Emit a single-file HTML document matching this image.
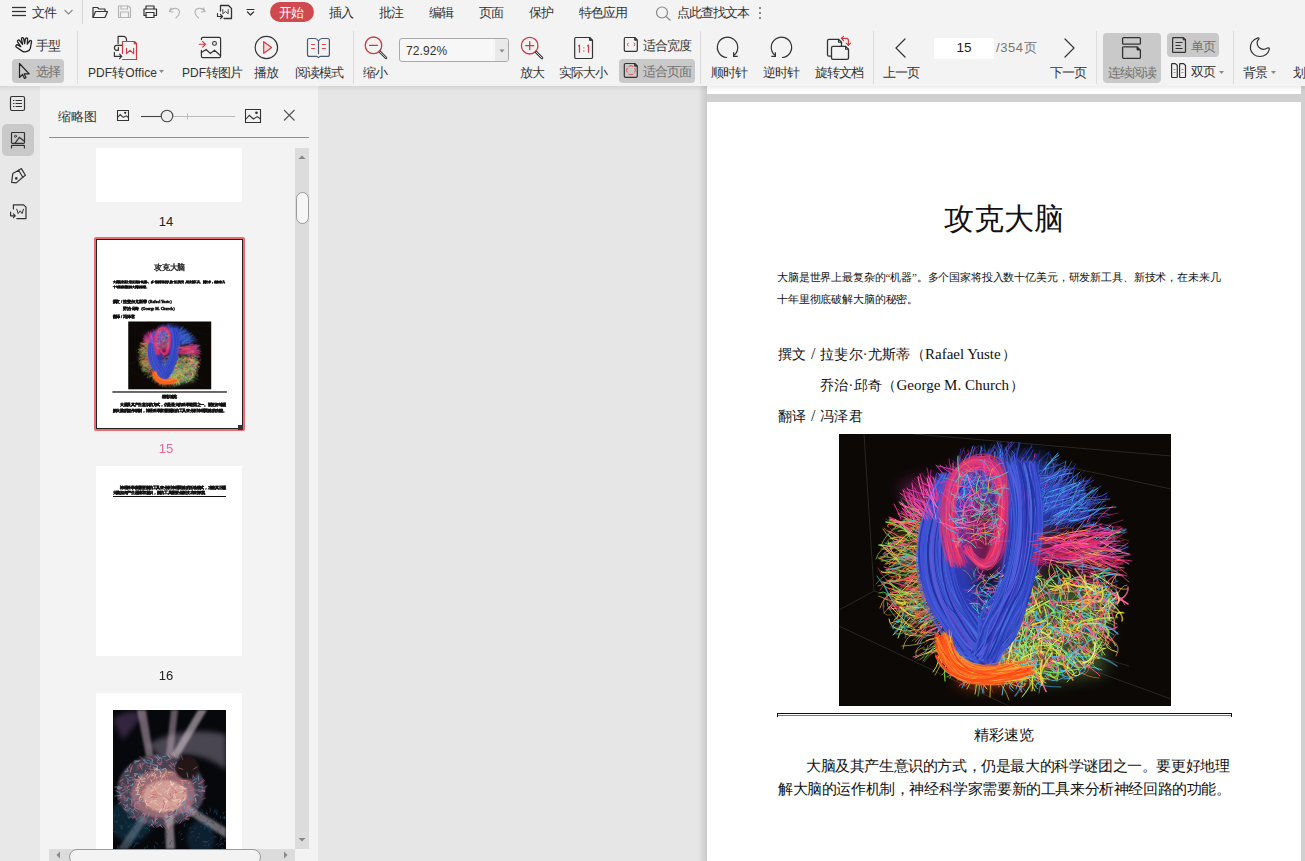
<!DOCTYPE html>
<html><head><meta charset="utf-8">
<style>
*{box-sizing:border-box;margin:0;padding:0}
html,body{width:1305px;height:861px;overflow:hidden;background:#f3f3f3;font-family:"Liberation Sans",sans-serif;color:#333}
.a{position:absolute}
.t{position:absolute;white-space:nowrap;font-size:13px;line-height:16px;color:#333;letter-spacing:-1px}
.L{font-size:12px;letter-spacing:0.1px}
.sep{position:absolute;width:1px;background:#dcdcdc}
svg{position:absolute;overflow:visible}
.hl{position:absolute;background:#c9c9c9;border-radius:4px}
.pt{position:absolute;white-space:nowrap;font-family:"Liberation Serif",serif;color:#111}
.tb{font-weight:bold !important;-webkit-text-stroke:1.8px #111}
.s15{font-size:15px;letter-spacing:0;word-spacing:0}
</style></head><body>
<svg width="0" height="0" style="position:absolute"><defs><filter id="bb" x="-50%" y="-50%" width="200%" height="200%"><feGaussianBlur stdDeviation="8"/></filter><filter id="sb"><feGaussianBlur stdDeviation="0.35"/></filter><symbol id="brain" viewBox="0 0 332 272"><rect width="332" height="272" fill="#0b0806"/><g stroke="#2c2a28" stroke-width="0.9" fill="none"><path d="M25 0 L35 157 L0 176"/><path d="M35 157 L290 232"/><path d="M0 192 L170 272"/><path d="M75 0 L332 22"/><path d="M205 28 L332 55"/><path d="M258 238 L332 265"/></g><g filter="url(#bb)"><path d="M105 45 L130 40 L130 100 L155 215 L130 228 L95 180 L82 120 Z" fill="#2a3cb8" opacity="0.95"/><path d="M170 30 L205 40 L198 130 L178 190 L152 228 L140 212 L158 150 L168 90 Z" fill="#2a3cb8" opacity="0.95"/><path d="M130 25 L200 22 L235 60 L230 90 L190 95 L140 60 Z" fill="#3048c0" opacity="0.7"/><path d="M110 60 C105 25 140 18 160 35 C175 60 170 120 155 130 C130 140 112 120 110 60 Z" fill="#b02a70" opacity="0.6"/><path d="M62 50 L100 42 L105 90 L72 85 Z" fill="#d030a0" opacity="0.45"/><path d="M195 100 L265 108 L268 130 L200 132 Z" fill="#c02878" opacity="0.45"/><path d="M55 90 L95 95 L100 200 L65 190 Z" fill="#9a7a30" opacity="0.35"/><path d="M105 210 L190 215 L185 250 L125 252 Z" fill="#e04818" opacity="0.8"/><path d="M175 145 L270 150 L265 240 L195 250 L165 225 Z" fill="#7aa050" opacity="0.45"/></g><g fill="none" stroke-linecap="round" filter="url(#sb)"><path d="M172 227Q176 235 171 243M132 213Q135 221 133 233M253 188Q263 185 268 195M177 213Q185 219 188 227M166 208Q166 210 163 223" stroke="#ff5080" stroke-width="1.0" opacity="0.8"/><path d="M95 114Q81 106 74 106M91 153Q77 156 67 155M105 190Q95 190 84 194M73 94Q59 86 50 83M72 95Q68 98 55 89M93 104Q83 105 76 101M92 175Q84 174 84 177" stroke="#ff4060" stroke-width="1.0" opacity="1.0"/><path d="M239 100Q241 93 248 98M255 152Q265 154 278 151M248 164Q252 171 258 167M239 144Q249 148 254 155M243 111Q248 110 262 114M232 102Q235 96 244 98M234 124Q249 128 256 127M246 102Q263 99 268 100M253 163Q261 159 261 167M231 147Q236 151 252 145M231 147Q236 152 245 148M234 122Q246 125 247 123M237 157Q238 155 244 164M267 91Q274 94 282 93" stroke="#e02070" stroke-width="1.0" opacity="0.8"/><path d="M223 72Q233 73 244 63M193 66Q197 59 199 57M162 41Q164 33 156 27M187 54Q185 39 192 28M192 71Q195 64 198 66" stroke="#4a70e0" stroke-width="1.0" opacity="1.0"/><path d="M215 89Q215 84 220 79M217 95Q219 86 225 86M183 64Q184 50 176 41M176 55Q177 50 185 40M184 34Q196 30 196 20M171 70Q169 68 172 60" stroke="#ff4090" stroke-width="1.0" opacity="0.8"/><path d="M104 191Q100 202 87 202M87 188Q89 192 82 198M133 212Q127 217 123 230M85 132Q78 122 60 123M78 100Q67 100 62 88M90 111Q84 100 72 93M141 222Q146 233 140 240M108 192Q94 192 85 200M75 172Q60 174 51 175M137 240Q131 248 127 251M59 122Q49 116 48 114M174 242Q176 246 183 258" stroke="#ff60a0" stroke-width="1.0" opacity="1.0"/><path d="M131 73Q128 64 132 48M264 139Q279 139 288 142M108 78Q102 72 94 55M274 129Q279 124 293 127M114 88Q103 81 100 85M226 110Q224 101 232 102M122 87Q111 79 103 82M233 147Q244 147 248 157M259 85Q261 81 274 72" stroke="#ff3090" stroke-width="1.0" opacity="0.8"/><path d="M95 102Q91 94 89 95M93 126Q76 121 71 115" stroke="#ff4060" stroke-width="0.5" opacity="1.0"/><path d="M137 234Q142 247 144 259M122 211Q115 217 118 228M125 221Q131 236 127 245M220 196Q233 196 242 206M178 228Q177 239 179 243M161 218Q164 226 164 230M126 205Q122 207 120 219M131 232Q128 243 123 254M185 231Q189 240 192 238M141 236Q138 236 134 247M211 202Q211 221 216 229" stroke="#40c0ff" stroke-width="1.0" opacity="0.8"/><path d="M234 100Q231 91 240 89M256 119Q259 113 262 114M258 180Q261 190 275 195M231 128Q237 131 243 134M256 126Q264 127 267 119M236 138Q244 137 263 142M249 152Q251 156 263 152" stroke="#ff3090" stroke-width="0.5" opacity="0.8"/><path d="M78 159Q68 160 58 162M91 152Q81 148 78 152M53 138Q43 140 42 137M92 135Q74 140 67 135M100 214Q102 228 94 238M75 86Q74 81 62 69" stroke="#e8d040" stroke-width="1.0" opacity="1.0"/><path d="M151 62Q157 62 156 49M200 72Q209 70 219 57M234 86Q244 85 247 77M139 48Q135 46 134 33M216 55Q221 48 229 44M258 77Q258 76 267 71M212 42Q218 34 212 24M190 71Q192 63 205 54M231 80Q243 72 252 70" stroke="#5a50d0" stroke-width="1.0" opacity="0.8"/><path d="M138 41Q137 36 132 35M212 58Q218 45 221 34M161 56Q164 48 167 39M227 81Q235 80 237 75M165 28Q171 17 169 8" stroke="#ff4090" stroke-width="0.5" opacity="0.8"/><path d="M106 93Q101 92 99 84M251 157Q257 159 272 161M255 95Q272 96 280 99M271 149Q270 151 279 147M114 60Q108 53 91 50M101 91Q99 81 91 77M247 99Q254 94 255 88M97 76Q90 69 76 65M260 115Q279 110 287 112M122 85Q118 81 117 66" stroke="#4060e0" stroke-width="1.0" opacity="0.8"/><path d="M124 81Q127 67 122 61M246 120Q253 122 258 123M240 136Q239 129 248 133M83 76Q68 75 61 70M261 181Q268 179 274 179M248 99Q254 91 258 88M269 148Q281 157 289 155M239 163Q245 166 248 165M266 151Q274 159 283 165" stroke="#f0a040" stroke-width="1.0" opacity="0.8"/><path d="M115 219Q115 228 103 241M207 190Q213 196 228 201M105 208Q101 215 101 220M222 188Q226 186 229 193" stroke="#f0d040" stroke-width="1.0" opacity="0.6"/><path d="M61 125Q57 118 44 120M66 113Q55 110 49 100M97 198Q84 200 81 209M100 176Q93 187 80 188M81 127Q70 120 65 122M109 177Q101 184 98 202M94 115Q78 111 71 113M88 87Q80 82 72 71M104 173Q101 175 87 174M72 117Q65 110 47 109M92 150Q85 150 68 159M70 193Q57 192 55 200M101 103Q95 96 86 89M113 186Q112 197 104 208M106 199Q103 205 91 211M81 169Q78 173 73 173M61 177Q60 183 55 186" stroke="#40c0c0" stroke-width="1.0" opacity="0.8"/><path d="M162 33Q166 26 162 11M201 81Q210 81 209 74M174 31Q178 19 173 17M247 72Q256 59 259 56M136 37Q138 30 143 13" stroke="#5060e0" stroke-width="1.0" opacity="1.0"/><path d="M234 124Q244 119 244 115M122 66Q122 57 110 51M135 71Q138 54 131 45M229 125Q242 124 245 132M239 152Q248 160 256 163M253 153Q259 158 273 163M90 74Q78 63 73 64M223 105Q229 95 230 97" stroke="#f0a040" stroke-width="1.0" opacity="0.6"/><path d="M103 84Q97 74 98 73M137 67Q143 60 140 46" stroke="#f050b0" stroke-width="1.0" opacity="0.6"/><path d="M219 91Q224 90 226 81M198 80Q201 76 205 62" stroke="#4050d8" stroke-width="1.0" opacity="0.6"/><path d="M239 161Q249 168 252 166M250 141Q258 141 265 134" stroke="#ff50a0" stroke-width="0.5" opacity="0.8"/><path d="M176 71Q176 64 177 62M129 33Q128 32 123 27M207 70Q215 63 221 60M157 49Q154 40 151 34M242 92Q252 86 267 91M218 97Q220 92 225 91M243 91Q252 90 253 79M185 74Q184 66 192 63" stroke="#3040c0" stroke-width="1.0" opacity="0.6"/><path d="M195 48Q202 38 198 31M180 59Q181 47 185 36M240 89Q247 87 251 82M146 35Q146 30 142 20" stroke="#3a5ad0" stroke-width="1.0" opacity="0.8"/><path d="M240 145Q241 145 253 148" stroke="#ff50a0" stroke-width="0.5" opacity="0.6"/><path d="M255 119Q267 116 275 104M238 131Q241 128 247 128" stroke="#f0a040" stroke-width="0.5" opacity="1.0"/><path d="M190 44Q194 30 198 23M212 72Q220 64 231 53M238 67Q241 64 244 61M227 66Q227 55 232 51M150 65Q145 55 138 54M189 67Q183 59 185 40M189 52Q189 41 191 33M177 62Q177 51 181 38" stroke="#2a3ab0" stroke-width="1.0" opacity="0.8"/><path d="M96 195Q92 195 79 204" stroke="#d0e040" stroke-width="0.5" opacity="0.6"/><path d="M219 57Q236 52 241 46M232 66Q232 70 242 62" stroke="#40a0f0" stroke-width="1.0" opacity="0.6"/><path d="M90 123Q77 121 72 129M89 142Q82 136 77 136M81 148Q64 146 58 145M91 128Q79 137 77 134M95 205Q91 204 87 207M82 102Q81 94 77 95M104 107Q93 102 92 100M98 113Q96 104 86 107" stroke="#f0a030" stroke-width="1.0" opacity="1.0"/><path d="M260 136Q274 139 277 140M236 135Q248 137 262 132M248 92Q252 93 256 91M234 156Q246 159 254 150M267 110Q277 109 276 103M254 116Q257 118 270 110" stroke="#ff50a0" stroke-width="1.0" opacity="0.8"/><path d="M251 92Q256 92 261 86M253 109Q268 104 272 92M237 109Q245 100 251 89M237 145Q241 146 256 147M237 158Q251 165 259 176" stroke="#e02070" stroke-width="0.5" opacity="0.8"/><path d="M193 224Q198 227 197 236M208 198Q211 203 223 216M189 227Q183 242 186 247M103 215Q101 216 93 219M129 238Q133 245 126 249M119 232Q112 241 111 244M167 210Q167 218 170 218M217 188Q220 187 224 193M162 218Q168 223 165 234M161 207Q155 219 153 229M244 183Q253 179 252 186M151 218Q147 224 141 233" stroke="#40e0c0" stroke-width="1.0" opacity="0.8"/><path d="M71 85Q63 91 50 86M66 117Q61 115 49 111M98 123Q90 124 78 117M92 124Q83 128 68 135" stroke="#e8d040" stroke-width="1.0" opacity="0.8"/><path d="M161 211Q152 216 151 230M228 188Q235 198 244 198" stroke="#50c0f0" stroke-width="0.5" opacity="0.6"/><path d="M186 70Q193 59 196 61M228 83Q228 77 234 65M223 81Q234 79 236 76M193 37Q194 35 199 32" stroke="#3040c0" stroke-width="1.0" opacity="0.8"/><path d="M216 91Q227 84 227 79M210 78Q209 69 215 70M215 86Q217 76 230 75M228 80Q234 79 244 77M186 59Q193 58 195 45M148 67Q152 55 145 54" stroke="#5a50d0" stroke-width="1.0" opacity="0.6"/><path d="M179 37Q177 36 184 24M205 61Q205 51 209 47M221 87Q223 77 226 73M226 81Q239 67 244 65M181 58Q181 52 181 43M248 88Q254 78 252 81" stroke="#ff4090" stroke-width="1.0" opacity="1.0"/><path d="M117 215Q112 222 104 228M237 175Q249 169 255 174M235 176Q241 174 248 176M200 208Q207 210 213 217M191 233Q197 241 193 245M124 225Q116 229 110 235M142 227Q141 236 138 240M234 223Q240 226 246 233M150 201Q146 209 149 210M197 234Q197 247 202 249M130 207Q120 221 112 226M204 192Q214 202 212 217M199 224Q195 222 198 232M187 215Q181 219 186 224" stroke="#ff9040" stroke-width="1.0" opacity="0.8"/><path d="M205 224Q213 236 219 238M232 210Q236 218 238 220M235 170Q243 172 240 178" stroke="#ff5080" stroke-width="1.0" opacity="0.6"/><path d="M106 62Q96 51 94 51M118 85Q105 79 98 73M94 62Q79 59 68 55M113 87Q105 77 105 78M124 86Q118 84 107 70M132 70Q127 61 132 60M109 70Q108 70 101 63" stroke="#e030c0" stroke-width="1.0" opacity="0.8"/><path d="M144 39Q139 25 145 20M246 84Q252 77 255 78M246 85Q255 79 271 76" stroke="#2030a0" stroke-width="0.5" opacity="0.8"/><path d="M88 147Q81 143 66 150M132 217Q122 224 124 234M181 201Q175 204 176 219M83 139Q75 145 67 148M104 165Q93 162 82 168M99 131Q95 127 80 127M69 153Q57 149 47 146M115 192Q107 204 110 209M107 184Q99 198 96 202M63 154Q55 160 53 158M102 106Q93 102 74 105M79 88Q63 84 59 80M189 224Q195 230 197 242M102 208Q101 218 90 219M162 228Q158 243 160 253M84 83Q75 75 78 77M76 84Q68 79 69 77M191 237Q190 245 191 251M259 188Q262 196 267 204M91 184Q80 183 72 192M230 187Q231 186 236 193M247 180Q252 182 255 183M94 182Q86 184 74 195M95 207Q86 221 74 223M66 127Q64 123 54 123M92 180Q81 195 76 200M139 234Q134 242 120 252M248 183Q257 198 258 204M108 174Q108 179 98 176M134 198Q127 208 125 221" stroke="#ff60a0" stroke-width="1.0" opacity="0.8"/><path d="M77 98Q71 87 68 84M77 103Q74 108 60 106M89 211Q86 223 81 226M99 186Q95 189 92 192M89 182Q77 186 74 183M53 139Q45 140 37 150M100 155Q91 153 73 153M85 162Q75 155 61 159" stroke="#60d060" stroke-width="1.0" opacity="0.6"/><path d="M75 121Q73 127 63 123M86 170Q76 175 76 182" stroke="#40c0c0" stroke-width="0.5" opacity="1.0"/><path d="M257 194Q265 195 264 200M119 194Q109 206 109 216M224 190Q231 199 233 215" stroke="#ff9040" stroke-width="0.5" opacity="0.8"/><path d="M231 172Q237 172 241 177M205 211Q206 218 215 216M124 208Q121 216 120 217M126 206Q117 219 116 227M157 225Q166 235 168 251M106 214Q104 218 102 232M110 215Q115 224 107 228M117 196Q120 213 113 219" stroke="#80f060" stroke-width="1.0" opacity="0.8"/><path d="M67 159Q59 164 54 168M107 200Q96 204 87 207M99 154Q86 160 76 165M95 182Q93 185 81 195M99 161Q93 161 81 161" stroke="#f0a030" stroke-width="1.0" opacity="0.8"/><path d="M103 94Q95 89 95 92M63 105Q56 99 51 94M148 221Q149 221 144 234M90 127Q81 127 65 125" stroke="#ff60a0" stroke-width="0.5" opacity="0.8"/><path d="M99 183Q90 190 91 186M54 144Q48 150 39 152M89 168Q83 169 79 181M76 139Q63 136 52 135M88 113Q84 102 77 100M106 175Q105 188 92 193M80 161Q66 164 59 178" stroke="#f07030" stroke-width="1.0" opacity="0.8"/><path d="M178 205Q185 216 188 220M222 191Q225 202 236 204M137 232Q143 244 140 256M161 226Q162 232 152 247M129 212Q122 220 115 221" stroke="#40c0ff" stroke-width="0.5" opacity="1.0"/><path d="M250 116Q252 111 264 102M248 173Q262 176 274 171M263 176Q267 185 278 190M262 174Q271 176 271 184M268 94Q277 100 287 96M265 101Q274 99 274 93M261 166Q278 167 285 163M252 160Q264 162 272 160M246 110Q247 106 258 103" stroke="#40c0f0" stroke-width="1.0" opacity="0.8"/><path d="M133 225Q136 239 138 252M151 221Q153 227 145 235M227 193Q233 203 243 202M128 220Q129 234 125 235M240 184Q247 185 246 190M219 176Q231 181 237 183M189 204Q200 211 199 220M164 211Q169 214 163 226" stroke="#50c0f0" stroke-width="0.5" opacity="0.8"/><path d="M66 114Q65 107 53 104M99 112Q96 110 83 115M89 114Q87 117 76 114M91 104Q85 95 70 90M97 178Q87 181 82 185M107 199Q106 205 95 213M86 91Q75 92 65 83M81 80Q80 73 73 75M65 174Q59 180 57 185" stroke="#d0e040" stroke-width="1.0" opacity="0.8"/><path d="M189 231Q182 250 182 258" stroke="#40e0c0" stroke-width="1.0" opacity="0.6"/><path d="M182 227Q184 235 180 243M146 203Q139 218 131 225M148 227Q144 242 139 251" stroke="#40c0ff" stroke-width="1.0" opacity="1.0"/><path d="M117 90Q114 76 102 72M122 56Q126 47 122 46M263 108Q276 108 278 105M253 116Q263 112 269 104M250 176Q258 188 264 195" stroke="#4060e0" stroke-width="1.0" opacity="0.6"/><path d="M99 161Q86 166 75 166M84 196Q84 199 73 207M69 164Q64 170 49 174M86 214Q84 212 76 218" stroke="#d0e040" stroke-width="0.5" opacity="0.8"/><path d="M89 128Q74 129 66 138M80 102Q78 98 72 102M85 107Q80 112 77 108M61 142Q58 144 52 143" stroke="#f07030" stroke-width="1.0" opacity="0.6"/><path d="M199 225Q193 238 197 241M114 208Q107 217 110 215M146 233Q138 242 136 260M101 215Q85 219 76 224M231 169Q231 168 240 169M155 239Q160 248 158 248M136 237Q134 243 128 255M239 173Q244 170 250 175M165 206Q173 213 172 218M132 222Q124 225 127 235M212 211Q220 222 226 228M179 219Q179 230 182 233M141 204Q141 210 131 224" stroke="#c0f040" stroke-width="1.0" opacity="0.8"/><path d="M189 222Q194 228 202 242M117 207Q109 211 102 226M238 196Q254 203 261 205M143 217Q140 228 142 231" stroke="#c0f040" stroke-width="1.0" opacity="1.0"/><path d="M99 217Q89 222 78 226M191 244Q192 247 192 257M241 186Q247 188 255 188" stroke="#ff9040" stroke-width="0.5" opacity="0.6"/><path d="M199 195Q199 202 201 207M197 194Q201 202 212 212M132 209Q126 214 122 226M186 225Q194 239 201 243" stroke="#f0f080" stroke-width="1.0" opacity="1.0"/><path d="M123 59Q118 55 109 42M101 65Q95 60 89 48" stroke="#ff40a0" stroke-width="1.0" opacity="0.8"/><path d="M197 194Q203 209 198 215M241 212Q254 220 260 224M125 223Q121 230 110 233M106 216Q100 229 100 230M213 226Q214 226 219 232M201 229Q203 231 201 240M134 224Q125 227 123 239M160 224Q152 241 147 247M141 207Q137 217 142 223M195 203Q194 216 193 220M232 222Q241 236 241 240M106 219Q108 220 98 224" stroke="#f0f080" stroke-width="1.0" opacity="0.8"/><path d="M97 86Q93 79 80 82" stroke="#e030c0" stroke-width="0.5" opacity="0.6"/><path d="M178 52Q175 46 176 39M135 48Q133 40 120 25M177 63Q176 54 184 52M188 57Q186 45 190 36M237 83Q244 76 260 68" stroke="#5060e0" stroke-width="1.0" opacity="0.6"/><path d="M76 192Q64 193 51 193M102 99Q91 97 86 94M78 175Q65 177 59 188M72 153Q68 148 52 146" stroke="#40c0c0" stroke-width="0.5" opacity="0.8"/><path d="M147 234Q150 249 154 259M260 184Q268 190 272 187" stroke="#ff5080" stroke-width="0.5" opacity="0.6"/><path d="M269 103Q274 105 282 97" stroke="#40c0f0" stroke-width="0.5" opacity="0.8"/><path d="M236 200Q241 204 240 209M231 196Q231 206 238 206M199 205Q214 214 222 221M232 184Q232 190 239 191M148 222Q137 228 134 237M106 208Q91 217 87 220M139 227Q143 232 142 247" stroke="#e0f040" stroke-width="1.0" opacity="1.0"/><path d="M251 128Q254 133 265 128M236 110Q247 108 248 112M247 143Q255 141 255 143" stroke="#e02070" stroke-width="0.5" opacity="1.0"/><path d="M222 195Q230 199 247 203M127 193Q117 198 106 210M247 187Q260 193 265 193M182 213Q184 216 187 223" stroke="#f0d040" stroke-width="0.5" opacity="0.8"/><path d="M86 167Q75 173 71 177M57 126Q52 122 41 123M68 141Q57 142 47 136M117 182Q118 192 107 197" stroke="#60d060" stroke-width="1.0" opacity="1.0"/><path d="M261 94Q262 96 272 96M253 170Q264 175 263 175M242 111Q254 108 259 112M228 111Q239 107 250 113M239 113Q249 108 257 112M251 137Q253 139 261 137" stroke="#e02070" stroke-width="1.0" opacity="1.0"/><path d="M65 121Q57 120 56 119M98 155Q94 152 90 155M79 81Q70 83 60 79M78 132Q70 132 66 132M86 134Q85 133 73 133M78 179Q79 184 70 191M59 155Q51 149 42 147M92 187Q91 190 82 200M105 105Q99 98 98 98M91 105Q82 97 78 87" stroke="#ff4060" stroke-width="1.0" opacity="0.8"/><path d="M156 207Q152 213 149 224M228 225Q230 232 242 232M83 98Q76 95 72 87M248 204Q254 200 267 207M95 157Q89 157 81 160M182 223Q181 231 190 244M96 108Q84 104 69 109M70 129Q68 127 62 128M90 106Q77 99 67 101M228 181Q233 188 237 185" stroke="#ff60a0" stroke-width="1.0" opacity="0.6"/><path d="M71 184Q63 191 59 204M97 142Q88 144 82 136M78 171Q75 173 68 172" stroke="#d0e040" stroke-width="1.0" opacity="1.0"/><path d="M146 36Q143 30 142 25M211 43Q213 44 221 34M235 64Q240 57 252 51M139 31Q137 31 137 20" stroke="#40a0f0" stroke-width="0.5" opacity="1.0"/><path d="M226 87Q235 84 237 84M200 71Q211 62 216 56M186 75Q185 60 189 57M217 84Q226 75 223 63M218 65Q222 60 227 54M223 48Q220 42 227 36M182 47Q180 36 178 26M187 63Q196 55 194 50" stroke="#40a0f0" stroke-width="1.0" opacity="0.8"/><path d="M101 164Q90 164 74 169M62 109Q54 117 42 115" stroke="#e8d040" stroke-width="0.5" opacity="1.0"/><path d="M254 81Q262 71 268 62M220 43Q223 40 222 33M187 47Q189 41 191 33M212 82Q218 66 216 62M224 64Q228 51 232 45M191 54Q196 39 192 31M193 60Q200 56 202 50" stroke="#3040c0" stroke-width="1.0" opacity="1.0"/><path d="M82 138Q67 130 59 128M97 215Q93 219 85 228M87 128Q86 127 80 122M99 169Q91 179 73 180M87 115Q73 121 67 121" stroke="#f0a030" stroke-width="0.5" opacity="0.8"/><path d="M142 66Q141 54 138 45M229 88Q232 84 242 70M203 69Q214 61 217 55M215 96Q223 90 224 85M245 61Q245 61 252 58" stroke="#4050d8" stroke-width="1.0" opacity="0.8"/><path d="M243 79Q249 74 255 76M152 46Q153 38 146 35M237 64Q234 54 243 47M157 54Q158 44 157 37" stroke="#3a5ad0" stroke-width="1.0" opacity="1.0"/><path d="M148 58Q145 48 146 35M151 30Q151 18 143 14M170 47Q180 37 180 24" stroke="#2a3ab0" stroke-width="1.0" opacity="0.6"/><path d="M262 144Q270 139 284 141M243 151Q250 147 266 149M257 149Q257 153 269 147M231 111Q239 114 245 106" stroke="#ff50a0" stroke-width="1.0" opacity="0.6"/><path d="M215 52Q212 44 216 38M211 38Q216 34 211 20M198 61Q194 54 201 50" stroke="#3a5ad0" stroke-width="0.5" opacity="0.8"/><path d="M103 105Q94 103 95 101M97 169Q97 167 90 177M102 95Q94 89 84 83" stroke="#f07030" stroke-width="0.5" opacity="0.8"/><path d="M246 211Q250 219 260 221M260 190Q270 198 275 201" stroke="#50c0f0" stroke-width="1.0" opacity="0.8"/><path d="M256 106Q257 104 267 98M246 150Q246 155 254 155M245 148Q251 151 260 154M255 145Q272 138 281 141M268 173Q270 169 276 175M260 93Q267 97 272 91" stroke="#40c0f0" stroke-width="1.0" opacity="1.0"/><path d="M165 61Q164 54 175 47M163 43Q159 34 159 34M211 64Q215 58 223 51M192 30Q199 29 201 17M189 31Q187 23 191 22" stroke="#2030a0" stroke-width="1.0" opacity="0.6"/><path d="M161 227Q156 241 162 247M185 201Q192 205 204 218M141 205Q148 214 144 220M156 218Q159 220 161 234M229 196Q239 208 243 215" stroke="#e0f040" stroke-width="0.5" opacity="0.8"/><path d="M231 102Q234 97 242 102M249 139Q256 139 273 129M236 155Q242 158 252 155" stroke="#f0a040" stroke-width="0.5" opacity="0.8"/><path d="M111 225Q104 230 106 247M145 222Q135 231 135 242M166 239Q166 244 174 254M133 240Q137 241 130 249M179 210Q185 211 185 222M146 210Q143 213 144 221M195 241Q190 248 196 257M142 198Q144 204 143 211" stroke="#80f060" stroke-width="1.0" opacity="1.0"/><path d="M146 233Q146 233 150 244M184 225Q184 230 191 244M208 202Q213 203 209 212M186 205Q193 215 202 225M224 166Q221 165 230 173M116 218Q105 224 104 229M232 217Q231 217 235 229M228 185Q229 192 234 202" stroke="#ff9040" stroke-width="1.0" opacity="1.0"/><path d="M181 208Q180 210 186 223M120 213Q113 230 113 238" stroke="#40c0ff" stroke-width="0.5" opacity="0.8"/><path d="M88 189Q82 197 78 196M74 125Q71 121 62 123M89 177Q85 185 80 188M102 176Q102 183 92 184M77 140Q66 147 57 146M87 96Q83 101 74 95" stroke="#40c0c0" stroke-width="1.0" opacity="1.0"/><path d="M83 91Q72 85 66 89M68 164Q59 165 59 172M90 174Q74 186 70 190" stroke="#60d060" stroke-width="0.5" opacity="0.8"/><path d="M238 58Q245 59 245 53M146 60Q140 54 142 38M190 71Q195 64 203 48M242 85Q252 77 262 67M223 72Q232 63 235 49M167 40Q175 29 176 25M181 41Q185 32 190 23M219 84Q222 76 222 76M254 82Q263 77 271 81" stroke="#5060e0" stroke-width="1.0" opacity="0.8"/><path d="M132 222Q123 232 123 236M237 180Q249 179 255 179M127 194Q130 201 124 219M215 216Q215 217 224 223M147 216Q149 223 141 222M136 235Q143 249 139 262" stroke="#80f060" stroke-width="1.0" opacity="0.6"/><path d="M139 29Q145 21 140 18M163 52Q165 46 166 43" stroke="#2a3ab0" stroke-width="0.5" opacity="0.8"/><path d="M231 52Q233 45 235 36M173 61Q168 51 165 43M213 54Q224 45 235 42M235 85Q244 80 250 67M202 82Q212 71 211 65M219 81Q228 69 239 68M166 63Q162 57 170 44" stroke="#3548c8" stroke-width="1.0" opacity="0.8"/><path d="M257 192Q261 191 269 194M91 136Q85 137 79 131M64 157Q62 160 54 153" stroke="#ff60a0" stroke-width="0.5" opacity="1.0"/><path d="M149 228Q154 245 149 252M159 227Q167 235 166 241M172 238Q177 247 187 258M129 229Q117 239 114 239" stroke="#50c0f0" stroke-width="0.5" opacity="1.0"/><path d="M235 100Q245 88 248 82M244 92Q247 94 257 90M247 167Q251 165 265 168" stroke="#ff50a0" stroke-width="1.0" opacity="1.0"/><path d="M149 65Q138 49 132 43" stroke="#4050d8" stroke-width="0.5" opacity="1.0"/><path d="M64 111Q56 103 45 94M89 134Q85 135 74 135M60 162Q53 170 45 179M97 107Q89 104 77 107M91 174Q90 174 78 181M99 113Q96 119 91 114" stroke="#f0a030" stroke-width="1.0" opacity="0.6"/><path d="M223 174Q229 177 246 182M243 215Q251 220 252 226" stroke="#ff5080" stroke-width="1.0" opacity="1.0"/><path d="M90 81Q87 81 75 70M103 58Q107 50 100 40" stroke="#f050b0" stroke-width="1.0" opacity="0.8"/><path d="M248 188Q253 193 264 207M169 225Q166 230 166 235M227 187Q230 187 238 193M203 198Q211 200 217 211M128 229Q115 240 108 243" stroke="#c0f040" stroke-width="1.0" opacity="0.6"/><path d="M109 174Q95 178 92 188M88 95Q82 93 69 90M72 167Q65 160 48 160M79 177Q77 188 72 188M83 151Q72 159 66 163" stroke="#f07030" stroke-width="1.0" opacity="1.0"/><path d="M164 34Q165 23 161 19M151 49Q146 42 140 34M178 68Q181 66 172 52" stroke="#40a0f0" stroke-width="0.5" opacity="0.8"/><path d="M83 125Q74 130 64 123M68 127Q61 123 42 127M67 119Q67 121 57 121M79 168Q68 164 56 166M77 108Q70 109 69 97M84 132Q72 138 70 133M82 211Q76 215 77 222" stroke="#e8d040" stroke-width="1.0" opacity="0.6"/><path d="M174 227Q171 233 173 240M153 235Q151 253 151 263M211 209Q221 213 223 221M137 197Q126 201 123 216M218 184Q224 187 226 186M141 209Q142 216 133 228M170 206Q174 212 179 217M221 191Q229 198 233 201" stroke="#f0d040" stroke-width="1.0" opacity="0.8"/><path d="M276 131Q277 130 283 128M273 112Q280 107 285 106M273 123Q282 123 289 129M262 83Q274 80 279 79M243 120Q254 123 263 125M247 109Q257 101 262 92M247 145Q252 151 263 152M249 173Q263 174 270 186M241 139Q250 136 266 134" stroke="#e02070" stroke-width="1.0" opacity="0.6"/><path d="M177 203Q174 210 179 225M177 229Q179 228 180 238M168 211Q176 224 176 233M243 182Q257 185 261 190M167 247Q163 255 163 261M138 211Q130 209 129 218" stroke="#50c0f0" stroke-width="1.0" opacity="1.0"/><path d="M140 74Q135 69 136 56M102 68Q96 66 83 63M135 77Q137 69 135 68" stroke="#e030c0" stroke-width="0.5" opacity="0.8"/><path d="M69 169Q69 176 60 178M85 112Q78 112 66 112M93 188Q91 186 85 193M84 99Q70 105 68 101M96 210Q95 213 84 227M105 181Q91 189 80 188M100 97Q102 90 94 87M67 110Q54 105 49 110M80 81Q79 80 72 80" stroke="#60d060" stroke-width="1.0" opacity="0.8"/><path d="M99 71Q100 71 93 61M101 91Q98 86 83 88M120 71Q112 68 108 66M126 55Q121 56 123 47M240 112Q254 104 259 96M104 55Q99 51 92 42M110 58Q103 48 103 49M119 39Q110 36 110 25" stroke="#ff3090" stroke-width="1.0" opacity="0.6"/><path d="M190 57Q185 42 187 37M190 57Q194 54 191 49M140 55Q149 41 148 29M183 58Q188 57 185 49" stroke="#3548c8" stroke-width="1.0" opacity="1.0"/><path d="M192 71Q204 60 204 52" stroke="#40a0f0" stroke-width="0.5" opacity="0.6"/><path d="M256 186Q267 186 276 192M146 203Q139 207 133 216M150 245Q142 248 145 259" stroke="#80f060" stroke-width="0.5" opacity="1.0"/><path d="M97 152Q90 151 85 150M98 110Q84 113 70 112M78 199Q72 196 70 203M62 147Q61 148 50 146M71 170Q70 173 63 180" stroke="#ff4060" stroke-width="0.5" opacity="0.6"/><path d="M154 71Q145 66 149 56M207 48Q212 42 226 34M162 27Q159 22 162 16M241 71Q245 70 246 59M220 47Q226 36 227 27M142 37Q142 28 142 12" stroke="#4a70e0" stroke-width="1.0" opacity="0.8"/><path d="M129 74Q120 71 112 58M110 49Q101 41 99 39M127 57Q113 51 105 42" stroke="#ff70c0" stroke-width="1.0" opacity="0.6"/><path d="M185 71Q190 64 189 64M192 36Q192 29 198 20M146 66Q139 57 139 49" stroke="#2a3ab0" stroke-width="1.0" opacity="1.0"/><path d="M143 244Q135 246 136 254" stroke="#e0f040" stroke-width="0.5" opacity="0.6"/><path d="M171 37Q171 23 176 20M177 64Q172 50 170 41" stroke="#4050d8" stroke-width="1.0" opacity="1.0"/><path d="M208 200Q213 202 216 209" stroke="#ff5080" stroke-width="0.5" opacity="0.8"/><path d="M159 247Q166 254 170 266M158 202Q159 213 165 226M180 242Q179 252 187 250M104 225Q98 238 96 241M147 200Q149 199 140 210" stroke="#e0f040" stroke-width="1.0" opacity="0.6"/><path d="M273 122Q274 124 284 123M253 132Q268 138 279 137" stroke="#40c0f0" stroke-width="1.0" opacity="0.6"/><path d="M100 151Q91 149 87 149M81 119Q74 112 66 110M78 136Q67 140 59 136M69 95Q57 95 47 85" stroke="#e8d040" stroke-width="0.5" opacity="0.6"/><path d="M172 225Q183 231 187 246M140 231Q138 245 148 255M208 225Q207 230 215 238" stroke="#f0d040" stroke-width="1.0" opacity="1.0"/><path d="M192 233Q202 247 206 252" stroke="#40e0c0" stroke-width="0.5" opacity="0.6"/><path d="M84 184Q76 182 70 188" stroke="#d0e040" stroke-width="0.5" opacity="1.0"/><path d="M225 69Q232 60 230 60M227 82Q238 79 237 70" stroke="#2030a0" stroke-width="0.5" opacity="1.0"/><path d="M226 89Q238 81 249 84M198 65Q206 65 206 60" stroke="#3040c0" stroke-width="0.5" opacity="0.8"/><path d="M119 85Q117 85 104 80" stroke="#f050b0" stroke-width="0.5" opacity="0.8"/><path d="M91 191Q83 188 82 196" stroke="#60d060" stroke-width="0.5" opacity="1.0"/><path d="M216 227Q222 233 218 247M216 184Q223 193 236 198M125 212Q128 217 124 231M132 224Q124 231 119 246" stroke="#e0f040" stroke-width="1.0" opacity="0.8"/><path d="M212 231Q212 235 221 239M125 218Q124 234 121 239M126 227Q121 232 121 241" stroke="#c0f040" stroke-width="0.5" opacity="0.8"/><path d="M115 72Q108 72 95 62M114 76Q108 75 94 64" stroke="#ff40a0" stroke-width="1.0" opacity="0.6"/><path d="M117 72Q110 64 110 63M105 82Q99 77 93 77M99 67Q88 64 86 56M114 46Q114 36 114 29M99 53Q94 51 97 43" stroke="#ff70c0" stroke-width="1.0" opacity="0.8"/><path d="M162 40Q165 35 164 30" stroke="#3548c8" stroke-width="0.5" opacity="1.0"/><path d="M221 85Q222 84 231 82M226 80Q236 69 239 67" stroke="#5a50d0" stroke-width="0.5" opacity="0.6"/><path d="M216 192Q220 191 219 202M129 236Q126 242 125 252M226 175Q228 184 239 194M227 219Q224 229 230 233" stroke="#ff9040" stroke-width="1.0" opacity="0.6"/><path d="M209 68Q215 54 213 49M188 76Q186 66 193 63M152 69Q156 62 153 59M214 47Q223 46 223 34M184 72Q188 60 189 52M249 88Q259 80 271 84M144 75Q139 74 135 65" stroke="#2030a0" stroke-width="1.0" opacity="0.8"/><path d="M155 211Q159 229 157 237M156 216Q158 233 161 243M217 203Q220 217 220 229M122 205Q121 211 120 217" stroke="#f0f080" stroke-width="1.0" opacity="0.6"/><path d="M77 147Q71 157 57 158M82 165Q75 169 67 163M106 167Q104 178 99 180" stroke="#ff4060" stroke-width="1.0" opacity="0.6"/><path d="M111 44Q111 35 111 31M114 72Q111 64 104 56" stroke="#ff70c0" stroke-width="0.5" opacity="0.8"/><path d="M249 173Q258 177 265 184M267 179Q270 178 282 185" stroke="#e02070" stroke-width="0.5" opacity="0.6"/><path d="M197 64Q197 54 197 54M162 64Q156 61 162 47" stroke="#5060e0" stroke-width="0.5" opacity="1.0"/><path d="M211 48Q219 48 219 40" stroke="#40a0f0" stroke-width="1.0" opacity="1.0"/><path d="M236 128Q244 126 255 125M226 109Q228 106 235 102M93 53Q93 54 83 49M232 107Q230 101 239 102" stroke="#ff3090" stroke-width="1.0" opacity="1.0"/><path d="M106 86Q98 83 95 84M251 166Q262 167 269 174M270 122Q279 116 289 113M247 93Q253 88 258 92" stroke="#4060e0" stroke-width="1.0" opacity="1.0"/><path d="M162 226Q157 239 164 243M234 213Q234 210 240 219" stroke="#80f060" stroke-width="0.5" opacity="0.8"/><path d="M72 110Q67 106 61 108" stroke="#60d060" stroke-width="0.5" opacity="0.6"/><path d="M269 102Q274 101 290 107M233 152Q247 151 259 157" stroke="#f0a040" stroke-width="0.5" opacity="0.6"/><path d="M144 75Q148 64 145 62M134 43Q129 39 113 26" stroke="#5060e0" stroke-width="0.5" opacity="0.8"/><path d="M110 67Q97 55 94 50M125 85Q120 79 122 76M119 61Q117 49 112 49M273 121Q273 115 280 117M247 96Q250 94 263 97" stroke="#4060e0" stroke-width="0.5" opacity="0.6"/><path d="M222 77Q230 68 227 56M160 35Q158 24 159 7" stroke="#3548c8" stroke-width="0.5" opacity="0.8"/><path d="M94 212Q88 218 84 215M57 115Q49 107 50 110M86 198Q76 207 76 208M86 208Q80 211 63 212M106 166Q92 171 86 168M89 161Q83 167 69 165M85 147Q78 150 70 145" stroke="#d0e040" stroke-width="1.0" opacity="0.6"/><path d="M174 72Q171 58 169 54" stroke="#4a70e0" stroke-width="0.5" opacity="1.0"/><path d="M221 86Q224 76 226 71" stroke="#5a50d0" stroke-width="0.5" opacity="0.8"/><path d="M89 207Q88 211 77 218M100 135Q82 138 77 146" stroke="#ff60a0" stroke-width="0.5" opacity="0.6"/><path d="M65 177Q57 181 55 180" stroke="#f07030" stroke-width="0.5" opacity="1.0"/><path d="M246 204Q250 218 260 224" stroke="#f0d040" stroke-width="0.5" opacity="1.0"/><path d="M169 212Q175 221 173 224M220 217Q221 214 231 222" stroke="#e0f040" stroke-width="0.5" opacity="1.0"/><path d="M253 158Q259 169 270 170M271 112Q281 108 286 109M223 108Q233 106 250 110M126 85Q122 79 113 74" stroke="#ff3090" stroke-width="0.5" opacity="0.6"/><path d="M179 65Q180 50 184 40" stroke="#3040c0" stroke-width="0.5" opacity="0.6"/><path d="M205 36Q200 26 203 26M162 36Q161 22 163 11" stroke="#2030a0" stroke-width="1.0" opacity="1.0"/><path d="M220 58Q221 52 233 50M207 84Q212 78 217 65" stroke="#4050d8" stroke-width="0.5" opacity="0.8"/><path d="M240 92Q241 96 252 91" stroke="#3548c8" stroke-width="0.5" opacity="0.6"/><path d="M111 95Q99 91 94 81" stroke="#ff70c0" stroke-width="0.5" opacity="1.0"/><path d="M111 48Q106 42 97 31M120 48Q111 49 112 41M111 56Q106 50 96 45" stroke="#e030c0" stroke-width="1.0" opacity="1.0"/><path d="M231 99Q239 91 257 90M243 170Q254 176 258 189" stroke="#40c0f0" stroke-width="0.5" opacity="0.6"/><path d="M129 206Q126 219 131 232" stroke="#c0f040" stroke-width="0.5" opacity="0.6"/><path d="M181 62Q178 53 182 43M212 81Q219 77 230 71" stroke="#3a5ad0" stroke-width="1.0" opacity="0.6"/><path d="M262 117Q272 117 274 117" stroke="#ff3090" stroke-width="0.5" opacity="1.0"/><path d="M109 72Q102 65 86 63" stroke="#ff70c0" stroke-width="1.0" opacity="1.0"/><path d="M223 95Q225 91 232 80M221 91Q232 82 241 81" stroke="#5060e0" stroke-width="0.5" opacity="0.6"/><path d="M67 136Q53 141 45 138" stroke="#f0a030" stroke-width="0.5" opacity="0.6"/><path d="M271 116Q282 112 288 119M248 102Q251 98 261 85M235 118Q247 116 262 114M111 97Q101 96 93 95" stroke="#4060e0" stroke-width="0.5" opacity="0.8"/><path d="M196 35Q201 31 196 27" stroke="#2a3ab0" stroke-width="0.5" opacity="1.0"/><path d="M151 228Q148 229 148 238" stroke="#f0f080" stroke-width="0.5" opacity="0.8"/><path d="M155 220Q162 224 158 239" stroke="#ff9040" stroke-width="0.5" opacity="1.0"/><path d="M195 242Q193 241 200 250M129 198Q125 212 124 219M141 208Q145 217 143 219M206 206Q222 210 227 218" stroke="#40c0ff" stroke-width="1.0" opacity="0.6"/><path d="M103 107Q98 101 86 87M91 131Q78 122 69 115M68 155Q63 162 50 161M79 166Q75 165 61 173" stroke="#e8d040" stroke-width="0.5" opacity="0.8"/><path d="M242 88Q248 74 257 71M188 44Q189 33 187 17" stroke="#4050d8" stroke-width="0.5" opacity="0.6"/><path d="M173 29Q171 22 166 14" stroke="#4a70e0" stroke-width="1.0" opacity="0.6"/><path d="M219 63Q224 61 240 53" stroke="#3040c0" stroke-width="0.5" opacity="1.0"/><path d="M73 197Q68 197 66 204M112 195Q110 204 103 209" stroke="#40c0c0" stroke-width="1.0" opacity="0.6"/><path d="M99 65Q91 56 84 52" stroke="#ff40a0" stroke-width="0.5" opacity="1.0"/><path d="M99 173Q90 170 73 176" stroke="#f0a030" stroke-width="0.5" opacity="1.0"/><path d="M69 156Q67 154 58 157" stroke="#40c0c0" stroke-width="0.5" opacity="0.6"/><path d="M148 40Q145 38 152 27M163 37Q158 30 159 15" stroke="#3548c8" stroke-width="1.0" opacity="0.6"/><path d="M74 170Q65 167 50 168" stroke="#f07030" stroke-width="0.5" opacity="0.6"/><path d="M114 70Q115 58 106 53M255 128Q261 133 263 131M245 121Q250 122 266 116" stroke="#f0a040" stroke-width="1.0" opacity="1.0"/><path d="M161 58Q167 51 168 46" stroke="#4a70e0" stroke-width="0.5" opacity="0.8"/><path d="M238 96Q241 96 251 88" stroke="#40c0f0" stroke-width="0.5" opacity="1.0"/><path d="M110 94Q97 86 89 79" stroke="#ff40a0" stroke-width="0.5" opacity="0.8"/><path d="M206 192Q217 200 219 215M175 211Q183 222 184 222" stroke="#c0f040" stroke-width="0.5" opacity="1.0"/><path d="M159 60Q153 53 153 43M149 56Q160 46 172 32M159 41Q168 33 167 28" stroke="#5060e0" stroke-width="1.0" opacity="1.0"/><path d="M176 31Q178 18 180 8M166 75Q174 65 173 61M176 52Q177 36 184 24M148 64Q144 42 139 28M179 74Q177 69 181 58" stroke="#4050d8" stroke-width="1.0" opacity="0.6"/><path d="M141 67Q135 56 135 48M134 67Q143 51 146 36M177 29Q182 23 193 13M138 34Q145 22 155 12M158 54Q160 34 154 15" stroke="#2a3ab0" stroke-width="1.0" opacity="0.8"/><path d="M150 74Q165 62 170 46M167 59Q167 47 157 36M178 67Q180 57 181 51M179 79Q175 71 169 56M148 75Q149 59 141 46M176 63Q173 52 178 43M177 69Q186 53 192 37" stroke="#5a50d0" stroke-width="1.0" opacity="0.8"/><path d="M166 64Q164 47 155 37" stroke="#3548c8" stroke-width="1.0" opacity="1.0"/><path d="M175 27Q175 21 176 11M157 69Q152 57 150 36M173 50Q176 37 183 32M179 58Q171 42 172 25" stroke="#3040c0" stroke-width="0.5" opacity="0.6"/><path d="M161 23Q160 20 162 8M130 52Q133 40 133 23M125 60Q126 55 120 44M121 71Q123 56 121 33M153 53Q153 34 146 16M159 56Q158 45 153 28" stroke="#4050d8" stroke-width="0.5" opacity="0.8"/><path d="M159 59Q159 53 166 36M130 69Q131 62 122 48M173 74Q176 55 174 44M141 60Q137 38 135 24M139 57Q144 37 148 24M165 58Q166 41 178 25M171 76Q181 62 183 49M177 45Q173 32 172 18" stroke="#40a0f0" stroke-width="0.5" opacity="0.8"/><path d="M149 29Q149 21 156 10M121 79Q117 57 121 41M135 59Q134 47 129 26M160 54Q152 34 150 22" stroke="#5a50d0" stroke-width="1.0" opacity="0.6"/><path d="M177 60Q181 50 181 34M124 44Q126 38 137 23M160 65Q159 43 161 26M168 51Q165 38 162 30M170 38Q185 28 193 11M130 55Q133 43 142 29" stroke="#3040c0" stroke-width="1.0" opacity="0.8"/><path d="M170 47Q167 31 155 11M158 66Q169 57 172 46M164 80Q171 64 184 56" stroke="#4a70e0" stroke-width="0.5" opacity="0.8"/><path d="M173 38Q178 27 178 21M135 43Q129 31 131 24M142 78Q141 75 150 63M132 63Q127 55 123 36M176 54Q173 48 174 39M125 27Q131 25 136 13M128 46Q137 30 152 16" stroke="#2030a0" stroke-width="0.5" opacity="0.8"/><path d="M144 75Q142 66 141 57M128 43Q136 33 135 22M132 78Q145 57 150 42" stroke="#4a70e0" stroke-width="1.0" opacity="0.6"/><path d="M169 57Q172 44 176 41M175 37Q173 22 174 16" stroke="#3548c8" stroke-width="0.5" opacity="0.8"/><path d="M145 56Q139 37 131 26M126 72Q132 64 133 50M178 78Q176 64 174 60M143 74Q148 57 162 39M176 64Q166 49 163 35" stroke="#40a0f0" stroke-width="1.0" opacity="0.6"/><path d="M157 64Q158 52 156 33M157 36Q165 25 173 8M131 48Q139 38 142 28" stroke="#4050d8" stroke-width="1.0" opacity="0.8"/><path d="M163 58Q169 44 176 36M121 76Q129 60 146 51M139 33Q137 24 137 16M159 80Q153 66 144 44M121 40Q124 28 134 24" stroke="#3548c8" stroke-width="0.5" opacity="1.0"/><path d="M147 61Q142 40 140 26M157 55Q155 48 150 36M152 21Q158 19 161 8M150 79Q160 60 167 44" stroke="#5a50d0" stroke-width="0.5" opacity="0.8"/><path d="M132 51Q145 35 154 24M139 71Q152 61 166 42M141 75Q142 57 139 42" stroke="#3548c8" stroke-width="0.5" opacity="0.6"/><path d="M140 43Q147 26 156 13M158 67Q161 45 167 29M177 62Q182 53 185 45" stroke="#3a5ad0" stroke-width="1.0" opacity="0.8"/><path d="M121 72Q135 59 142 38M137 66Q139 53 143 36M146 71Q144 56 133 36M158 56Q159 50 153 38M162 30Q157 21 157 11M172 71Q177 55 189 39" stroke="#3040c0" stroke-width="0.5" opacity="0.8"/><path d="M167 75Q167 60 174 53M165 54Q173 37 171 23M158 55Q156 39 160 30" stroke="#4a70e0" stroke-width="0.5" opacity="1.0"/><path d="M158 35Q159 29 156 18M129 47Q135 36 132 23M147 42Q145 28 150 15M163 24Q166 13 172 8M151 78Q159 65 160 51M179 79Q176 62 178 51M156 66Q173 50 179 35" stroke="#5060e0" stroke-width="1.0" opacity="0.6"/><path d="M130 77Q136 67 142 53M147 73Q138 58 139 46M176 72Q166 59 162 42" stroke="#2030a0" stroke-width="1.0" opacity="0.6"/><path d="M178 78Q185 69 196 51M125 66Q124 63 131 51M162 67Q166 57 166 41M160 44Q162 25 159 9M151 57Q159 44 162 40" stroke="#5060e0" stroke-width="0.5" opacity="0.6"/><path d="M126 70Q122 56 119 50M168 77Q169 65 176 54M143 26Q148 22 145 10M147 41Q144 36 143 23" stroke="#40a0f0" stroke-width="0.5" opacity="0.6"/><path d="M158 46Q159 37 152 28M166 28Q172 26 177 14M128 77Q127 63 123 57M150 44Q150 30 147 23" stroke="#2030a0" stroke-width="0.5" opacity="0.6"/><path d="M173 60Q175 56 171 44M125 37Q122 28 129 20" stroke="#40a0f0" stroke-width="1.0" opacity="1.0"/><path d="M123 45Q134 32 136 12" stroke="#2030a0" stroke-width="0.5" opacity="1.0"/><path d="M165 31Q165 23 158 8M170 34Q168 26 167 13M127 76Q132 73 133 60M122 59Q126 45 139 34M152 56Q161 43 161 20" stroke="#5060e0" stroke-width="1.0" opacity="0.8"/><path d="M169 29Q178 19 180 13M159 28Q161 18 163 10M143 54Q135 44 131 27M136 58Q134 44 124 22M175 29Q184 19 186 14" stroke="#3a5ad0" stroke-width="0.5" opacity="0.6"/><path d="M123 34Q123 28 130 19M130 48Q136 25 140 12M137 36Q141 24 155 15" stroke="#5a50d0" stroke-width="0.5" opacity="0.6"/><path d="M173 45Q181 40 184 28M129 71Q130 62 129 45M131 56Q131 49 126 41M157 62Q157 55 164 48M174 65Q173 53 172 49M147 62Q149 48 145 43M174 65Q179 53 185 38M126 29Q133 17 139 12" stroke="#3548c8" stroke-width="1.0" opacity="0.6"/><path d="M155 53Q156 46 151 35M129 70Q138 58 148 48M135 37Q136 27 144 16M127 47Q123 39 128 21" stroke="#2a3ab0" stroke-width="1.0" opacity="1.0"/><path d="M153 35Q160 27 173 11M125 69Q125 65 121 51" stroke="#2a3ab0" stroke-width="1.0" opacity="0.6"/><path d="M179 56Q187 46 185 41M120 71Q121 67 127 53" stroke="#3a5ad0" stroke-width="1.0" opacity="1.0"/><path d="M149 50Q155 41 159 34M175 69Q172 53 169 42" stroke="#3040c0" stroke-width="0.5" opacity="1.0"/><path d="M148 42Q156 28 156 18M170 48Q162 33 161 15M176 77Q184 59 197 46" stroke="#40a0f0" stroke-width="1.0" opacity="0.8"/><path d="M150 53Q147 34 151 20M164 43Q166 39 178 29M169 70Q163 57 165 54" stroke="#4a70e0" stroke-width="1.0" opacity="0.8"/><path d="M156 79Q161 76 168 66M128 49Q127 30 134 12" stroke="#4a70e0" stroke-width="1.0" opacity="1.0"/><path d="M138 78Q142 66 155 57M121 64Q123 51 120 38M133 55Q135 41 136 36M177 64Q175 43 178 25M141 66Q142 52 143 32M148 33Q160 22 171 9M152 56Q148 39 149 30" stroke="#2030a0" stroke-width="1.0" opacity="0.8"/><path d="M164 35Q166 25 170 20M145 52Q159 42 168 24" stroke="#3a5ad0" stroke-width="0.5" opacity="0.8"/><path d="M150 64Q139 50 139 36M133 73Q130 58 126 37M166 79Q167 61 175 48" stroke="#3a5ad0" stroke-width="0.5" opacity="1.0"/><path d="M173 49Q177 35 173 30M176 67Q186 61 189 48M158 41Q162 24 175 8M156 75Q164 65 169 59" stroke="#3040c0" stroke-width="1.0" opacity="0.6"/><path d="M142 48Q149 37 152 29M168 70Q161 60 158 44M149 24Q149 18 153 9M174 53Q171 38 166 18" stroke="#4050d8" stroke-width="0.5" opacity="0.6"/><path d="M153 60Q144 43 143 33" stroke="#5a50d0" stroke-width="1.0" opacity="1.0"/><path d="M168 79Q160 64 157 42M167 47Q164 43 168 31" stroke="#3a5ad0" stroke-width="1.0" opacity="0.6"/><path d="M126 53Q122 41 119 26M128 50Q130 38 125 16M134 67Q137 53 132 47" stroke="#5060e0" stroke-width="0.5" opacity="0.8"/><path d="M162 72Q171 64 170 57M140 50Q139 43 143 25" stroke="#2a3ab0" stroke-width="0.5" opacity="0.6"/><path d="M153 45Q153 37 159 21M176 29Q178 21 181 9M178 41Q190 26 194 16" stroke="#3548c8" stroke-width="1.0" opacity="0.8"/><path d="M164 41Q168 22 180 13M177 45Q180 25 189 14" stroke="#2a3ab0" stroke-width="0.5" opacity="0.8"/><path d="M139 57Q142 50 140 39M122 53Q117 32 122 15M120 63Q124 49 132 41" stroke="#2030a0" stroke-width="1.0" opacity="1.0"/><path d="M142 55Q141 40 142 28" stroke="#5a50d0" stroke-width="0.5" opacity="1.0"/><path d="M160 35Q170 17 175 9M176 52Q180 32 177 14M164 68Q163 55 161 43" stroke="#2a3ab0" stroke-width="0.5" opacity="1.0"/><path d="M128 50Q131 37 132 29" stroke="#5060e0" stroke-width="0.5" opacity="1.0"/><path d="M170 79Q168 70 171 55" stroke="#4050d8" stroke-width="0.5" opacity="1.0"/><path d="M123 43Q121 37 121 23M138 79Q135 71 138 56M160 37Q160 27 159 19" stroke="#3040c0" stroke-width="1.0" opacity="1.0"/><path d="M215 45Q218 35 232 35M187 58Q205 57 213 50" stroke="#40c0f0" stroke-width="0.5" opacity="1.0"/><path d="M217 84Q227 65 226 57M214 87Q223 78 233 64M207 58Q212 48 220 40M186 51Q207 43 220 40M228 66Q242 53 255 46M194 58Q216 51 233 48" stroke="#5060e0" stroke-width="1.0" opacity="0.6"/><path d="M220 59Q234 53 245 37M220 53Q228 50 240 43M237 61Q234 59 242 45" stroke="#3a5ad0" stroke-width="0.5" opacity="0.6"/><path d="M202 92Q227 82 242 79M237 64Q248 54 257 53M210 76Q217 61 222 37" stroke="#4a70e0" stroke-width="0.5" opacity="0.8"/><path d="M207 79Q230 71 242 56M213 74Q224 71 225 55M192 53Q193 52 206 45M237 70Q253 71 267 67M196 38Q217 33 226 28M192 76Q205 71 217 66" stroke="#40c0f0" stroke-width="0.5" opacity="0.8"/><path d="M185 64Q202 66 213 61M202 68Q221 54 239 50M214 53Q225 42 230 39M226 70Q230 67 241 68M205 93Q210 82 225 79" stroke="#4a70e0" stroke-width="1.0" opacity="0.8"/><path d="M224 75Q234 68 244 68M205 43Q216 40 222 35M190 66Q205 58 209 61M200 76Q213 75 234 70" stroke="#50a0f0" stroke-width="0.5" opacity="0.6"/><path d="M218 85Q225 78 236 79M216 91Q228 86 239 73M186 66Q194 66 207 59M206 40Q207 28 218 25M200 67Q201 62 212 58M209 91Q222 77 243 69M206 79Q218 60 226 51" stroke="#40c0f0" stroke-width="1.0" opacity="0.6"/><path d="M228 78Q235 70 246 60M224 51Q230 45 231 35M222 90Q238 87 255 74" stroke="#5a50d0" stroke-width="1.0" opacity="0.8"/><path d="M205 92Q218 87 230 86M189 37Q198 29 210 18M215 43Q219 41 236 34M213 82Q215 76 226 74M225 75Q244 76 251 71" stroke="#2a3ab0" stroke-width="1.0" opacity="1.0"/><path d="M202 69Q214 64 228 61M211 56Q224 50 227 53M190 63Q194 62 208 53M216 78Q227 65 225 64" stroke="#3548c8" stroke-width="1.0" opacity="0.8"/><path d="M201 85Q213 79 220 81M186 94Q197 88 217 90" stroke="#2030a0" stroke-width="0.5" opacity="0.6"/><path d="M206 72Q222 69 230 58M188 76Q204 60 219 49M185 69Q183 57 191 46M186 67Q203 60 229 62M196 47Q202 49 212 41M229 54Q237 48 239 41" stroke="#5060e0" stroke-width="1.0" opacity="0.8"/><path d="M211 71Q221 65 239 63M236 77Q247 70 252 66M243 89Q252 74 255 70M197 55Q207 38 225 28" stroke="#2030a0" stroke-width="1.0" opacity="0.6"/><path d="M211 94Q224 75 233 66M197 75Q204 65 214 45M221 83Q240 78 247 72" stroke="#3a5ad0" stroke-width="1.0" opacity="0.6"/><path d="M208 57Q208 41 217 27M217 83Q237 79 251 73M198 44Q206 36 210 19M188 54Q190 38 195 33M213 90Q215 79 223 60M211 85Q214 75 224 58" stroke="#3a5ad0" stroke-width="0.5" opacity="0.8"/><path d="M223 38Q224 35 236 29M239 62Q247 48 253 44" stroke="#3040c0" stroke-width="0.5" opacity="0.6"/><path d="M214 78Q221 81 233 76M216 60Q230 59 246 50M228 76Q238 65 248 47M242 65Q245 50 252 43M216 58Q222 50 228 34" stroke="#4050d8" stroke-width="1.0" opacity="0.8"/><path d="M220 69Q243 66 261 65M234 50Q242 48 251 46M231 93Q243 79 251 69M194 78Q203 74 216 65" stroke="#3548c8" stroke-width="1.0" opacity="1.0"/><path d="M244 90Q246 77 257 54M206 70Q224 66 235 58M206 42Q214 38 219 29M209 63Q226 41 236 32M236 57Q245 48 242 41M215 73Q240 66 257 69" stroke="#3548c8" stroke-width="0.5" opacity="0.8"/><path d="M242 76Q248 70 263 65" stroke="#3548c8" stroke-width="0.5" opacity="0.6"/><path d="M186 59Q193 40 200 29" stroke="#4050d8" stroke-width="0.5" opacity="0.6"/><path d="M205 69Q209 62 220 57M219 71Q218 49 228 37M196 92Q202 85 217 83M191 69Q199 55 200 43" stroke="#2a3ab0" stroke-width="1.0" opacity="0.8"/><path d="M234 84Q247 66 257 55M201 67Q207 61 216 43M215 83Q231 72 245 67M199 80Q217 71 240 62M202 80Q207 70 208 64" stroke="#50a0f0" stroke-width="1.0" opacity="0.6"/><path d="M202 66Q214 53 218 39M207 77Q227 69 245 71M212 60Q222 46 233 27M232 76Q245 64 262 52M197 84Q209 66 216 59" stroke="#4a70e0" stroke-width="1.0" opacity="0.6"/><path d="M197 91Q211 93 228 82M196 68Q199 59 203 55M211 70Q219 56 227 31" stroke="#5a50d0" stroke-width="0.5" opacity="0.8"/><path d="M193 66Q197 61 208 58M228 93Q233 84 244 84M226 93Q234 85 242 87M208 63Q211 54 220 50M185 87Q186 76 194 72M187 67Q196 48 201 26M190 44Q200 40 209 42" stroke="#3a5ad0" stroke-width="1.0" opacity="0.8"/><path d="M235 89Q248 82 256 84M186 58Q196 49 211 50M229 80Q248 76 260 76" stroke="#4050d8" stroke-width="1.0" opacity="0.6"/><path d="M206 35Q209 28 220 21M214 82Q225 74 248 74M205 64Q220 62 238 51M198 52Q218 40 233 39" stroke="#50a0f0" stroke-width="1.0" opacity="1.0"/><path d="M244 63Q259 66 268 59M233 77Q247 65 271 65M193 55Q196 57 209 48" stroke="#4050d8" stroke-width="1.0" opacity="1.0"/><path d="M187 60Q195 56 203 47" stroke="#5060e0" stroke-width="0.5" opacity="0.6"/><path d="M199 59Q214 58 237 49M230 79Q234 62 241 48" stroke="#40c0f0" stroke-width="1.0" opacity="1.0"/><path d="M198 75Q206 74 226 69M234 74Q255 73 267 62M210 67Q222 68 246 57" stroke="#5a50d0" stroke-width="0.5" opacity="0.6"/><path d="M220 85Q237 80 249 80M190 39Q193 24 200 20" stroke="#2030a0" stroke-width="1.0" opacity="0.8"/><path d="M230 87Q235 87 250 80M196 77Q197 71 205 55M188 82Q191 65 197 50" stroke="#3040c0" stroke-width="1.0" opacity="0.6"/><path d="M196 91Q212 84 220 86M231 64Q240 59 244 53M195 71Q215 75 226 68" stroke="#4a70e0" stroke-width="1.0" opacity="1.0"/><path d="M216 86Q230 79 240 83M235 85Q252 77 259 60M212 83Q223 84 235 74" stroke="#5a50d0" stroke-width="1.0" opacity="0.6"/><path d="M236 61Q237 53 247 42" stroke="#2a3ab0" stroke-width="1.0" opacity="0.6"/><path d="M204 70Q226 66 247 59M230 75Q248 60 259 54M230 87Q250 85 263 74M225 62Q234 57 246 56M232 87Q247 86 258 77M201 44Q215 45 220 38M217 90Q232 79 251 65M215 73Q223 51 241 38" stroke="#50a0f0" stroke-width="1.0" opacity="0.8"/><path d="M205 92Q230 85 245 79M227 85Q240 89 246 83" stroke="#50a0f0" stroke-width="0.5" opacity="0.8"/><path d="M200 51Q207 47 225 32" stroke="#4a70e0" stroke-width="0.5" opacity="1.0"/><path d="M188 74Q204 58 218 53M219 57Q223 51 234 52" stroke="#2a3ab0" stroke-width="0.5" opacity="0.8"/><path d="M225 73Q237 62 245 47" stroke="#4a70e0" stroke-width="0.5" opacity="0.6"/><path d="M230 56Q243 50 245 46M198 46Q204 35 219 19M219 83Q237 70 254 56M191 72Q198 68 200 58M241 78Q262 74 277 73" stroke="#40c0f0" stroke-width="1.0" opacity="0.8"/><path d="M227 62Q240 65 245 60M197 53Q211 46 218 30" stroke="#4050d8" stroke-width="0.5" opacity="1.0"/><path d="M244 66Q249 60 255 54" stroke="#50a0f0" stroke-width="0.5" opacity="1.0"/><path d="M200 73Q202 66 214 47" stroke="#2030a0" stroke-width="1.0" opacity="1.0"/><path d="M221 63Q234 60 235 45" stroke="#5060e0" stroke-width="1.0" opacity="1.0"/><path d="M226 84Q237 61 245 44M196 86Q206 78 227 72M197 56Q198 45 208 28M188 94Q196 90 205 90" stroke="#3040c0" stroke-width="1.0" opacity="1.0"/><path d="M195 60Q209 59 219 53M186 90Q193 85 192 70M197 65Q205 52 224 37" stroke="#3040c0" stroke-width="1.0" opacity="0.8"/><path d="M220 67Q239 53 250 48M193 66Q197 56 208 35" stroke="#5a50d0" stroke-width="0.5" opacity="1.0"/><path d="M197 79Q209 74 218 58M190 57Q209 58 219 52" stroke="#3a5ad0" stroke-width="1.0" opacity="1.0"/><path d="M189 82Q190 77 200 69M204 86Q221 73 240 71M193 84Q207 80 212 77" stroke="#3040c0" stroke-width="0.5" opacity="0.8"/><path d="M187 36Q202 30 214 33M240 86Q251 78 257 58" stroke="#2a3ab0" stroke-width="0.5" opacity="1.0"/><path d="M204 85Q210 78 212 70M211 48Q213 31 221 23M190 93Q211 74 222 64" stroke="#3548c8" stroke-width="0.5" opacity="1.0"/><path d="M220 82Q233 79 255 77M217 72Q224 64 223 52M189 76Q198 65 202 64" stroke="#5060e0" stroke-width="0.5" opacity="0.8"/><path d="M208 43Q208 28 219 20" stroke="#40c0f0" stroke-width="0.5" opacity="0.6"/><path d="M227 47Q231 36 237 30" stroke="#3a5ad0" stroke-width="0.5" opacity="1.0"/><path d="M195 52Q207 46 219 45M238 81Q249 64 252 53" stroke="#4050d8" stroke-width="0.5" opacity="0.8"/><path d="M234 78Q241 65 242 54M205 71Q211 47 227 32" stroke="#2030a0" stroke-width="0.5" opacity="0.8"/><path d="M202 215Q199 203 190 196M212 238Q203 250 201 253M225 209Q221 212 219 230M252 226Q250 242 243 240M222 222Q216 217 222 199M172 245Q165 237 169 234M210 175Q215 155 202 149M200 235Q212 242 210 246M276 212Q278 210 263 200M204 176Q199 186 202 190M174 145Q158 140 158 137M241 152Q249 156 260 158M257 161Q247 153 236 150M174 181Q186 169 189 170" stroke="#ff60a0" stroke-width="1.0" opacity="0.6"/><path d="M178 197Q187 185 179 174M219 171Q217 161 204 170M172 178Q167 175 162 176M254 190Q256 200 247 194M182 168Q182 152 187 140M226 181Q219 161 221 156M203 191Q201 194 185 190M190 213Q189 208 201 199M194 217Q196 206 214 203M195 201Q186 191 170 190" stroke="#80f060" stroke-width="1.0" opacity="0.8"/><path d="M244 171Q246 179 260 182M200 196Q204 194 206 189M203 199Q203 199 215 183M272 214Q268 209 250 202M275 193Q275 176 284 178M203 215Q214 212 216 216M184 200Q188 209 192 201M184 173Q171 167 174 164M251 187Q253 171 249 169M225 172Q237 167 247 177M184 179Q180 165 185 161M259 157Q262 162 268 169M229 225Q218 237 203 232M249 164Q262 170 262 176M257 148Q256 162 257 158M207 196Q225 198 234 202M265 168Q267 158 271 153M180 242Q182 248 188 247" stroke="#f0d040" stroke-width="1.0" opacity="0.6"/><path d="M226 165Q230 160 214 148M226 210Q230 209 232 194M227 218Q228 223 237 231M231 178Q242 174 233 187M172 193Q173 185 159 191M262 203Q252 214 256 218M180 209Q193 225 195 222M223 202Q224 190 224 180M254 230Q252 229 259 214M270 186Q272 174 262 176M237 189Q232 185 221 187M190 213Q194 212 213 211M215 147Q210 143 208 151M267 214Q260 214 247 233M240 152Q247 149 245 140M189 229Q175 216 174 218M195 211Q192 216 206 218" stroke="#f0f080" stroke-width="1.0" opacity="0.8"/><path d="M277 212Q270 199 261 191M244 145Q244 140 230 146M242 151Q244 154 238 163M204 206Q201 207 203 195M248 208Q236 188 239 187M278 160Q278 160 273 169M256 167Q274 165 276 174M193 149Q181 142 183 137M223 196Q213 189 213 197M194 172Q186 166 179 161" stroke="#40e0c0" stroke-width="1.0" opacity="1.0"/><path d="M173 168Q191 167 197 158M229 215Q234 221 227 238M261 175Q265 170 269 184M220 144Q232 154 224 154M238 167Q242 165 256 153M222 205Q232 194 243 193" stroke="#ff9040" stroke-width="1.5" opacity="0.8"/><path d="M211 167Q216 175 218 185" stroke="#e0f040" stroke-width="0.5" opacity="0.8"/><path d="M182 213Q192 210 186 202M236 167Q243 166 253 171M258 153Q249 150 238 145M259 198Q265 193 268 187M223 206Q214 217 219 226M253 196Q263 183 253 179M270 175Q255 178 255 176M228 235Q228 221 239 216M223 159Q226 149 210 156M194 232Q184 216 187 209M255 149Q245 169 252 173M178 145Q183 147 203 142M209 152Q224 151 222 165M189 229Q182 223 186 236M265 179Q259 173 262 165M173 204Q156 199 145 205M185 217Q186 231 169 230M171 196Q188 192 187 183M254 209Q268 218 265 214M224 189Q220 204 216 200M174 199Q174 203 162 214M196 185Q185 195 187 202M177 183Q175 187 167 182" stroke="#e0f040" stroke-width="1.0" opacity="0.8"/><path d="M225 157Q221 160 213 159M190 224Q176 223 175 221M194 174Q192 177 179 186M187 149Q201 153 203 166M198 165Q194 181 184 184" stroke="#ff9040" stroke-width="1.5" opacity="0.6"/><path d="M200 149Q199 150 206 165M189 227Q191 218 209 218M266 172Q260 170 255 151M228 179Q218 186 228 190M205 145Q209 158 193 161M193 217Q179 206 185 213M209 217Q210 210 222 219M190 202Q204 205 200 203M200 167Q204 183 193 182M188 243Q201 256 196 252" stroke="#f0d040" stroke-width="1.0" opacity="0.8"/><path d="M237 197Q235 205 244 203M236 145Q245 160 246 157M236 209Q234 221 248 228M240 144Q248 135 239 134M239 211Q238 220 241 223M203 203Q185 205 179 211M231 217Q242 226 244 214M174 202Q176 189 180 188M186 153Q171 153 176 157M205 195Q220 199 217 188M261 216Q252 212 251 193M225 144Q219 145 215 162M170 247Q162 240 164 231M179 172Q188 177 183 192M175 179Q173 173 170 172M270 202Q266 194 260 188M180 176Q181 177 177 194M271 165Q282 161 286 171" stroke="#ff60a0" stroke-width="1.0" opacity="0.8"/><path d="M239 146Q225 142 232 157M219 190Q223 193 223 201M173 236Q164 238 165 222M276 165Q282 151 288 151M233 229Q220 210 218 208M201 233Q203 218 191 211M193 148Q181 150 184 161M180 222Q196 229 203 226M194 201Q194 206 205 223M200 220Q215 219 212 222M225 147Q236 146 230 138M256 153Q260 165 244 159M253 178Q246 170 235 178M174 213Q194 214 201 211M201 183Q200 175 186 178M206 212Q212 215 221 217" stroke="#c0f040" stroke-width="1.0" opacity="0.6"/><path d="M205 209Q209 207 222 197M269 175Q262 179 269 200M212 191Q216 207 220 215M193 240Q176 249 177 255M193 232Q189 219 197 217M220 162Q218 180 205 183M209 169Q220 179 212 189M173 249Q167 253 174 257M203 246Q192 252 199 255M225 245Q236 245 246 237M208 201Q204 203 215 192M213 236Q222 242 233 244M263 236Q242 228 240 240M208 184Q212 185 208 175" stroke="#40c0ff" stroke-width="1.0" opacity="0.8"/><path d="M259 211Q270 215 266 202M232 185Q231 195 233 195M219 177Q223 188 223 196M187 219Q190 202 181 200M198 194Q190 198 175 186M192 151Q198 136 200 136M252 191Q239 177 244 181M260 236Q246 227 242 215M246 171Q241 186 233 194M181 214Q171 214 174 198M187 230Q184 233 173 226M196 244Q180 244 178 230M225 205Q218 197 207 187M183 187Q174 171 160 171M251 199Q244 211 257 204M273 183Q261 188 257 202M233 141Q244 150 239 155" stroke="#40e0c0" stroke-width="1.0" opacity="0.8"/><path d="M255 204Q246 207 243 219" stroke="#ff60a0" stroke-width="0.5" opacity="0.6"/><path d="M229 175Q232 166 227 165M236 218Q244 225 260 214M171 205Q184 197 183 181M253 190Q246 188 245 199M255 205Q251 184 266 180M171 146Q162 143 156 155M170 218Q154 229 157 243M252 170Q231 180 225 177M177 210Q169 218 161 212M222 178Q213 174 207 163M199 195Q200 192 194 201M199 152Q204 154 213 166M209 239Q201 246 200 259M264 140Q263 145 278 157M179 173Q190 173 196 173M243 140Q244 136 243 120" stroke="#50c0f0" stroke-width="1.0" opacity="0.6"/><path d="M230 206Q241 212 244 208M226 210Q238 201 241 196M242 211Q227 224 226 227M252 192Q249 193 261 182M218 223Q207 224 209 219M201 201Q198 199 208 184M181 196Q192 191 186 187M214 223Q235 218 237 230" stroke="#50c0f0" stroke-width="1.0" opacity="1.0"/><path d="M183 219Q174 214 169 219M269 167Q276 161 267 175M183 230Q180 211 174 211M180 245Q192 240 201 249M200 187Q195 176 190 178M190 230Q175 227 166 224M233 200Q216 199 207 209M217 238Q214 230 191 230M229 159Q229 159 228 171M251 141Q266 146 269 157M226 243Q212 251 206 242M271 187Q264 186 274 165M181 189Q173 190 181 173M224 161Q223 152 217 134M191 233Q197 235 198 228" stroke="#50c0f0" stroke-width="1.0" opacity="0.8"/><path d="M203 189Q198 183 182 179M243 152Q254 146 260 156M254 193Q249 203 259 215M196 245Q186 260 184 262M248 194Q250 200 266 198M187 148Q176 141 181 132M175 202Q170 194 168 176M263 222Q266 210 252 198M199 144Q213 146 218 156M178 161Q176 167 157 154M179 214Q193 205 200 203M171 234Q170 240 165 240M206 229Q207 215 219 220M272 160Q253 153 254 161M254 225Q245 229 252 214" stroke="#80f060" stroke-width="1.0" opacity="0.6"/><path d="M205 237Q224 242 230 233M240 234Q231 231 224 220M229 143Q218 133 217 131M191 217Q194 209 200 209M208 240Q219 248 219 236" stroke="#80f060" stroke-width="1.5" opacity="0.8"/><path d="M256 177Q256 160 254 153M226 217Q231 225 252 222M185 242Q199 236 212 241M234 213Q221 227 217 234M171 202Q180 187 188 189" stroke="#40e0c0" stroke-width="1.5" opacity="0.6"/><path d="M228 140Q216 137 220 150M218 170Q217 182 225 194M240 215Q236 219 224 226M214 164Q217 184 214 184M260 154Q256 172 251 179M177 198Q192 191 190 196M270 190Q262 180 257 190M247 169Q251 156 267 160M201 163Q198 157 191 154M190 235Q193 222 182 220M277 147Q273 139 284 142M197 249Q204 253 222 253" stroke="#40c0ff" stroke-width="1.0" opacity="0.6"/><path d="M267 173Q267 168 273 162" stroke="#f0d040" stroke-width="1.5" opacity="0.6"/><path d="M186 203Q181 205 189 213M201 158Q210 149 208 147M275 168Q267 173 271 187M171 221Q162 232 173 245M189 144Q199 143 200 141M263 208Q255 221 256 216M243 185Q238 197 237 197" stroke="#c0f040" stroke-width="1.0" opacity="1.0"/><path d="M251 211Q233 202 227 202M202 141Q195 138 207 128M181 146Q191 154 185 160M196 170Q211 178 206 176M225 240Q233 228 246 230M267 155Q271 154 280 166M255 212Q268 214 279 198M189 141Q192 133 179 116M249 214Q237 209 239 217M245 212Q248 222 244 221" stroke="#ff5080" stroke-width="1.0" opacity="0.6"/><path d="M213 214Q214 236 215 241M206 193Q192 199 198 189M238 196Q230 202 220 211M192 221Q191 227 180 225M174 201Q188 197 195 206M242 203Q254 204 247 223M193 187Q198 186 186 174M200 246Q190 248 192 247M194 237Q210 233 213 236M244 170Q245 167 231 155M273 186Q263 190 260 174M227 180Q228 183 216 167M179 214Q170 216 159 226" stroke="#ff9040" stroke-width="1.0" opacity="0.6"/><path d="M194 174Q200 181 204 190M264 147Q267 151 261 135" stroke="#80f060" stroke-width="0.5" opacity="0.6"/><path d="M205 173Q209 183 209 194M184 178Q181 182 184 200M181 202Q170 206 173 219M209 151Q221 156 234 146M189 232Q196 244 193 257M229 237Q237 245 241 240M278 218Q265 214 268 210M240 181Q235 179 232 170" stroke="#f0d040" stroke-width="1.0" opacity="1.0"/><path d="M251 218Q262 206 254 205M183 248Q183 242 187 232M180 227Q191 212 200 214M187 197Q190 186 186 172M175 197Q171 187 171 174M194 241Q200 230 218 230M210 184Q212 174 228 181M181 218Q169 223 169 224" stroke="#80f060" stroke-width="1.5" opacity="0.6"/><path d="M202 187Q211 187 205 172M246 234Q245 234 236 223M184 213Q190 204 194 193M207 249Q205 248 184 236M231 194Q215 193 213 194M189 234Q193 228 179 239" stroke="#80f060" stroke-width="1.0" opacity="1.0"/><path d="M261 156Q252 149 255 143M209 199Q217 200 228 198M233 231Q234 225 254 229M174 226Q180 231 195 227M228 197Q222 197 229 185M236 217Q238 228 246 231M193 177Q199 166 200 151M248 224Q242 215 234 206M263 176Q270 184 263 202M215 142Q219 142 212 130M241 186Q247 203 235 203M222 185Q217 174 227 177" stroke="#e0f040" stroke-width="1.0" opacity="0.6"/><path d="M266 174Q266 159 277 159M170 238Q176 240 192 236M227 203Q228 205 232 212M234 174Q236 173 253 183M255 146Q270 131 271 135M207 150Q214 141 218 142M190 169Q198 187 198 186" stroke="#40e0c0" stroke-width="1.5" opacity="0.8"/><path d="M246 235Q246 220 236 218M220 222Q227 202 224 200M203 199Q216 215 215 215M191 209Q200 209 193 189M196 186Q194 187 192 204M239 159Q244 148 248 147M196 146Q189 155 176 153M233 168Q252 174 258 163M241 226Q240 226 251 232M235 155Q226 152 230 143" stroke="#f0f080" stroke-width="1.0" opacity="0.6"/><path d="M217 156Q200 160 195 169M267 165Q268 182 255 187M278 140Q269 146 267 150M272 206Q259 195 253 191M224 153Q226 157 242 145M218 197Q210 196 220 213" stroke="#ff5080" stroke-width="1.5" opacity="0.8"/><path d="M245 167Q250 172 261 166M278 193Q269 199 255 192M237 202Q250 188 244 192M190 171Q197 170 192 158M257 152Q249 158 245 174M264 162Q265 154 257 164M271 171Q290 164 289 153" stroke="#ff60a0" stroke-width="1.5" opacity="0.8"/><path d="M267 156Q275 161 289 170M185 148Q196 144 191 137M202 246Q208 260 207 257" stroke="#ff60a0" stroke-width="1.5" opacity="1.0"/><path d="M178 178Q171 177 177 160M213 205Q209 200 198 206M270 150Q264 144 252 139M246 187Q235 179 238 182M204 167Q199 169 182 180M277 163Q266 172 257 180M205 221Q204 213 185 223M189 143Q205 142 203 152M193 212Q191 216 192 225" stroke="#f0f080" stroke-width="1.0" opacity="1.0"/><path d="M246 212Q251 217 251 227M202 246Q198 240 191 232M277 222Q283 212 273 206M224 141Q230 161 220 162M225 185Q221 196 225 203M222 157Q221 157 239 158M197 216Q197 209 202 208M179 159Q179 161 176 150M175 226Q177 236 183 249M256 167Q259 166 265 169M227 189Q231 187 251 191M224 168Q230 164 247 170M176 202Q187 193 180 179M221 187Q224 193 241 201M206 195Q197 196 196 188M175 196Q175 192 164 174" stroke="#ff9040" stroke-width="1.0" opacity="0.8"/><path d="M201 206Q220 210 225 200M208 152Q200 159 195 153M241 184Q225 189 227 201M183 191Q188 196 196 192M235 144Q248 139 259 147M264 175Q268 172 274 174M205 232Q207 225 227 222M170 198Q171 197 183 199" stroke="#ff5080" stroke-width="1.5" opacity="0.6"/><path d="M177 173Q170 158 169 161M278 184Q275 177 285 179M188 193Q195 201 198 202M204 203Q202 203 202 220M224 208Q210 205 201 195M213 190Q210 186 200 199M217 171Q222 170 233 177M222 203Q207 214 206 225" stroke="#e0f040" stroke-width="1.0" opacity="1.0"/><path d="M228 181Q233 180 239 166M264 164Q272 170 271 168M198 177Q194 190 203 185" stroke="#40c0ff" stroke-width="1.5" opacity="1.0"/><path d="M171 166Q166 186 166 190M239 167Q252 157 267 167M190 194Q181 181 168 180M240 181Q251 196 255 201" stroke="#ff5080" stroke-width="1.5" opacity="1.0"/><path d="M267 172Q269 177 266 181" stroke="#40e0c0" stroke-width="0.5" opacity="0.8"/><path d="M185 149Q180 151 170 167M264 203Q252 190 253 184M224 229Q225 230 212 227M266 221Q257 208 256 205M251 143Q260 138 271 139M238 238Q239 235 228 248M227 220Q221 209 203 209M213 146Q206 141 214 120M205 209Q193 215 199 215M180 142Q189 147 196 142M212 181Q225 183 232 198M261 224Q262 227 242 218M209 245Q196 245 182 238M228 149Q215 155 216 149M212 193Q207 201 201 198M190 155Q185 156 192 143M171 194Q163 179 158 172M194 242Q193 251 183 263M241 235Q226 237 229 237" stroke="#c0f040" stroke-width="1.0" opacity="0.8"/><path d="M214 194Q217 202 229 191M217 143Q228 134 224 129M207 176Q211 192 212 200" stroke="#f0d040" stroke-width="0.5" opacity="0.8"/><path d="M277 153Q279 170 273 178M261 222Q241 215 239 209M191 144Q183 151 174 143M276 198Q276 180 269 173M212 229Q212 220 201 221M200 169Q184 167 180 182M202 233Q207 232 198 211M268 165Q258 168 264 188M217 195Q226 208 225 205M187 201Q184 185 200 185M217 194Q210 182 206 170M264 196Q260 197 258 179M259 159Q248 166 240 174M235 224Q236 206 222 206" stroke="#ff5080" stroke-width="1.0" opacity="0.8"/><path d="M182 236Q191 222 195 228" stroke="#40e0c0" stroke-width="1.5" opacity="1.0"/><path d="M261 242Q259 239 247 231M260 180Q252 180 250 164M222 180Q209 168 210 160M205 150Q216 136 219 137M227 163Q223 167 231 153M228 144Q242 152 241 168M224 178Q226 180 235 183M175 148Q172 144 178 137" stroke="#ff5080" stroke-width="1.0" opacity="1.0"/><path d="M278 140Q269 153 274 152M239 233Q249 237 257 223M270 210Q270 206 253 195M186 249Q188 257 170 249M231 179Q213 195 215 193M175 224Q169 234 159 239M259 147Q256 145 260 155M192 238Q209 230 215 226" stroke="#ff9040" stroke-width="1.0" opacity="1.0"/><path d="M278 170Q282 167 278 158M230 158Q230 156 227 147M174 208Q170 214 169 233M171 193Q177 194 181 200M203 198Q211 204 212 197" stroke="#f0f080" stroke-width="1.5" opacity="0.8"/><path d="M249 201Q263 218 263 221M201 142Q193 123 196 118" stroke="#c0f040" stroke-width="0.5" opacity="0.6"/><path d="M237 170Q251 162 255 168M246 141Q245 159 252 164M269 166Q286 181 283 187M240 178Q243 177 253 166M224 144Q235 147 229 137M226 146Q220 160 212 155" stroke="#f0d040" stroke-width="1.5" opacity="0.8"/><path d="M209 233Q219 228 218 237M204 247Q190 241 196 226M214 168Q211 173 203 163M258 145Q266 163 267 168M245 206Q234 197 231 207M192 205Q203 199 202 188M232 179Q239 189 238 190M187 200Q191 195 193 177M204 234Q218 225 226 224M213 171Q214 166 233 169" stroke="#ff60a0" stroke-width="1.0" opacity="1.0"/><path d="M196 177Q186 181 190 186M213 143Q228 130 225 131" stroke="#f0f080" stroke-width="0.5" opacity="0.6"/><path d="M249 187Q266 183 274 184M202 179Q193 160 193 154M262 190Q240 187 238 196M196 237Q207 244 203 249M235 240Q234 234 214 227M213 219Q201 236 202 243M256 160Q268 156 267 154" stroke="#e0f040" stroke-width="1.5" opacity="0.8"/><path d="M245 156Q249 150 236 157M207 152Q209 152 216 169M223 176Q226 176 217 186M261 208Q264 210 255 215M214 146Q211 141 204 152M279 172Q267 153 263 152M274 164Q272 165 256 160M262 184Q265 193 249 206M203 204Q215 217 219 212" stroke="#40e0c0" stroke-width="1.0" opacity="0.6"/><path d="M174 192Q181 193 178 201M213 179Q219 178 206 170M183 220Q176 213 187 193" stroke="#80f060" stroke-width="1.5" opacity="1.0"/><path d="M260 244Q248 243 241 238" stroke="#ff9040" stroke-width="0.5" opacity="1.0"/><path d="M189 185Q193 195 178 188M202 226Q206 225 219 223M210 218Q202 213 204 226M215 166Q218 180 215 192M245 189Q247 186 240 173M259 208Q253 190 240 189" stroke="#ff60a0" stroke-width="0.5" opacity="0.8"/><path d="M251 198Q242 188 236 190M204 191Q195 196 194 190M258 154Q256 156 269 152M197 162Q189 159 190 156M220 236Q236 240 233 227M213 222Q217 223 219 233M206 186Q197 196 199 203" stroke="#40c0ff" stroke-width="1.0" opacity="1.0"/><path d="M212 208Q218 195 236 196M248 216Q243 209 230 213" stroke="#ff9040" stroke-width="0.5" opacity="0.6"/><path d="M203 226Q200 238 203 251M263 153Q266 166 259 168M228 149Q241 154 252 153M207 187Q207 186 193 191M195 178Q180 170 184 181" stroke="#f0d040" stroke-width="1.5" opacity="1.0"/><path d="M171 239Q171 241 172 230M191 192Q191 189 186 205M202 170Q192 184 192 187" stroke="#ff9040" stroke-width="0.5" opacity="0.8"/><path d="M184 183Q168 172 168 175" stroke="#ff5080" stroke-width="0.5" opacity="0.8"/><path d="M269 141Q264 139 266 153" stroke="#c0f040" stroke-width="0.5" opacity="0.8"/><path d="M251 155Q247 150 236 135" stroke="#f0f080" stroke-width="1.5" opacity="0.6"/><path d="M193 213Q201 225 193 239M221 234Q225 243 224 242M183 248Q182 255 176 262" stroke="#40c0ff" stroke-width="1.5" opacity="0.6"/><path d="M254 184Q237 188 234 195M264 191Q273 197 268 204M186 181Q205 169 210 167M177 232Q170 232 179 220" stroke="#c0f040" stroke-width="1.5" opacity="0.8"/><path d="M258 144Q254 128 241 122" stroke="#f0f080" stroke-width="0.5" opacity="0.8"/><path d="M273 155Q270 165 265 175" stroke="#80f060" stroke-width="0.5" opacity="1.0"/><path d="M203 178Q213 179 216 180" stroke="#40e0c0" stroke-width="0.5" opacity="0.6"/><path d="M246 235Q247 231 243 223M229 202Q209 190 208 193M279 200Q270 191 259 191M180 187Q179 183 181 177M193 199Q186 207 175 207M225 233Q237 220 240 220" stroke="#40c0ff" stroke-width="1.5" opacity="0.8"/><path d="M254 210Q255 194 257 190" stroke="#f0d040" stroke-width="0.5" opacity="1.0"/><path d="M181 169Q174 175 178 176" stroke="#c0f040" stroke-width="1.5" opacity="0.6"/><path d="M278 232Q266 224 259 223M255 202Q254 205 234 220M181 141Q193 135 199 147M210 160Q201 157 197 144" stroke="#50c0f0" stroke-width="1.5" opacity="0.6"/><path d="M224 221Q224 237 234 246M244 168Q253 172 260 157" stroke="#ff9040" stroke-width="1.5" opacity="1.0"/><path d="M239 159Q244 162 243 173" stroke="#50c0f0" stroke-width="1.5" opacity="0.8"/><path d="M218 244Q217 247 211 240M264 151Q250 153 245 163M270 165Q267 178 282 179M184 227Q180 223 190 221" stroke="#e0f040" stroke-width="1.5" opacity="0.6"/><path d="M237 226Q242 235 229 241M226 167Q218 169 214 161" stroke="#40c0ff" stroke-width="0.5" opacity="0.8"/><path d="M244 152Q245 160 264 153M200 203Q198 202 211 206" stroke="#f0d040" stroke-width="0.5" opacity="0.6"/><path d="M214 170Q207 183 199 182" stroke="#ff5080" stroke-width="0.5" opacity="0.6"/><path d="M187 171Q183 167 181 177M258 205Q248 195 241 201M171 165Q169 173 185 176M195 222Q196 232 187 226M207 209Q209 211 196 192" stroke="#ff60a0" stroke-width="1.5" opacity="0.6"/><path d="M228 170Q238 162 237 160" stroke="#80f060" stroke-width="0.5" opacity="0.8"/><path d="M248 152Q256 158 255 157M256 208Q257 226 244 229" stroke="#f0f080" stroke-width="1.5" opacity="1.0"/><path d="M214 192Q210 190 224 208" stroke="#c0f040" stroke-width="0.5" opacity="1.0"/><path d="M182 173Q190 178 189 199" stroke="#40c0ff" stroke-width="0.5" opacity="1.0"/><path d="M87 196Q87 201 79 193M62 144Q57 136 45 133" stroke="#ff4060" stroke-width="1.0" opacity="1.0"/><path d="M91 108Q91 106 81 103" stroke="#d0e040" stroke-width="1.5" opacity="0.6"/><path d="M76 196Q71 197 62 197M65 107Q50 107 44 95M89 86Q93 80 81 73M79 140Q82 149 69 141M89 135Q86 153 73 155M93 198Q87 200 80 198M52 160Q45 162 41 174M81 129Q65 120 60 117M81 172Q70 163 72 164M84 122Q72 123 74 115M78 134Q72 146 57 147M61 126Q57 121 46 130M67 158Q59 158 49 154" stroke="#f0a030" stroke-width="1.0" opacity="0.8"/><path d="M71 100Q63 91 47 88M53 114Q54 112 40 111M85 127Q79 124 64 119M68 159Q63 159 50 148" stroke="#60d060" stroke-width="1.5" opacity="1.0"/><path d="M91 112Q78 105 78 102M61 158Q53 160 48 153M93 166Q91 161 82 167M78 156Q77 156 68 156M69 182Q54 174 49 164M70 116Q60 110 59 106M84 100Q83 92 71 96M79 137Q66 151 59 154M85 148Q76 148 66 144M81 148Q71 151 72 139M52 148Q46 147 39 134" stroke="#ff4060" stroke-width="1.0" opacity="0.6"/><path d="M52 181Q42 183 45 171M95 169Q96 164 87 172M50 141Q43 136 42 139M92 88Q94 80 84 89" stroke="#e8d040" stroke-width="0.5" opacity="0.8"/><path d="M65 186Q63 196 55 194M63 118Q59 115 46 109M80 86Q63 71 62 66M82 173Q66 177 60 177M90 160Q82 173 67 175M60 148Q58 144 44 149M90 160Q84 173 77 173" stroke="#40c0c0" stroke-width="1.0" opacity="0.6"/><path d="M79 104Q70 98 61 102M70 133Q72 138 61 147" stroke="#60d060" stroke-width="0.5" opacity="0.6"/><path d="M84 118Q76 120 75 112M74 145Q71 150 63 157M61 164Q56 162 51 158M73 193Q60 184 52 189M78 172Q71 183 66 182M59 178Q53 169 53 169M83 202Q66 202 65 199M74 168Q62 168 56 170M63 185Q62 196 54 201M70 107Q61 100 51 105" stroke="#e8d040" stroke-width="1.0" opacity="0.8"/><path d="M91 146Q81 161 77 168M61 155Q61 162 49 161M80 189Q68 187 66 201M73 202Q65 200 62 191M77 188Q73 187 65 175M77 86Q71 90 71 79" stroke="#d0e040" stroke-width="0.5" opacity="0.8"/><path d="M80 197Q74 196 66 191M55 155Q52 147 43 149M49 166Q38 161 39 162M81 85Q66 90 57 87M75 95Q75 97 64 108M57 93Q46 101 42 112M84 117Q83 117 78 108M76 155Q65 159 52 167M53 112Q41 112 37 125" stroke="#d0e040" stroke-width="1.0" opacity="0.6"/><path d="M63 116Q63 108 56 110M97 194Q83 200 78 210M62 130Q63 134 54 135M90 168Q85 160 70 162" stroke="#ff60a0" stroke-width="1.0" opacity="1.0"/><path d="M83 198Q82 205 66 196M78 165Q74 169 67 160M77 128Q67 131 57 142M91 127Q85 137 74 148M61 138Q60 126 43 127" stroke="#60d060" stroke-width="0.5" opacity="0.8"/><path d="M80 86Q72 72 66 63M87 148Q85 152 71 170M88 156Q91 156 79 162M81 160Q73 160 53 161M91 151Q91 145 80 132M66 86Q61 96 54 95M78 133Q74 128 57 135M60 103Q63 106 54 112M93 123Q78 130 75 131" stroke="#60d060" stroke-width="1.0" opacity="0.6"/><path d="M70 192Q65 186 52 173M83 119Q84 109 71 113M63 196Q51 195 50 185M78 170Q72 157 66 158M62 164Q64 169 53 162" stroke="#e8d040" stroke-width="1.0" opacity="1.0"/><path d="M62 130Q57 131 39 124M60 125Q59 121 50 131M66 138Q58 135 54 139M84 133Q72 144 67 150M48 166Q50 155 40 159M61 188Q47 173 48 169" stroke="#60d060" stroke-width="1.0" opacity="0.8"/><path d="M77 198Q75 190 59 185M71 170Q66 168 56 162M52 117Q43 127 40 124M97 137Q93 141 89 143M68 118Q58 113 52 122" stroke="#f0a030" stroke-width="1.0" opacity="0.6"/><path d="M75 92Q74 98 62 90" stroke="#f0a030" stroke-width="1.5" opacity="0.6"/><path d="M90 118Q89 109 76 110M62 119Q56 123 56 128" stroke="#f07030" stroke-width="0.5" opacity="0.6"/><path d="M76 145Q62 151 57 162M75 168Q76 170 68 176M60 104Q50 101 48 108" stroke="#40c0c0" stroke-width="0.5" opacity="0.6"/><path d="M78 199Q66 201 64 215M63 117Q55 116 55 109M94 118Q91 113 74 104M77 174Q62 172 63 184M75 114Q68 114 65 118M79 93Q75 86 68 89" stroke="#e8d040" stroke-width="1.0" opacity="0.6"/><path d="M84 97Q67 82 63 79M95 176Q88 178 78 185M56 167Q46 166 44 164M73 108Q66 113 66 117M89 162Q80 164 79 157M89 117Q87 112 78 103M74 115Q68 111 59 120M83 95Q74 84 75 84" stroke="#f07030" stroke-width="1.0" opacity="0.8"/><path d="M62 144Q60 139 49 137M79 172Q70 174 74 180" stroke="#60d060" stroke-width="0.5" opacity="1.0"/><path d="M97 182Q87 184 88 175M88 178Q75 184 74 176" stroke="#f0a030" stroke-width="0.5" opacity="0.8"/><path d="M95 106Q86 114 85 117M75 88Q58 89 50 88M73 159Q62 161 53 155M95 167Q89 156 75 157M96 123Q86 118 84 111M61 129Q50 115 49 107M70 175Q66 165 56 169M81 141Q77 151 68 153M69 112Q67 112 55 126M65 167Q68 170 60 159M85 174Q78 172 62 176M89 176Q87 178 80 169M58 128Q52 133 50 133M81 105Q67 94 59 97" stroke="#d0e040" stroke-width="1.0" opacity="0.8"/><path d="M73 118Q66 119 60 130M80 118Q67 126 63 127M65 192Q68 201 57 200M48 154Q45 153 38 142M74 177Q64 180 62 195M78 202Q77 201 62 192M80 171Q75 159 66 162M75 166Q72 163 70 174" stroke="#40c0c0" stroke-width="1.0" opacity="0.8"/><path d="M86 116Q76 115 73 116M83 191Q88 192 76 198M84 163Q87 153 78 155M64 172Q50 174 48 168M67 105Q63 100 58 104M88 164Q74 155 70 147M67 114Q69 111 59 110M93 122Q97 121 88 131M96 100Q89 109 78 110" stroke="#ff4060" stroke-width="1.0" opacity="0.8"/><path d="M83 140Q82 130 73 125M64 181Q54 184 55 188M87 112Q77 112 72 112M54 145Q50 143 41 156M96 85Q87 81 78 90M87 204Q74 199 65 199M87 155Q83 151 66 142M83 121Q76 127 69 122" stroke="#f07030" stroke-width="1.0" opacity="0.6"/><path d="M91 120Q91 131 77 144M66 126Q50 117 46 115" stroke="#d0e040" stroke-width="0.5" opacity="0.6"/><path d="M72 91Q73 87 58 92M90 89Q87 88 75 72M71 159Q63 168 63 167M90 177Q73 180 71 171M74 128Q65 135 64 135M88 176Q81 184 68 184M57 127Q53 138 46 138M58 158Q44 158 44 173" stroke="#ff60a0" stroke-width="1.0" opacity="0.6"/><path d="M96 167Q81 158 74 156" stroke="#f0a030" stroke-width="0.5" opacity="0.6"/><path d="M78 183Q78 173 63 177" stroke="#f07030" stroke-width="1.5" opacity="0.8"/><path d="M74 135Q56 125 47 130M76 89Q70 85 56 93M96 113Q85 103 79 109M49 123Q49 117 41 125M59 93Q46 87 49 93M64 110Q63 102 49 97M84 146Q83 140 73 143M86 87Q76 80 68 77" stroke="#f07030" stroke-width="1.0" opacity="1.0"/><path d="M74 159Q75 157 66 148M86 177Q79 176 80 183M79 172Q73 173 75 165M78 88Q58 91 54 87M70 110Q61 110 45 119" stroke="#ff60a0" stroke-width="1.0" opacity="0.8"/><path d="M73 184Q62 181 61 181" stroke="#40c0c0" stroke-width="0.5" opacity="1.0"/><path d="M63 193Q61 191 52 189M71 126Q56 139 49 138M87 178Q78 184 71 192M84 183Q81 181 76 180" stroke="#f07030" stroke-width="0.5" opacity="0.8"/><path d="M91 166Q79 163 73 154M69 152Q72 152 63 163M94 172Q90 176 82 172" stroke="#ff60a0" stroke-width="0.5" opacity="0.8"/><path d="M71 128Q56 130 50 134M73 110Q69 118 56 130" stroke="#40c0c0" stroke-width="0.5" opacity="0.8"/><path d="M68 117Q62 111 58 114M60 188Q53 189 54 195M65 178Q62 189 57 187M85 90Q69 84 64 86M72 129Q64 133 47 136M85 172Q71 179 68 175M90 128Q73 137 68 140" stroke="#40c0c0" stroke-width="1.0" opacity="1.0"/><path d="M92 135Q86 133 76 131M61 142Q61 149 51 147" stroke="#f0a030" stroke-width="1.5" opacity="0.8"/><path d="M85 127Q79 125 75 123" stroke="#e8d040" stroke-width="1.5" opacity="1.0"/><path d="M92 98Q84 98 80 93" stroke="#f0a030" stroke-width="1.0" opacity="1.0"/><path d="M96 101Q93 100 79 85M64 172Q58 171 50 160" stroke="#f07030" stroke-width="1.5" opacity="0.6"/><path d="M87 111Q84 121 82 119M65 95Q54 83 56 85" stroke="#60d060" stroke-width="1.0" opacity="1.0"/><path d="M58 126Q50 115 51 118M69 173Q59 172 59 177" stroke="#e8d040" stroke-width="0.5" opacity="0.6"/><path d="M88 189Q79 193 82 194M60 128Q45 113 42 111" stroke="#e8d040" stroke-width="1.5" opacity="0.8"/><path d="M73 156Q60 155 57 141" stroke="#ff4060" stroke-width="0.5" opacity="1.0"/><path d="M85 165Q77 167 70 163" stroke="#ff4060" stroke-width="0.5" opacity="0.8"/><path d="M66 106Q55 107 47 114M76 123Q66 125 66 123" stroke="#ff60a0" stroke-width="1.5" opacity="0.8"/><path d="M83 107Q68 105 64 90" stroke="#d0e040" stroke-width="0.5" opacity="1.0"/><path d="M73 96Q66 102 57 111" stroke="#d0e040" stroke-width="1.0" opacity="1.0"/><path d="M57 168Q50 173 49 175" stroke="#ff60a0" stroke-width="1.5" opacity="0.6"/><path d="M75 141Q70 146 60 146" stroke="#ff4060" stroke-width="1.5" opacity="1.0"/><path d="M66 168Q67 173 57 167M76 182Q72 183 61 173" stroke="#d0e040" stroke-width="1.5" opacity="1.0"/><path d="M57 171Q53 168 45 151" stroke="#40c0c0" stroke-width="1.5" opacity="0.8"/><path d="M72 98Q63 88 51 85" stroke="#ff60a0" stroke-width="1.5" opacity="1.0"/><path d="M65 135Q57 145 50 142" stroke="#f0a030" stroke-width="0.5" opacity="1.0"/><path d="M79 183Q68 174 67 172M73 87Q69 85 59 75" stroke="#ff60a0" stroke-width="0.5" opacity="0.6"/><path d="M142 162Q136 162 135 159M144 177Q153 182 151 175M148 142Q153 145 159 138M134 192Q132 192 129 204M147 176Q141 175 132 168M135 159Q141 157 153 158M167 181Q166 184 175 190M159 162Q161 172 151 175M133 149Q138 144 142 143M143 150Q145 148 157 142M163 185Q159 174 164 173" stroke="#ff60a0" stroke-width="0.5" opacity="0.8"/><path d="M150 156Q149 150 142 157M149 165Q141 176 143 176M146 166Q150 169 148 174M140 183Q144 188 151 183M166 198Q165 199 160 211M138 161Q144 167 149 174M154 200Q149 204 147 216M166 143Q163 143 161 150M132 193Q125 192 129 197M144 153Q149 146 154 140M142 190Q146 194 150 185M138 170Q138 177 140 185M142 194Q143 188 150 192M163 179Q163 182 172 182M138 177Q130 170 134 172M164 178Q161 180 157 176M143 157Q147 157 155 166" stroke="#40e0c0" stroke-width="1.0" opacity="0.8"/><path d="M143 186Q153 179 152 179M154 154Q154 156 147 154M156 177Q156 179 155 184" stroke="#ff60a0" stroke-width="1.0" opacity="1.0"/><path d="M140 156Q140 162 147 163M143 166Q149 166 156 173M136 145Q137 139 133 135M145 177Q140 176 141 186M140 151Q132 151 126 159" stroke="#40c0f0" stroke-width="0.5" opacity="0.6"/><path d="M160 185Q160 189 149 182M153 160Q153 153 145 152M160 153Q168 143 169 141M155 188Q164 181 166 182M165 170Q158 173 159 171M136 169Q134 179 134 179" stroke="#40c0f0" stroke-width="0.5" opacity="0.8"/><path d="M147 146Q136 149 137 160M162 143Q165 143 167 137M151 140Q152 143 159 145M163 177Q168 182 173 178M141 170Q135 168 129 170M146 147Q143 141 140 143" stroke="#f0f040" stroke-width="1.0" opacity="0.6"/><path d="M139 171Q136 162 144 155M166 172Q164 166 158 157M158 154Q155 159 152 160M164 159Q157 155 157 151" stroke="#ff60a0" stroke-width="0.5" opacity="0.6"/><path d="M147 153Q142 146 145 141M146 142Q137 140 139 134M139 145Q141 144 144 136M138 156Q139 167 147 168M164 175Q173 176 176 173M146 173Q156 179 158 176M162 168Q152 157 155 154" stroke="#ff60a0" stroke-width="1.0" opacity="0.8"/><path d="M151 192Q139 186 134 192M155 178Q160 175 163 169M154 176Q160 173 165 177M163 181Q166 184 158 195M146 173Q155 173 158 174" stroke="#f0f040" stroke-width="0.5" opacity="0.8"/><path d="M159 141Q148 147 149 143M153 169Q156 173 167 179M167 198Q164 194 160 200M141 153Q141 156 147 159" stroke="#40c0f0" stroke-width="1.0" opacity="1.0"/><path d="M133 146Q129 137 124 136M161 146Q160 154 161 158M149 192Q156 200 155 199" stroke="#f0f040" stroke-width="0.5" opacity="0.6"/><path d="M147 162Q151 156 158 158M159 151Q146 156 142 153M158 161Q161 161 159 155M151 199Q163 196 162 203M168 141Q165 140 158 139M151 143Q162 133 161 133" stroke="#ff60a0" stroke-width="1.0" opacity="0.6"/><path d="M164 146Q175 138 176 133M162 188Q167 191 167 199M138 199Q145 205 145 201M167 140Q162 149 158 148" stroke="#a040e0" stroke-width="0.5" opacity="0.6"/><path d="M138 184Q140 178 132 184M163 189Q168 184 173 188M162 145Q163 149 155 147M166 199Q172 198 173 203M166 155Q170 167 168 173M160 157Q163 156 166 152" stroke="#ff60a0" stroke-width="0.5" opacity="1.0"/><path d="M161 145Q164 138 176 141M144 177Q147 168 141 166" stroke="#a040e0" stroke-width="0.5" opacity="1.0"/><path d="M134 171Q133 166 126 165M162 158Q169 162 170 155M149 144Q146 142 137 147M160 194Q158 194 148 198M142 186Q140 193 134 197M146 141Q137 143 134 139M138 181Q140 169 137 166M158 194Q167 203 165 209M158 160Q159 157 162 144M135 157Q128 155 124 156" stroke="#a040e0" stroke-width="1.0" opacity="0.6"/><path d="M164 187Q164 176 161 172M152 193Q155 196 159 201" stroke="#40e0c0" stroke-width="1.0" opacity="1.0"/><path d="M155 162Q159 162 161 168M153 187Q156 186 148 192M132 184Q135 185 140 192M147 193Q143 195 134 189M143 196Q141 193 137 193M146 160Q152 155 151 152M136 178Q139 177 144 182M155 187Q151 188 159 178M143 200Q144 206 151 208" stroke="#a040e0" stroke-width="1.0" opacity="0.8"/><path d="M148 195Q152 186 160 185M151 197Q158 198 160 202" stroke="#40e0c0" stroke-width="0.5" opacity="0.8"/><path d="M149 161Q147 172 149 176M139 154Q133 155 130 163M139 167Q138 168 130 174M144 173Q146 166 149 160M149 161Q145 158 134 158M141 164Q139 162 134 165M161 173Q167 179 169 187" stroke="#a040e0" stroke-width="0.5" opacity="0.8"/><path d="M148 166Q145 173 151 177M157 152Q163 155 171 150M150 172Q156 170 165 179M154 142Q162 140 166 131" stroke="#40c0f0" stroke-width="1.0" opacity="0.8"/><path d="M150 187Q156 187 161 178M154 170Q155 174 152 181M140 171Q148 174 146 180" stroke="#40c0f0" stroke-width="0.5" opacity="1.0"/><path d="M163 158Q170 156 165 151M159 184Q166 187 173 194" stroke="#f0f040" stroke-width="0.5" opacity="1.0"/><path d="M163 187Q152 179 152 182M135 143Q133 138 140 131M147 149Q158 151 157 159M160 196Q163 197 178 193M142 195Q138 188 127 188M159 193Q167 197 168 197M148 157Q154 157 150 163M168 173Q171 174 176 182" stroke="#40e0c0" stroke-width="1.0" opacity="0.6"/><path d="M146 177Q153 183 156 181M151 158Q151 156 157 160" stroke="#a040e0" stroke-width="1.0" opacity="1.0"/><path d="M146 159Q150 160 153 165M158 179Q169 176 173 175M163 176Q158 181 156 180M149 163Q143 160 133 159M164 191Q166 182 159 175" stroke="#40c0f0" stroke-width="1.0" opacity="0.6"/><path d="M133 182Q143 192 145 192M134 170Q138 172 140 180M155 176Q157 187 151 192" stroke="#40e0c0" stroke-width="0.5" opacity="1.0"/><path d="M168 189Q159 188 150 190M135 151Q138 150 129 158M144 174Q157 171 159 176" stroke="#f0f040" stroke-width="1.0" opacity="0.8"/><path d="M160 143Q168 141 168 139" stroke="#f0f040" stroke-width="1.0" opacity="1.0"/><path d="M124 41C108 81 88 131 124 176S141 208 149 224M135 47C109 80 97 130 127 173S149 204 155 216M119 41C97 81 83 131 109 178S139 214 152 230M121 46C104 82 95 131 117 182S145 205 156 217M108 40C79 83 67 140 103 181S131 215 143 228M129 48C105 77 91 137 126 174S144 204 156 222M112 44C91 82 82 133 112 182S133 211 149 226" stroke="#3040c0" stroke-width="1.5" opacity="0.8"/><path d="M122 46C103 77 85 130 124 175S142 204 152 222M120 44C101 75 83 132 114 178S132 215 152 222M125 47C102 79 89 136 122 180S138 210 153 219M111 49C91 82 74 139 105 180S127 218 150 224M125 45C108 80 95 130 121 172S141 206 154 220" stroke="#3a5ad0" stroke-width="1.5" opacity="0.8"/><path d="M133 48C111 78 101 137 129 175S147 205 156 218M128 43C108 78 89 136 125 175S138 211 149 216M134 45C113 79 99 130 124 174S145 206 154 216M132 42C109 78 92 138 124 174S140 206 156 223M112 44C88 85 80 135 114 179S135 209 145 228M107 42C92 83 79 139 111 179S128 216 149 231M133 49C105 78 97 135 129 172S142 201 159 222M128 50C111 83 90 130 119 175S143 203 151 221" stroke="#4050d8" stroke-width="1.5" opacity="0.6"/><path d="M117 45C94 80 79 130 116 177S135 206 152 227" stroke="#3040c0" stroke-width="1.0" opacity="1.0"/><path d="M124 49C107 81 91 137 118 177S146 202 156 220M131 42C116 77 96 133 130 179S149 200 152 215M110 43C93 85 78 134 112 187S130 214 150 233M120 41C100 84 86 133 116 175S137 210 148 225M102 39C83 81 69 137 108 179S130 218 150 235M109 42C94 76 73 137 111 183S133 213 146 230M108 40C94 77 73 133 113 180S134 209 151 228M128 50C110 77 98 138 126 180S145 203 153 214M125 41C107 78 93 135 117 181S142 202 158 220M112 39C87 77 71 133 111 186S133 218 144 230M105 47C82 84 69 137 105 182S130 215 144 232M127 43C104 82 84 133 123 178S140 209 154 220" stroke="#4a70e0" stroke-width="1.0" opacity="0.6"/><path d="M122 44C98 83 88 135 123 180S140 211 156 226M103 46C90 83 66 140 104 188S133 220 146 232M130 50C113 79 100 129 127 172S147 206 151 212M106 42C84 77 80 139 110 183S127 210 144 224M101 47C77 76 70 135 96 184S127 214 140 231M135 45C110 77 100 139 129 174S147 206 155 221M115 41C95 79 81 136 117 180S139 211 146 225M102 42C83 81 71 137 102 181S128 215 143 234M125 46C106 80 86 137 123 178S139 210 152 216" stroke="#3040c0" stroke-width="1.0" opacity="0.6"/><path d="M126 43C110 76 96 138 118 180S145 209 156 223M121 45C99 85 87 138 120 175S144 204 152 220M115 49C94 79 76 138 106 185S130 215 146 222M126 50C101 80 92 137 124 180S141 203 157 217M106 49C89 79 76 135 104 181S130 210 145 228M121 48C106 83 93 133 119 180S142 204 154 221M106 41C83 83 70 136 104 184S128 213 143 230M109 46C89 80 74 139 106 183S129 212 142 231M109 46C85 76 74 137 107 189S130 211 143 235" stroke="#2030a0" stroke-width="1.0" opacity="0.8"/><path d="M124 49C98 85 86 136 116 180S136 206 148 223" stroke="#3040c0" stroke-width="2.0" opacity="1.0"/><path d="M103 46C87 84 71 135 103 188S131 213 143 229M127 48C108 82 91 134 127 178S147 209 157 218M131 44C108 84 93 138 129 177S143 208 153 219M128 43C112 84 101 133 131 177S145 206 156 212M106 47C80 79 72 138 103 186S128 217 143 237M127 43C107 75 87 134 116 180S135 210 153 219" stroke="#2030a0" stroke-width="1.0" opacity="0.6"/><path d="M111 40C82 75 74 141 104 180S128 211 148 231M107 44C90 81 74 136 108 180S132 214 145 232M119 46C97 76 88 134 112 175S139 214 150 222M114 48C92 81 75 131 113 184S130 213 149 231M107 42C92 77 77 136 110 181S132 210 142 233M110 39C93 83 75 135 107 179S135 215 148 225M103 46C83 81 71 140 104 187S132 212 149 228M103 49C85 78 78 141 109 184S133 217 144 228M106 42C88 78 77 131 110 181S135 219 144 227" stroke="#3548c8" stroke-width="1.5" opacity="0.8"/><path d="M121 49C104 79 85 139 122 183S139 206 154 224M136 44C110 78 105 132 126 174S147 200 158 213M126 47C107 81 101 129 128 174S145 201 156 218M102 43C87 85 71 137 100 184S132 215 144 228" stroke="#5a50d0" stroke-width="1.5" opacity="0.8"/><path d="M110 40C87 76 75 135 108 180S128 213 148 230M108 43C95 83 74 135 108 178S135 215 152 228" stroke="#5060e0" stroke-width="2.0" opacity="0.6"/><path d="M128 46C113 81 98 131 131 174S150 203 155 216M134 48C116 81 96 132 126 176S149 204 151 218M119 42C94 79 79 133 113 177S130 216 149 222M134 45C115 83 93 136 124 174S150 201 152 216M103 44C90 78 69 133 109 186S129 213 150 229M130 42C108 81 94 129 124 171S145 205 153 218M131 48C114 78 101 132 126 177S143 200 154 213" stroke="#2a3ab0" stroke-width="1.5" opacity="0.6"/><path d="M126 42C102 76 94 136 124 175S140 203 154 217M117 45C92 78 84 139 112 177S135 212 144 223M114 47C92 78 81 131 114 180S139 211 147 221M101 48C85 79 69 136 103 180S124 217 148 232M102 40C85 82 64 136 103 180S127 214 139 238M113 44C98 83 75 135 115 185S131 212 147 231M104 47C86 78 66 138 99 186S126 219 142 229M124 50C100 78 88 130 121 178S140 205 153 219M113 47C99 84 83 139 110 177S139 207 150 221" stroke="#3040c0" stroke-width="1.0" opacity="0.8"/><path d="M127 43C103 83 97 136 120 177S147 205 152 220M117 46C104 83 90 130 115 182S142 210 155 219M130 45C113 77 98 131 124 173S149 198 158 216M119 44C98 75 90 130 123 179S136 209 149 223M128 47C107 75 92 134 122 183S144 209 148 221" stroke="#4a70e0" stroke-width="1.5" opacity="0.6"/><path d="M106 44C91 83 79 132 111 181S136 219 149 231M100 47C86 79 66 139 100 183S127 218 149 232M123 41C101 77 91 131 122 182S138 211 151 225M122 46C99 79 84 135 118 182S139 211 154 224M129 49C103 77 90 134 124 182S139 203 157 220" stroke="#3548c8" stroke-width="1.5" opacity="0.6"/><path d="M119 43C98 83 81 134 116 182S140 206 147 223M131 48C111 85 97 137 125 179S149 199 155 218M103 45C85 78 67 140 102 182S123 217 147 238M118 47C99 83 81 139 114 185S135 210 144 230M113 42C91 80 73 133 109 179S130 214 148 233M112 45C93 76 74 137 115 184S136 215 143 229M114 42C90 82 82 133 117 179S139 210 146 221M121 48C101 76 80 135 115 182S141 206 149 223M137 43C110 76 98 133 127 174S144 197 153 210" stroke="#5a50d0" stroke-width="1.0" opacity="0.8"/><path d="M120 44C98 83 77 135 116 180S135 213 148 225M108 41C89 78 74 133 107 182S133 213 150 230M123 40C96 80 88 133 118 183S133 208 147 222M128 50C109 85 87 130 119 176S146 206 154 220M124 49C101 78 82 139 118 180S137 207 155 220" stroke="#3548c8" stroke-width="1.0" opacity="0.8"/><path d="M115 49C92 79 77 131 111 183S138 214 152 224M104 44C80 85 66 138 104 187S128 220 144 233M127 45C107 81 92 130 126 173S143 200 158 218" stroke="#5060e0" stroke-width="1.0" opacity="0.8"/><path d="M112 48C88 84 81 140 114 178S129 216 149 230" stroke="#3a5ad0" stroke-width="1.0" opacity="1.0"/><path d="M100 40C82 81 72 135 101 181S122 215 143 238M136 44C117 80 97 129 128 172S144 198 153 214M122 51C106 80 95 130 126 174S139 207 149 220M132 48C113 77 98 134 127 180S147 203 150 218M124 43C105 82 85 138 115 175S142 210 150 226M104 40C83 77 75 141 106 183S131 214 141 235M114 47C89 79 76 139 112 184S136 212 153 223M136 42C110 82 103 130 131 172S150 203 153 212M107 49C84 79 75 135 108 182S129 211 143 235M112 40C91 83 75 137 106 183S133 219 146 227M120 42C102 84 87 138 119 182S139 209 146 220" stroke="#3040c0" stroke-width="1.5" opacity="0.6"/><path d="M123 41C99 75 90 135 124 175S140 205 150 217M131 50C108 76 96 137 126 178S149 207 152 219" stroke="#5060e0" stroke-width="1.0" opacity="1.0"/><path d="M134 46C116 83 96 138 126 171S144 203 152 214M123 49C109 84 89 130 128 173S146 205 159 218M102 44C89 82 67 140 100 184S125 218 142 235M108 45C79 75 73 140 102 181S129 221 147 228M105 39C82 78 68 134 101 187S129 221 139 231M134 46C112 81 98 131 120 172S143 207 151 215" stroke="#5060e0" stroke-width="1.5" opacity="0.8"/><path d="M99 46C85 84 65 140 96 181S128 220 144 231M110 41C93 83 79 139 107 177S135 207 145 231M114 45C92 82 80 138 109 179S135 207 153 222M132 41C109 80 99 136 120 181S147 200 154 213M106 45C91 83 78 133 107 179S133 214 143 233" stroke="#3a5ad0" stroke-width="1.0" opacity="0.6"/><path d="M126 50C112 79 95 138 125 177S146 206 151 214M133 50C110 78 100 137 127 173S143 207 152 220M107 43C90 79 68 133 104 180S126 217 144 230M106 43C84 79 68 135 106 181S131 218 150 233M113 42C100 79 87 134 116 178S133 216 146 223M108 40C90 83 72 133 103 181S125 217 142 227M111 48C87 81 77 139 110 181S131 218 144 231M117 45C93 77 85 131 110 183S134 206 152 225M117 42C103 83 85 136 119 177S135 211 151 218" stroke="#2030a0" stroke-width="1.5" opacity="0.8"/><path d="M115 40C92 84 84 137 112 176S140 209 153 229M108 44C80 83 73 141 108 184S130 221 149 231M134 43C117 76 96 137 129 179S150 199 152 214M118 46C101 83 90 134 115 175S140 208 155 222M130 44C111 78 92 137 126 179S141 206 158 220M132 50C107 76 95 131 125 177S145 209 152 218M125 46C102 81 92 132 115 181S142 208 150 223M122 49C98 76 90 134 123 179S138 207 151 220" stroke="#4050d8" stroke-width="1.0" opacity="0.6"/><path d="M113 46C91 83 75 134 105 179S134 218 151 230" stroke="#2a3ab0" stroke-width="1.0" opacity="1.0"/><path d="M115 43C94 83 81 135 111 179S128 216 150 226M128 50C115 76 96 133 126 176S141 205 159 213" stroke="#3548c8" stroke-width="1.0" opacity="0.6"/><path d="M128 46C111 81 94 135 127 177S149 201 151 219M125 49C105 79 96 134 117 177S140 204 157 221M116 47C106 82 88 139 118 177S140 205 147 219M111 43C88 84 81 136 113 182S131 208 150 230M126 45C111 83 93 137 124 173S141 206 157 223M135 46C115 82 102 131 126 178S152 206 154 216M100 48C81 77 68 132 96 185S125 221 146 235" stroke="#4050d8" stroke-width="1.0" opacity="0.8"/><path d="M113 40C93 76 76 131 109 184S130 214 148 224M123 45C105 84 90 139 118 182S139 205 149 218M128 43C110 78 98 133 124 174S151 205 154 219M126 48C105 76 90 137 121 175S147 209 154 213M105 49C89 80 73 132 101 179S129 221 143 232" stroke="#5a50d0" stroke-width="1.5" opacity="0.6"/><path d="M122 41C109 82 94 133 120 180S142 211 153 223M134 51C118 77 96 136 133 174S145 206 158 217M131 46C109 80 94 137 125 179S142 208 154 220M102 43C86 78 72 137 104 182S126 219 145 230M107 48C86 84 72 133 105 184S132 216 145 230" stroke="#2a3ab0" stroke-width="1.5" opacity="0.8"/><path d="M132 43C113 83 96 131 129 178S144 207 160 212M130 46C108 81 88 139 126 180S142 211 151 215M116 42C98 77 84 135 117 183S132 216 151 225M106 46C80 79 74 139 105 184S127 218 147 236M124 43C98 80 81 140 113 182S139 206 149 220M119 43C97 77 85 134 121 184S136 205 147 224M128 45C112 80 103 134 130 179S149 205 160 215M110 42C90 77 75 132 114 180S130 216 148 228" stroke="#4a70e0" stroke-width="1.0" opacity="0.8"/><path d="M132 42C105 75 95 129 119 174S147 209 154 215M117 43C102 84 86 131 122 180S136 207 148 224" stroke="#5a50d0" stroke-width="1.0" opacity="1.0"/><path d="M114 42C103 78 80 134 111 179S142 207 151 220M121 41C108 80 92 132 118 181S140 203 148 219M121 48C102 76 94 137 116 174S139 208 156 218M119 50C102 79 81 137 112 179S133 209 154 227M113 47C97 84 77 139 111 185S139 214 144 222M106 43C90 83 75 137 101 179S129 219 148 229M107 41C89 77 75 135 106 186S137 213 149 227" stroke="#5a50d0" stroke-width="1.0" opacity="0.6"/><path d="M110 48C84 76 71 140 102 179S125 218 141 236M119 49C103 75 81 138 114 177S135 208 149 224M98 39C83 80 63 132 101 187S122 215 144 230" stroke="#3548c8" stroke-width="1.0" opacity="1.0"/><path d="M127 49C101 79 88 134 123 182S143 205 156 226M128 42C107 84 92 133 124 178S149 209 149 220M114 41C100 76 83 130 112 175S140 213 147 220M114 42C90 80 81 133 114 179S139 217 151 223M104 46C88 76 70 140 104 187S125 218 148 234" stroke="#2a3ab0" stroke-width="1.0" opacity="0.8"/><path d="M118 45C102 80 87 137 123 182S140 205 148 222M119 43C97 80 87 137 121 182S138 207 150 218" stroke="#2a3ab0" stroke-width="2.0" opacity="0.8"/><path d="M123 43C98 78 88 137 122 180S143 212 152 221M117 45C103 83 92 136 118 174S141 212 153 218" stroke="#4a70e0" stroke-width="1.5" opacity="1.0"/><path d="M132 45C114 75 101 131 127 176S141 206 153 217M114 48C100 80 79 132 114 183S135 213 154 223M120 50C102 76 90 133 113 178S138 205 153 222M131 43C107 77 94 134 126 174S145 201 154 220M129 42C113 77 100 135 125 175S149 207 158 216M136 43C112 76 104 136 130 178S145 206 159 219M115 42C93 76 85 133 112 181S132 213 153 228M98 47C83 77 72 134 102 180S122 221 148 232M117 48C100 78 90 131 114 178S135 212 150 218" stroke="#4050d8" stroke-width="1.5" opacity="0.8"/><path d="M104 43C80 83 66 132 103 186S125 223 144 231M110 48C90 81 82 133 108 177S135 214 144 229M116 44C94 80 86 134 111 183S138 207 149 225" stroke="#2a3ab0" stroke-width="1.5" opacity="1.0"/><path d="M110 49C96 77 82 132 107 182S129 215 148 230" stroke="#3548c8" stroke-width="2.0" opacity="0.8"/><path d="M106 41C86 75 78 134 101 186S132 211 149 227M134 48C114 79 101 136 122 175S144 200 156 220M121 47C102 79 87 140 119 177S139 213 149 225M103 39C89 79 70 133 104 184S125 216 142 232M115 43C87 84 72 139 104 185S127 211 144 229" stroke="#5060e0" stroke-width="1.5" opacity="0.6"/><path d="M106 43C84 79 69 138 99 185S121 221 141 234" stroke="#4050d8" stroke-width="2.0" opacity="0.6"/><path d="M113 47C95 80 81 134 113 183S134 207 151 223M107 39C90 82 78 137 110 179S128 213 142 234M104 41C79 76 64 139 96 189S130 214 141 235M127 42C102 82 90 137 117 183S140 210 151 224M121 43C99 76 88 133 122 178S141 213 156 223M125 43C107 83 93 137 123 173S144 203 155 217" stroke="#4a70e0" stroke-width="1.5" opacity="0.8"/><path d="M134 49C107 78 94 139 124 178S149 201 154 212M120 43C106 80 87 132 116 182S137 209 156 217M121 48C95 80 86 135 118 177S134 209 151 221M132 47C115 84 104 135 127 174S152 199 153 218M117 47C90 84 80 140 109 185S134 216 151 226" stroke="#3a5ad0" stroke-width="1.5" opacity="0.6"/><path d="M125 42C111 75 90 134 119 172S143 208 153 214M131 43C116 79 101 137 129 178S150 205 153 216M113 39C87 77 77 132 110 181S131 211 150 224M133 42C105 81 100 132 124 172S148 199 154 217M115 44C88 83 74 134 110 185S134 209 146 232" stroke="#2a3ab0" stroke-width="1.0" opacity="0.6"/><path d="M120 49C110 84 86 139 124 181S138 206 157 221" stroke="#3548c8" stroke-width="1.5" opacity="1.0"/><path d="M114 47C89 77 73 134 114 177S130 211 143 232M118 47C92 79 85 131 114 185S134 208 149 223M133 50C113 77 103 135 129 176S153 199 158 216" stroke="#2030a0" stroke-width="1.0" opacity="1.0"/><path d="M105 48C85 75 68 137 103 185S126 218 144 229" stroke="#4050d8" stroke-width="2.0" opacity="0.8"/><path d="M136 47C110 75 101 132 131 176S144 200 160 215" stroke="#5060e0" stroke-width="1.0" opacity="0.6"/><path d="M111 40C90 80 78 132 110 178S129 215 152 233M121 49C99 76 89 130 121 182S134 209 151 227" stroke="#5a50d0" stroke-width="2.0" opacity="0.8"/><path d="M111 48C87 79 79 140 107 181S133 218 148 234M127 48C102 78 92 134 117 179S145 211 151 218" stroke="#2030a0" stroke-width="1.5" opacity="1.0"/><path d="M119 40C94 75 83 133 109 178S133 211 145 224" stroke="#5a50d0" stroke-width="2.0" opacity="0.6"/><path d="M111 46C88 83 71 132 108 187S126 215 143 234" stroke="#3a5ad0" stroke-width="2.0" opacity="0.8"/><path d="M120 45C96 79 85 138 113 178S134 207 154 228M119 49C107 77 90 133 123 176S140 203 148 224" stroke="#3a5ad0" stroke-width="1.0" opacity="0.8"/><path d="M130 49C114 78 97 131 127 179S152 199 158 216" stroke="#2030a0" stroke-width="1.5" opacity="0.6"/><path d="M112 46C97 83 80 131 110 178S135 210 151 224M109 49C95 83 82 134 107 180S138 212 147 223" stroke="#5a50d0" stroke-width="1.5" opacity="1.0"/><path d="M113 44C90 81 83 132 107 178S134 213 144 223" stroke="#5060e0" stroke-width="2.0" opacity="0.8"/><path d="M186 32C201 90 190 146 176 169S168 202 151 231M188 31C204 82 191 137 172 168S165 204 146 229M172 30C189 82 174 140 165 170S150 194 137 213M193 30C206 89 194 142 177 177S165 203 147 224M170 34C192 86 178 141 166 170S147 194 140 223M181 33C195 83 180 135 174 169S160 197 149 217" stroke="#3040c0" stroke-width="1.0" opacity="0.8"/><path d="M185 34C206 83 198 145 182 177S160 205 146 225M180 35C195 84 187 144 167 174S161 195 141 224M178 27C198 82 189 137 172 175S155 196 146 224M189 33C204 88 187 141 174 173S158 202 151 223" stroke="#5a50d0" stroke-width="1.0" opacity="0.8"/><path d="M191 29C207 82 203 147 178 173S172 206 150 225M185 29C199 80 191 145 181 174S164 205 154 231M185 27C198 84 195 143 176 168S160 203 153 225M190 32C207 87 194 143 180 177S164 200 147 227" stroke="#3a5ad0" stroke-width="1.5" opacity="0.8"/><path d="M196 33C204 83 195 140 181 169S171 201 154 224M169 30C183 81 175 135 158 167S148 197 133 217M185 28C194 81 187 145 170 169S160 203 146 226M188 33C201 82 195 141 179 173S158 199 149 223M167 30C180 80 174 134 155 169S146 194 141 214M166 37C186 88 175 139 161 162S145 195 138 214M196 35C207 81 199 140 185 172S169 202 156 228M172 34C187 87 177 135 167 170S148 193 145 215M175 36C184 84 177 134 166 167S149 201 144 213M193 31C204 87 190 138 180 169S165 208 153 226" stroke="#4050d8" stroke-width="1.5" opacity="0.8"/><path d="M165 36C186 84 176 136 161 166S147 199 138 211M187 34C205 82 196 137 176 172S160 200 150 224M163 29C179 89 168 141 159 164S150 192 132 219M194 33C205 86 198 138 181 173S165 203 155 228M190 35C211 88 197 139 183 179S170 202 150 233M191 34C208 90 198 142 176 169S170 201 149 229M192 33C207 85 196 143 177 168S167 200 151 222M166 31C185 88 176 137 165 164S149 195 137 221" stroke="#2030a0" stroke-width="1.5" opacity="0.8"/><path d="M176 32C194 84 181 135 171 173S153 203 143 220M195 34C206 86 198 142 183 178S167 205 156 234M189 33C206 81 195 143 179 172S164 209 156 231M195 34C209 84 201 141 177 173S172 203 153 224M175 33C185 90 175 137 162 172S149 194 136 214" stroke="#3040c0" stroke-width="1.5" opacity="0.8"/><path d="M185 34C201 87 188 137 173 171S155 205 146 226M191 35C202 86 198 142 179 175S164 208 154 232M172 28C190 85 177 134 168 164S155 202 138 221M164 27C182 80 176 139 160 167S147 199 133 221M191 27C211 82 200 138 176 169S165 207 153 231M176 34C195 88 180 144 167 169S159 204 141 223" stroke="#4050d8" stroke-width="1.5" opacity="0.6"/><path d="M177 31C187 81 174 143 162 172S149 195 137 222M180 28C195 89 191 144 175 172S160 201 145 226M193 36C208 83 197 142 176 169S163 200 147 223M196 27C212 81 197 143 181 178S171 205 151 226M177 33C190 82 175 140 164 164S148 194 144 218M170 31C183 89 173 137 162 172S147 198 141 217" stroke="#3548c8" stroke-width="1.0" opacity="0.6"/><path d="M194 35C209 83 198 139 181 171S162 208 149 227M167 29C180 87 172 143 156 170S145 196 143 214" stroke="#2030a0" stroke-width="1.0" opacity="1.0"/><path d="M180 37C191 81 179 140 167 168S154 194 141 220M175 29C191 81 183 137 163 168S152 203 140 226M165 36C181 85 168 136 161 165S151 196 134 212M181 31C198 88 188 145 172 168S161 205 143 225M179 29C190 87 179 140 167 167S152 195 140 220M176 35C197 90 179 140 168 166S159 199 146 220M178 28C186 90 177 135 164 172S159 195 139 215" stroke="#5a50d0" stroke-width="1.5" opacity="0.6"/><path d="M164 32C181 88 174 142 163 169S146 199 140 218M171 30C179 86 178 134 164 170S144 199 137 214M170 34C186 86 176 142 160 166S151 197 142 219M195 32C208 82 196 142 185 174S169 209 159 229" stroke="#4a70e0" stroke-width="1.0" opacity="0.6"/><path d="M168 35C183 88 173 140 155 167S152 199 143 220M183 36C199 80 184 139 168 166S155 201 141 224M168 35C184 83 175 142 160 168S149 199 137 211M186 37C193 85 185 140 176 168S163 200 142 223M167 27C182 85 174 138 161 162S144 190 139 212M191 29C209 82 200 139 180 177S170 204 156 230" stroke="#3a5ad0" stroke-width="1.0" opacity="0.8"/><path d="M188 34C204 87 191 145 174 173S162 207 148 222M190 32C206 83 198 139 186 177S173 207 148 231M184 32C193 81 190 142 173 166S160 204 142 225M175 34C190 84 187 135 172 170S153 195 143 219M182 32C203 81 185 144 176 173S165 197 150 228" stroke="#2a3ab0" stroke-width="1.5" opacity="0.8"/><path d="M184 35C196 87 183 145 174 175S158 203 144 227M169 36C191 80 174 143 160 168S148 196 138 220M173 37C187 86 182 142 164 171S154 194 139 221M191 34C203 88 198 139 183 168S165 204 151 223" stroke="#5060e0" stroke-width="1.0" opacity="0.8"/><path d="M180 31C191 86 178 135 168 171S160 195 140 220M192 31C209 81 197 138 178 178S165 206 149 230M196 28C201 87 199 145 180 178S162 208 149 226M178 34C196 80 182 135 166 174S162 196 145 224M182 29C189 83 185 143 172 172S159 200 142 226M169 30C186 81 171 134 165 172S151 199 137 219M182 36C192 85 186 137 167 169S160 199 146 222M180 27C198 84 186 144 164 167S152 203 140 226" stroke="#5a50d0" stroke-width="1.5" opacity="0.8"/><path d="M174 36C194 81 179 142 169 167S155 197 147 224M180 36C194 88 185 140 169 166S159 201 142 222M174 29C184 80 183 136 161 167S154 202 137 218M192 35C202 89 191 143 181 169S167 199 149 222M171 28C183 88 177 141 157 168S144 194 139 218M185 35C201 82 181 140 176 172S156 200 142 227M187 30C196 80 191 137 173 167S164 206 151 228M195 29C207 89 198 142 184 178S164 208 149 230M180 28C196 87 192 138 177 175S160 200 152 228" stroke="#2030a0" stroke-width="1.5" opacity="0.6"/><path d="M177 31C197 84 191 141 166 175S163 204 144 226M164 32C175 81 166 135 155 169S149 191 135 217M194 35C212 88 199 143 179 174S174 204 153 229M170 31C189 89 184 136 164 173S149 199 147 222M173 29C193 81 185 134 165 169S149 199 145 223M190 37C207 83 193 139 180 172S167 200 154 230" stroke="#5060e0" stroke-width="1.5" opacity="0.6"/><path d="M192 27C204 89 196 147 181 174S163 207 152 231" stroke="#3a5ad0" stroke-width="1.0" opacity="1.0"/><path d="M185 31C201 80 189 142 168 168S155 200 145 222M190 31C205 89 191 140 176 171S167 203 145 228M178 31C192 82 184 140 169 170S161 200 149 222M195 34C203 84 192 142 177 171S170 201 148 225M189 29C197 89 195 142 177 170S166 207 152 221" stroke="#2a3ab0" stroke-width="1.5" opacity="0.6"/><path d="M176 31C194 88 183 139 171 171S159 200 148 223M195 31C213 80 198 141 177 178S170 207 156 233" stroke="#3040c0" stroke-width="1.5" opacity="1.0"/><path d="M170 35C179 83 168 134 161 169S144 198 136 210M180 34C194 84 185 142 169 169S155 204 141 221M182 37C205 87 192 143 177 173S158 199 145 220M181 30C195 87 186 135 176 172S164 201 143 220M188 36C209 86 193 145 181 171S165 206 154 226M186 28C200 82 195 139 171 172S168 207 149 222M180 37C194 87 183 145 170 166S159 198 145 226M195 28C212 87 195 145 177 169S163 202 149 224" stroke="#3a5ad0" stroke-width="1.5" opacity="0.6"/><path d="M180 30C195 89 186 138 178 174S164 205 144 225M189 32C204 86 191 146 177 172S159 206 147 229M174 35C198 82 179 141 171 171S154 197 140 220M184 34C204 81 197 145 178 171S164 206 152 223M166 30C180 85 166 133 153 167S150 193 133 215M169 34C187 82 174 134 160 164S147 200 141 215M169 32C188 86 174 141 160 163S146 199 140 216" stroke="#4050d8" stroke-width="1.0" opacity="0.6"/><path d="M190 32C205 83 191 144 173 168S165 207 150 225M172 30C183 87 176 142 163 171S145 193 135 219M179 30C201 89 189 144 173 173S155 201 148 222M176 36C195 82 183 141 170 174S158 203 148 218" stroke="#3548c8" stroke-width="1.5" opacity="0.6"/><path d="M190 32C201 87 193 138 178 175S165 206 152 229M189 32C205 88 195 143 181 174S171 203 154 226" stroke="#4a70e0" stroke-width="1.0" opacity="1.0"/><path d="M168 28C178 85 173 137 158 164S146 197 135 216" stroke="#4a70e0" stroke-width="1.5" opacity="1.0"/><path d="M182 37C191 87 190 142 173 171S156 196 149 219M173 29C186 82 182 141 162 163S148 200 143 222M181 33C201 82 183 136 166 166S162 197 147 227M188 35C203 81 187 138 172 168S165 201 142 227M170 35C185 82 178 142 161 164S144 195 135 221" stroke="#4a70e0" stroke-width="1.5" opacity="0.8"/><path d="M172 29C181 81 172 143 163 167S150 193 134 219M168 31C178 82 172 141 154 169S148 196 141 213M193 34C204 89 198 148 183 171S169 209 148 230M179 30C192 85 179 143 170 167S153 199 148 223M173 35C190 89 186 141 164 170S154 198 148 219" stroke="#5a50d0" stroke-width="1.0" opacity="0.6"/><path d="M185 27C203 89 193 143 180 171S167 205 152 230" stroke="#2a3ab0" stroke-width="1.0" opacity="1.0"/><path d="M182 32C204 81 189 142 171 171S166 203 149 225M182 35C189 84 183 135 170 167S155 195 148 226M198 32C208 83 195 145 179 172S166 210 151 225M193 32C202 80 200 145 177 169S168 202 155 232M173 33C192 86 182 139 164 165S155 196 140 222M175 28C190 82 180 142 162 169S155 201 138 215M178 36C194 89 184 135 165 171S158 199 138 221" stroke="#3040c0" stroke-width="1.0" opacity="0.6"/><path d="M168 31C183 87 175 138 161 165S151 192 131 219M191 36C209 83 197 145 184 173S173 206 155 233M190 35C208 83 200 142 179 170S168 210 148 234M187 32C198 84 189 144 171 172S161 207 150 229" stroke="#4a70e0" stroke-width="1.0" opacity="0.8"/><path d="M179 35C194 89 190 144 169 169S162 197 149 222M186 35C199 81 189 141 173 173S155 202 150 226M179 31C195 87 188 140 167 165S154 201 144 217M190 28C213 86 199 146 182 175S165 202 158 230M190 32C205 85 195 138 176 173S169 199 150 232M181 35C192 85 181 141 170 171S162 203 140 225M177 34C187 81 179 138 164 172S153 200 142 217M179 32C198 90 190 136 172 168S160 202 141 226" stroke="#5060e0" stroke-width="1.5" opacity="0.8"/><path d="M164 31C181 82 176 133 160 169S145 195 134 219M180 34C193 88 190 142 175 169S156 199 142 218M172 35C178 85 170 140 158 168S147 197 142 217M182 35C194 81 188 140 171 173S158 201 148 226M197 28C206 89 197 147 180 172S173 209 153 229M173 36C190 83 181 142 165 163S147 192 141 216" stroke="#2030a0" stroke-width="1.0" opacity="0.8"/><path d="M194 33C208 81 193 144 179 177S171 209 150 223M196 30C209 88 199 145 183 170S169 205 157 225M174 32C196 85 185 135 171 164S155 200 142 222M187 32C194 86 186 145 169 170S163 199 147 226M192 33C207 85 202 147 181 178S165 204 153 225M174 31C181 89 175 139 164 166S151 199 142 217" stroke="#3040c0" stroke-width="1.5" opacity="0.6"/><path d="M181 28C199 80 183 142 172 174S161 201 142 226" stroke="#3040c0" stroke-width="1.0" opacity="1.0"/><path d="M173 29C195 85 177 143 168 170S152 203 143 222M173 30C192 89 180 142 163 167S151 194 138 223M175 31C194 85 185 139 170 168S152 200 147 221M181 28C198 82 187 145 177 170S164 204 144 219M172 31C192 82 185 139 168 167S154 194 147 221M177 30C187 81 183 138 167 171S159 195 144 216" stroke="#4050d8" stroke-width="1.0" opacity="0.8"/><path d="M188 29C200 87 190 140 182 176S168 204 152 228M182 30C194 83 185 140 168 172S155 199 148 219" stroke="#4050d8" stroke-width="1.0" opacity="1.0"/><path d="M179 32C189 89 176 136 165 165S158 196 142 217M193 28C210 82 199 142 178 171S164 207 151 232" stroke="#3a5ad0" stroke-width="1.0" opacity="0.6"/><path d="M192 30C214 89 200 140 179 174S172 204 155 229" stroke="#3040c0" stroke-width="2.0" opacity="0.6"/><path d="M178 30C197 84 184 138 171 168S154 197 148 217M177 33C201 89 188 141 169 170S158 203 144 224" stroke="#2a3ab0" stroke-width="1.5" opacity="1.0"/><path d="M194 34C205 88 198 142 183 176S167 208 150 224M194 30C213 88 201 143 179 177S173 204 156 231M168 29C186 84 174 137 165 165S146 192 143 216M171 32C184 84 175 142 163 168S152 195 143 223M179 30C190 82 183 136 162 165S157 194 145 216M183 32C205 83 191 142 179 171S167 200 150 222M169 29C184 81 178 135 160 170S151 199 140 214" stroke="#4a70e0" stroke-width="1.5" opacity="0.6"/><path d="M166 35C185 89 174 141 157 169S153 194 137 211M167 27C188 86 172 133 163 171S148 192 135 218M173 32C196 89 181 143 165 169S154 201 145 217M174 34C192 84 178 139 169 167S157 203 137 215M176 27C192 89 174 140 158 163S150 193 142 221M175 31C188 81 178 137 161 171S150 196 136 213M178 31C201 89 193 144 168 173S161 196 147 223M184 31C202 90 195 142 179 174S161 204 153 226" stroke="#5060e0" stroke-width="1.0" opacity="0.6"/><path d="M166 36C186 82 174 133 162 165S151 195 141 214M195 33C209 88 198 145 181 171S165 205 156 229M181 29C188 87 186 141 170 166S156 202 141 217M178 31C191 88 179 144 165 169S158 193 141 217M164 34C180 85 168 137 160 166S146 193 139 214" stroke="#3548c8" stroke-width="1.5" opacity="0.8"/><path d="M174 36C196 84 182 137 169 171S156 201 143 220M182 27C192 80 180 137 164 170S154 200 146 217M179 28C187 87 180 143 169 166S152 195 145 214" stroke="#5a50d0" stroke-width="1.0" opacity="1.0"/><path d="M170 36C184 86 174 142 162 170S151 201 140 213M187 36C209 87 199 143 178 172S165 205 148 228M188 27C199 85 192 145 181 177S160 199 154 222M192 31C199 83 192 139 172 175S160 206 146 230M182 31C199 84 184 145 172 171S157 198 148 223" stroke="#2a3ab0" stroke-width="1.0" opacity="0.6"/><path d="M166 33C183 85 171 138 159 171S152 191 138 215" stroke="#3548c8" stroke-width="1.5" opacity="1.0"/><path d="M189 32C202 85 196 140 179 170S165 205 150 228M167 37C182 84 168 137 157 165S144 198 138 210M183 28C197 86 184 142 175 168S162 200 146 223M188 33C208 86 196 146 185 173S166 202 153 226M188 35C205 80 202 139 185 176S164 202 152 224" stroke="#2030a0" stroke-width="1.0" opacity="0.6"/><path d="M194 34C204 81 194 144 177 176S166 204 154 224M186 30C202 85 189 136 173 167S163 202 146 226" stroke="#3548c8" stroke-width="2.0" opacity="0.8"/><path d="M193 30C208 87 195 138 184 178S166 206 157 224" stroke="#4050d8" stroke-width="2.0" opacity="1.0"/><path d="M187 28C193 83 189 140 168 174S158 206 146 221" stroke="#5a50d0" stroke-width="1.5" opacity="1.0"/><path d="M173 36C186 87 175 138 159 171S152 194 136 221M180 28C197 84 188 139 177 167S163 206 153 223M192 30C205 86 192 143 176 174S167 200 154 230" stroke="#2a3ab0" stroke-width="1.0" opacity="0.8"/><path d="M171 35C193 82 175 144 170 168S155 198 141 221" stroke="#5060e0" stroke-width="2.0" opacity="1.0"/><path d="M174 29C190 81 175 139 157 172S151 195 140 216M185 33C202 81 192 142 178 168S165 197 151 221" stroke="#3a5ad0" stroke-width="1.5" opacity="1.0"/><path d="M185 30C202 89 188 139 173 175S156 202 151 219" stroke="#4a70e0" stroke-width="2.0" opacity="0.8"/><path d="M169 29C179 90 177 137 157 162S144 191 136 217" stroke="#4050d8" stroke-width="2.0" opacity="0.6"/><path d="M181 29C197 89 180 138 168 167S152 199 139 220M187 29C203 84 189 144 175 167S161 203 149 224" stroke="#2030a0" stroke-width="1.5" opacity="1.0"/><path d="M166 27C180 83 179 141 159 171S147 192 137 219" stroke="#2a3ab0" stroke-width="2.0" opacity="0.8"/><path d="M179 28C191 88 183 139 165 174S159 196 140 218" stroke="#2030a0" stroke-width="2.0" opacity="0.8"/><path d="M174 33C189 80 172 136 164 165S154 194 135 221" stroke="#5060e0" stroke-width="1.0" opacity="1.0"/><path d="M163 28C185 89 176 137 153 164S146 197 136 212" stroke="#3a5ad0" stroke-width="2.0" opacity="1.0"/><path d="M177 31C193 88 185 142 162 172S155 202 138 222" stroke="#5060e0" stroke-width="1.5" opacity="1.0"/><path d="M178 28C193 90 184 145 171 167S155 196 145 224" stroke="#3040c0" stroke-width="2.0" opacity="1.0"/><path d="M122 129C106 78 114 30 139 28S165 74 156 107S139 131 124 118M112 129C93 83 109 29 134 23S169 67 161 103S141 133 126 117M119 129C103 79 116 31 139 31S166 73 160 103S136 135 128 118M116 133C101 79 104 33 137 24S170 72 161 101S137 135 126 113" stroke="#f05a90" stroke-width="1.0" opacity="0.4"/><path d="M123 126C108 83 117 32 141 31S165 70 159 102S143 135 126 114M127 133C106 81 115 35 135 28S162 66 159 101S143 133 126 117M113 128C97 83 109 25 135 23S170 67 163 108S141 136 131 113" stroke="#c02a70" stroke-width="1.0" opacity="0.4"/><path d="M114 133C98 83 105 28 140 29S167 66 164 101S137 140 131 116M114 131C95 82 106 27 142 28S168 70 167 102S139 135 130 118" stroke="#e02050" stroke-width="0.5" opacity="0.6"/><path d="M112 134C95 81 99 24 140 26S171 74 167 108S137 135 126 116M117 133C97 81 106 27 141 28S170 68 165 107S136 133 131 116M127 133C108 76 115 29 142 31S162 68 156 103S142 130 128 114" stroke="#d02060" stroke-width="0.5" opacity="0.4"/><path d="M113 133C91 82 106 28 136 23S170 71 167 106S138 136 124 117M123 132C104 81 114 29 139 29S169 67 163 105S142 137 125 117M128 129C110 80 114 35 138 30S162 67 160 103S137 132 128 113M126 129C108 78 115 35 138 35S162 67 156 106S143 135 127 113" stroke="#c02a70" stroke-width="1.0" opacity="0.6"/><path d="M112 129C100 83 109 26 141 25S169 67 164 105S141 138 126 116M124 132C107 83 120 32 135 35S168 70 158 108S140 136 127 114M108 129C91 76 100 26 136 25S171 66 162 107S141 142 131 118M114 132C91 80 104 29 136 26S169 67 164 102S136 137 128 117M119 130C96 77 107 29 136 25S171 68 164 105S142 138 127 114" stroke="#f03070" stroke-width="1.0" opacity="0.4"/><path d="M114 132C99 81 106 30 139 25S172 69 164 101S138 133 124 111M126 128C110 82 114 34 139 36S161 69 157 108S142 134 128 114M118 128C99 83 112 29 137 29S171 70 158 104S141 133 132 115M122 131C103 77 117 30 138 31S162 72 160 102S140 132 129 111M129 129C104 81 117 32 137 32S166 69 156 105S142 128 132 118M120 126C97 80 106 28 135 24S171 67 157 106S139 136 127 113" stroke="#f05a90" stroke-width="0.5" opacity="0.6"/><path d="M126 133C103 81 118 34 142 33S165 72 160 101S139 129 126 119" stroke="#f05a90" stroke-width="0.5" opacity="0.4"/><path d="M108 127C92 84 100 26 138 26S172 73 168 102S140 139 130 117M119 129C105 84 111 32 137 31S165 69 157 104S136 135 132 111" stroke="#b040a0" stroke-width="1.0" opacity="0.4"/><path d="M117 130C106 79 109 28 141 27S168 73 163 106S139 135 126 118M118 134C97 81 105 28 135 26S165 68 159 105S139 136 131 117M115 128C90 82 106 29 134 26S173 73 167 103S138 135 130 117" stroke="#e04080" stroke-width="0.5" opacity="0.6"/><path d="M120 129C103 80 110 31 142 25S166 67 157 103S143 134 127 117M121 128C103 78 115 34 135 26S168 72 156 103S141 137 128 112" stroke="#f03070" stroke-width="1.0" opacity="0.6"/><path d="M111 126C93 78 101 31 139 21S172 67 164 103S141 138 132 115M127 129C106 83 116 37 142 29S162 72 158 103S138 135 131 113M116 126C98 77 105 31 140 23S168 66 163 104S137 137 131 113M121 132C100 81 116 30 141 33S164 73 162 102S141 133 132 111" stroke="#e02050" stroke-width="0.5" opacity="0.4"/><path d="M124 128C105 81 112 29 139 29S164 74 160 103S138 135 129 112M122 134C106 76 114 35 141 33S167 69 155 107S142 137 131 119" stroke="#e02050" stroke-width="1.0" opacity="0.4"/><path d="M109 131C96 78 104 30 140 25S168 73 165 103S140 136 126 114M120 130C107 79 112 32 137 30S169 72 158 104S137 136 130 116" stroke="#d02060" stroke-width="1.0" opacity="0.6"/><path d="M122 133C107 81 112 33 141 32S169 71 156 108S140 130 129 113" stroke="#e04080" stroke-width="0.5" opacity="0.4"/><path d="M120 129C101 79 111 32 139 33S165 72 163 104S143 133 130 112M111 128C98 78 109 27 140 25S170 72 161 107S140 139 125 116" stroke="#e04080" stroke-width="1.0" opacity="0.6"/><path d="M119 133C102 83 110 28 142 23S173 66 159 101S138 139 132 118M118 129C98 83 115 27 141 29S171 67 163 101S139 134 130 118M126 132C103 81 115 35 142 31S163 72 157 102S140 130 130 114" stroke="#c02a70" stroke-width="0.5" opacity="0.6"/><path d="M108 126C91 78 106 30 140 23S170 66 161 102S144 138 131 113M112 132C96 81 103 30 137 21S169 66 161 105S137 142 128 112M124 131C104 81 115 30 141 30S169 69 157 107S137 132 131 119M121 126C106 78 113 36 139 31S170 74 158 104S139 136 126 111M122 130C100 79 108 28 134 28S168 67 162 109S139 135 126 116M113 133C98 80 107 27 140 25S172 71 159 107S138 133 126 118M115 133C100 83 109 32 138 29S169 68 162 107S136 133 127 116" stroke="#ff4060" stroke-width="1.0" opacity="0.4"/><path d="M116 129C98 80 105 29 137 23S168 71 163 108S141 136 129 119M124 132C110 78 116 34 136 30S162 70 153 104S140 134 130 119M120 129C103 78 110 35 141 27S169 66 161 107S140 136 130 112" stroke="#b040a0" stroke-width="0.5" opacity="0.6"/><path d="M117 129C100 83 107 31 140 27S172 67 160 102S138 132 130 114M126 130C107 84 112 32 142 34S162 70 155 103S136 131 127 118M117 127C104 82 114 32 142 33S165 69 156 108S137 136 128 119M113 128C100 78 106 31 141 24S168 69 164 107S140 136 131 113M127 133C104 83 113 35 141 29S168 68 157 104S139 133 131 118" stroke="#d02060" stroke-width="0.5" opacity="0.6"/><path d="M110 131C95 78 100 24 141 20S173 72 161 107S141 138 125 113M124 132C107 83 114 33 140 34S164 67 156 101S139 131 129 112M121 129C103 79 113 37 138 32S169 72 153 105S137 129 127 114" stroke="#c02a70" stroke-width="0.5" opacity="0.4"/><path d="M113 126C99 81 108 26 138 28S169 72 160 102S143 137 128 116M118 126C106 78 114 31 138 27S170 74 162 106S137 134 126 113M121 132C106 82 115 36 136 35S167 68 158 108S136 132 128 112M121 130C98 77 109 27 137 32S165 71 161 108S142 135 125 112M116 128C101 77 104 33 142 23S167 69 158 106S143 137 125 118M119 133C98 84 114 30 139 29S168 69 158 107S142 133 126 116M122 129C104 77 114 36 140 34S163 67 154 104S140 134 129 116" stroke="#ff4060" stroke-width="1.0" opacity="0.6"/><path d="M119 134C100 78 107 29 141 28S168 69 163 105S139 134 131 115M112 133C92 79 104 30 135 23S170 73 161 109S137 136 126 118" stroke="#b040a0" stroke-width="0.5" opacity="0.4"/><path d="M120 131C100 78 113 30 141 31S166 69 159 103S138 130 130 118M119 131C100 81 107 25 141 30S170 72 161 103S142 136 130 118M120 133C105 80 115 30 134 28S163 66 156 103S141 131 128 115M117 130C102 78 112 32 139 26S165 66 156 103S139 134 126 115" stroke="#f03070" stroke-width="0.5" opacity="0.6"/><path d="M122 130C99 78 112 26 136 31S170 69 157 102S141 134 126 112M121 131C99 79 107 30 135 32S169 66 161 103S139 132 130 114" stroke="#d02060" stroke-width="1.0" opacity="0.4"/><path d="M115 133C96 79 103 28 139 25S174 74 162 107S137 134 132 111M115 129C93 82 106 26 139 21S168 72 160 108S140 138 126 118M124 132C105 80 116 28 138 28S163 73 161 102S141 135 125 118M112 129C92 79 105 25 138 26S170 73 160 106S137 134 129 118" stroke="#ff4060" stroke-width="0.5" opacity="0.4"/><path d="M126 134C110 81 115 35 136 30S168 68 153 105S141 133 130 114" stroke="#f03070" stroke-width="0.5" opacity="0.4"/><path d="M113 128C99 79 108 25 139 27S168 69 160 107S141 136 131 115M110 126C97 80 107 28 139 28S171 67 166 107S137 134 127 116M111 128C95 77 103 28 134 29S167 67 158 109S143 135 130 111M121 131C104 79 121 31 137 34S164 66 159 105S139 130 131 112" stroke="#ff4060" stroke-width="0.5" opacity="0.6"/><path d="M115 128C100 78 106 26 137 27S167 71 157 102S139 139 131 113M122 134C100 78 108 31 137 28S168 66 162 108S142 137 129 115M114 129C103 79 106 26 142 30S167 67 164 104S138 132 130 111" stroke="#e04080" stroke-width="1.0" opacity="0.4"/><path d="M112 133C95 83 108 31 140 26S166 69 162 103S143 137 131 115M109 127C91 81 107 29 135 24S174 69 161 108S142 138 125 117M117 130C97 78 107 31 140 29S172 73 164 103S139 138 127 116" stroke="#b040a0" stroke-width="1.0" opacity="0.6"/><path d="M112 132C102 80 106 29 138 26S166 73 157 108S136 132 131 115M123 127C100 81 109 35 140 33S163 73 160 109S138 135 126 115" stroke="#f05a90" stroke-width="1.0" opacity="0.6"/><path d="M115 126C95 78 105 23 139 24S169 74 163 102S142 136 128 116" stroke="#e02050" stroke-width="1.0" opacity="0.6"/><path d="M151 59Q160 59 162 61M153 88Q155 81 150 80M125 60Q119 64 118 66M152 55Q159 56 161 64M130 71Q136 73 141 78M138 92Q141 95 136 101" stroke="#50c0f0" stroke-width="1.0" opacity="0.8"/><path d="M150 58Q150 51 143 49M150 85Q150 87 143 83M127 106Q122 104 118 105" stroke="#40e060" stroke-width="1.0" opacity="0.6"/><path d="M144 79Q135 78 134 81M143 66Q144 62 140 62" stroke="#50c0f0" stroke-width="1.0" opacity="0.6"/><path d="M148 98Q155 97 156 90M124 52Q118 54 117 51M132 73Q135 67 130 60M158 93Q164 97 164 94M155 73Q150 77 145 81M132 71Q137 76 138 75M156 93Q154 96 150 94" stroke="#ff80c0" stroke-width="1.0" opacity="0.8"/><path d="M133 82Q136 83 139 75" stroke="#50c0f0" stroke-width="0.5" opacity="0.8"/><path d="M159 54Q157 60 162 60M151 101Q150 102 146 98M156 86Q157 80 156 81" stroke="#30c0c0" stroke-width="1.0" opacity="1.0"/><path d="M122 65Q127 63 125 55M154 81Q153 78 150 71M125 73Q128 75 130 71M155 70Q164 72 165 75M125 66Q122 63 112 60M126 56Q124 58 125 64" stroke="#60f0a0" stroke-width="1.0" opacity="0.6"/><path d="M145 100Q150 101 158 104M145 77Q142 74 143 69M141 76Q143 69 140 68M157 73Q150 71 150 64M159 95Q158 93 157 88M154 69Q161 73 161 70" stroke="#30c0c0" stroke-width="1.0" opacity="0.8"/><path d="M147 62Q147 57 152 53M136 83Q139 78 148 80M136 56Q137 64 134 67M142 55Q146 54 144 45M142 87Q148 91 146 92M159 105Q156 111 149 111" stroke="#30c0c0" stroke-width="0.5" opacity="0.8"/><path d="M149 75Q152 76 148 70M132 69Q135 64 139 63M153 82Q147 90 146 90M147 54Q154 58 159 59M141 77Q141 76 145 70M151 80Q156 78 160 82" stroke="#40e060" stroke-width="1.0" opacity="0.8"/><path d="M136 94Q142 96 146 91M125 97Q127 89 126 84M125 82Q126 86 133 88M146 53Q143 49 142 49" stroke="#50c0f0" stroke-width="0.5" opacity="0.6"/><path d="M153 66Q144 70 142 68M136 93Q132 93 128 92M137 69Q139 63 144 58M144 87Q144 83 139 85" stroke="#40e060" stroke-width="0.5" opacity="0.8"/><path d="M139 106Q142 105 142 101M140 68Q143 73 147 71" stroke="#40e060" stroke-width="1.0" opacity="1.0"/><path d="M149 93Q147 94 138 97M148 78Q150 78 159 86M143 63Q141 64 142 68" stroke="#30c0c0" stroke-width="1.0" opacity="0.6"/><path d="M141 79Q142 81 138 89M139 59Q139 66 146 66" stroke="#ff80c0" stroke-width="1.0" opacity="1.0"/><path d="M133 70Q135 74 138 77M159 81Q167 89 167 90M146 66Q144 67 141 66M124 106Q116 110 113 106" stroke="#50c0f0" stroke-width="1.0" opacity="1.0"/><path d="M156 88Q157 93 163 91M139 70Q143 73 144 80M131 80Q138 73 143 74M152 107Q156 108 156 102" stroke="#ff80c0" stroke-width="0.5" opacity="0.8"/><path d="M139 64Q133 63 129 55M136 61Q136 67 139 69M156 75Q153 80 150 81" stroke="#50c0f0" stroke-width="0.5" opacity="1.0"/><path d="M136 86Q140 83 138 78M136 89Q138 82 133 79" stroke="#30c0c0" stroke-width="0.5" opacity="0.6"/><path d="M160 104Q161 100 159 97" stroke="#60f0a0" stroke-width="1.0" opacity="1.0"/><path d="M123 106Q116 103 113 105M153 103Q151 104 152 111M152 97Q156 97 160 93" stroke="#60f0a0" stroke-width="0.5" opacity="0.6"/><path d="M150 53Q148 54 138 55M128 77Q127 80 123 81" stroke="#60f0a0" stroke-width="0.5" opacity="0.8"/><path d="M124 76Q118 79 116 77M140 94Q144 94 143 98M147 60Q146 64 141 59" stroke="#60f0a0" stroke-width="0.5" opacity="1.0"/><path d="M149 72Q141 67 138 64M156 60Q154 60 148 57" stroke="#40e060" stroke-width="0.5" opacity="0.6"/><path d="M124 94Q131 93 133 100" stroke="#ff80c0" stroke-width="0.5" opacity="0.6"/><path d="M124 104Q119 106 119 113M145 67Q146 63 148 62" stroke="#ff80c0" stroke-width="1.0" opacity="0.6"/><path d="M125 106Q132 107 137 114" stroke="#60f0a0" stroke-width="1.0" opacity="0.8"/><path d="M145 55Q144 51 140 46" stroke="#40e060" stroke-width="0.5" opacity="1.0"/><path d="M85 84Q81 76 78 70M78 71Q69 63 65 55M81 82Q75 68 72 59M86 72Q74 65 63 60M79 84Q75 74 68 58M91 54Q91 47 88 34M91 52Q86 51 79 42" stroke="#ff3090" stroke-width="1.0" opacity="0.6"/><path d="M80 87Q76 80 70 72M80 84Q72 82 64 75" stroke="#f050b0" stroke-width="1.0" opacity="1.0"/><path d="M86 86Q83 75 77 69M76 69Q74 56 73 49M85 61Q85 51 81 40M86 77Q77 67 68 54" stroke="#f050b0" stroke-width="1.0" opacity="0.8"/><path d="M99 74Q88 59 80 49M96 65Q93 52 91 42" stroke="#ff3090" stroke-width="0.5" opacity="0.8"/><path d="M94 82Q91 76 89 64M89 78Q82 61 73 51" stroke="#ff40a0" stroke-width="0.5" opacity="1.0"/><path d="M85 64Q80 51 79 43M97 72Q90 57 88 44M83 80Q72 76 60 68M99 74Q92 67 87 55M97 85Q95 75 92 58" stroke="#ff70c0" stroke-width="1.0" opacity="1.0"/><path d="M93 62Q88 52 89 46" stroke="#e030c0" stroke-width="0.5" opacity="0.8"/><path d="M99 67Q91 63 81 52M87 82Q82 71 70 66M96 69Q92 60 81 60" stroke="#ff40a0" stroke-width="1.0" opacity="0.6"/><path d="M98 68Q98 54 94 43M72 80Q70 72 64 56M62 85Q58 75 55 70" stroke="#ff3090" stroke-width="1.0" opacity="1.0"/><path d="M81 82Q75 74 63 63M98 68Q94 57 83 39" stroke="#f050b0" stroke-width="0.5" opacity="0.6"/><path d="M82 77Q79 63 76 54M94 61Q90 49 92 36M100 77Q87 68 68 62" stroke="#e030c0" stroke-width="1.0" opacity="0.6"/><path d="M78 75Q70 69 61 63M77 71Q68 60 64 56M91 53Q84 51 77 43M88 72Q80 62 64 57M96 68Q86 60 73 46M98 68Q91 53 90 44" stroke="#ff40a0" stroke-width="0.5" opacity="0.6"/><path d="M74 85Q70 83 63 74" stroke="#ff40a0" stroke-width="1.0" opacity="1.0"/><path d="M89 84Q78 71 70 66M89 87Q86 78 85 61M99 75Q92 67 90 54" stroke="#ff70c0" stroke-width="0.5" opacity="0.6"/><path d="M92 85Q88 81 85 70M78 86Q69 81 62 77M100 66Q99 61 96 52" stroke="#ff3090" stroke-width="1.0" opacity="0.8"/><path d="M83 82Q71 67 61 59M95 86Q89 72 87 65" stroke="#ff70c0" stroke-width="1.0" opacity="0.6"/><path d="M94 81Q91 77 85 67M94 84Q86 76 84 68M86 83Q74 75 66 65M89 85Q81 75 75 68" stroke="#ff70c0" stroke-width="0.5" opacity="0.8"/><path d="M88 79Q88 72 81 65" stroke="#f050b0" stroke-width="1.0" opacity="0.6"/><path d="M83 77Q81 64 75 56" stroke="#ff3090" stroke-width="0.5" opacity="1.0"/><path d="M69 85Q67 78 64 69M81 70Q76 62 70 59" stroke="#e030c0" stroke-width="1.0" opacity="1.0"/><path d="M77 77Q70 68 70 59" stroke="#f050b0" stroke-width="0.5" opacity="1.0"/><path d="M96 63Q85 56 75 44" stroke="#ff3090" stroke-width="0.5" opacity="0.6"/><path d="M86 74Q83 66 79 60M86 79Q77 67 69 63" stroke="#f050b0" stroke-width="0.5" opacity="0.8"/><path d="M81 86Q72 70 69 58" stroke="#ff40a0" stroke-width="0.5" opacity="0.8"/><path d="M95 64Q96 53 89 42" stroke="#ff70c0" stroke-width="1.0" opacity="0.8"/><path d="M92 81Q89 72 83 65" stroke="#ff40a0" stroke-width="1.0" opacity="0.8"/><path d="M97 60Q92 60 83 53" stroke="#e030c0" stroke-width="0.5" opacity="1.0"/><path d="M115 104Q111 96 118 92M127 38Q133 30 129 16M148 84Q151 75 161 68M137 81Q137 72 134 73" stroke="#f050b0" stroke-width="0.5" opacity="0.8"/><path d="M120 112Q117 98 121 93M142 61Q145 63 150 56M114 78Q109 67 116 64M134 105Q144 101 156 93" stroke="#60e0a0" stroke-width="0.5" opacity="0.6"/><path d="M149 95Q145 94 140 85M136 108Q133 112 119 106M142 54Q148 48 148 35" stroke="#ff3090" stroke-width="0.5" opacity="0.6"/><path d="M128 88Q116 82 109 86M122 45Q131 49 130 42M136 51Q130 43 123 38M151 90Q157 86 160 84M155 59Q162 51 170 55M127 64Q122 53 128 42M155 94Q152 93 158 85M117 48Q119 41 128 41M117 99Q105 95 100 84M124 76Q125 80 115 73" stroke="#40c0f0" stroke-width="1.0" opacity="0.8"/><path d="M117 110Q122 103 131 94M122 50Q134 46 137 36M132 47Q140 44 140 44" stroke="#f050b0" stroke-width="0.5" opacity="0.6"/><path d="M143 100Q155 90 158 92M134 47Q140 47 150 46M124 42Q130 47 133 40M121 52Q123 41 132 35M123 92Q115 89 116 84M118 48Q108 44 105 44" stroke="#60e0a0" stroke-width="0.5" opacity="0.8"/><path d="M150 91Q145 93 140 87M153 37Q142 35 134 35M155 44Q147 41 143 28M119 52Q107 45 100 49M137 110Q133 101 135 88" stroke="#ff3090" stroke-width="1.0" opacity="0.8"/><path d="M125 53Q127 51 134 41M123 70Q118 61 120 52M117 64Q108 54 107 55M140 57Q136 51 132 52" stroke="#ff70c0" stroke-width="0.5" opacity="0.8"/><path d="M121 74Q123 72 119 58M138 80Q139 76 150 71M117 77Q113 67 102 58M142 65Q143 52 137 50M119 37Q108 34 99 32M150 94Q153 93 162 90" stroke="#f050b0" stroke-width="1.0" opacity="0.8"/><path d="M149 110Q149 108 158 103M115 63Q128 66 132 56M125 90Q117 84 117 85M124 86Q123 68 132 62M117 90Q122 85 117 78M119 96Q106 89 100 88" stroke="#ff70c0" stroke-width="1.0" opacity="0.8"/><path d="M140 73Q125 71 120 73M121 100Q121 84 131 78M130 96Q122 97 123 92M152 108Q146 101 137 94M116 95Q129 92 132 94M130 88Q133 75 134 64M140 54Q143 53 141 41M129 54Q134 45 146 38" stroke="#ff3090" stroke-width="0.5" opacity="0.8"/><path d="M122 113Q124 105 127 96M132 50Q124 39 125 40M126 49Q114 47 108 48M151 84Q151 82 161 81" stroke="#e030c0" stroke-width="0.5" opacity="0.6"/><path d="M132 83Q140 79 142 80M121 43Q118 30 119 22M138 60Q136 51 141 42" stroke="#60e0a0" stroke-width="1.0" opacity="1.0"/><path d="M146 110Q155 107 171 107M121 38Q113 32 114 32" stroke="#ff70c0" stroke-width="0.5" opacity="0.6"/><path d="M157 73Q163 61 166 50M138 85Q135 80 121 82" stroke="#60e0a0" stroke-width="0.5" opacity="1.0"/><path d="M121 93Q132 89 142 90M157 45Q154 30 150 23M121 109Q110 96 110 87M124 113Q133 107 142 99M120 113Q125 103 133 104M116 97Q128 91 128 96" stroke="#ff40a0" stroke-width="1.0" opacity="0.6"/><path d="M139 77Q146 79 149 76M120 89Q127 91 122 81M116 87Q126 84 127 84M139 95Q155 94 159 85M147 105Q142 99 127 99M149 47Q162 42 169 38" stroke="#60e0a0" stroke-width="1.0" opacity="0.8"/><path d="M149 56Q150 40 154 34M135 96Q126 92 113 94M128 64Q138 59 139 57M132 103Q140 96 155 100" stroke="#ff9040" stroke-width="1.0" opacity="1.0"/><path d="M144 60Q153 59 164 53M117 113Q121 103 124 101M147 111Q147 99 145 89M143 108Q140 103 132 107" stroke="#ff9040" stroke-width="1.0" opacity="0.8"/><path d="M148 48Q143 33 146 25M153 40Q156 29 164 29M145 90Q152 85 157 85" stroke="#ff70c0" stroke-width="0.5" opacity="1.0"/><path d="M131 91Q140 94 142 87M151 78Q143 72 135 65M135 37Q130 39 126 35" stroke="#ff9040" stroke-width="1.0" opacity="0.6"/><path d="M116 56Q125 52 124 39M134 106Q119 95 115 96M126 54Q132 44 130 45M147 103Q154 105 155 95M121 61Q126 54 137 57" stroke="#e030c0" stroke-width="0.5" opacity="0.8"/><path d="M118 61Q119 56 120 39M131 67Q130 63 138 64M125 78Q132 75 136 75" stroke="#60e0a0" stroke-width="1.0" opacity="0.6"/><path d="M127 71Q119 59 116 59M139 102Q138 93 145 94" stroke="#ff40a0" stroke-width="1.0" opacity="1.0"/><path d="M142 81Q142 73 147 64M142 86Q157 87 164 85M150 108Q157 97 162 96M134 57Q126 49 121 39M151 56Q158 49 167 52" stroke="#ff9040" stroke-width="0.5" opacity="0.8"/><path d="M133 54Q116 51 109 51M156 110Q159 104 165 96M151 91Q157 90 154 82M133 38Q136 32 141 33M129 76Q138 61 141 55M125 42Q119 39 117 34" stroke="#ff40a0" stroke-width="1.0" opacity="0.8"/><path d="M128 46Q141 40 145 44M135 36Q132 19 136 13" stroke="#ff3090" stroke-width="0.5" opacity="1.0"/><path d="M136 95Q141 87 155 91M143 49Q149 44 156 49" stroke="#f050b0" stroke-width="1.0" opacity="0.6"/><path d="M155 50Q164 48 164 41M131 87Q127 79 115 72M132 92Q118 89 112 87M136 91Q134 91 127 85M149 97Q153 94 149 86M144 48Q140 40 138 37M153 82Q145 84 136 77M118 37Q119 26 125 14" stroke="#ff40a0" stroke-width="0.5" opacity="0.8"/><path d="M134 67Q125 63 126 50M142 81Q144 86 153 79" stroke="#40c0f0" stroke-width="0.5" opacity="0.6"/><path d="M144 91Q146 95 152 88M129 42Q138 38 147 27M114 42Q110 39 107 31" stroke="#e030c0" stroke-width="1.0" opacity="0.6"/><path d="M129 49Q139 48 137 36M114 77Q114 62 118 58" stroke="#40c0f0" stroke-width="0.5" opacity="1.0"/><path d="M143 81Q144 75 156 75M114 87Q125 92 138 86M135 59Q131 51 128 40" stroke="#ff70c0" stroke-width="1.0" opacity="1.0"/><path d="M124 95Q114 90 110 80" stroke="#40c0f0" stroke-width="1.0" opacity="1.0"/><path d="M142 49Q147 43 161 42M135 88Q141 84 145 71M124 109Q118 102 110 92M151 37Q146 26 141 26" stroke="#40c0f0" stroke-width="1.0" opacity="0.6"/><path d="M116 42Q105 35 101 31" stroke="#e030c0" stroke-width="1.0" opacity="1.0"/><path d="M139 62Q130 60 127 60M120 74Q128 67 134 69" stroke="#e030c0" stroke-width="1.0" opacity="0.8"/><path d="M114 77Q125 78 132 76" stroke="#f050b0" stroke-width="1.0" opacity="1.0"/><path d="M123 55Q131 53 142 46M134 43Q137 44 149 41" stroke="#40c0f0" stroke-width="0.5" opacity="0.8"/><path d="M134 76Q138 78 143 75M131 92Q127 92 114 87M129 88Q129 81 120 72" stroke="#ff70c0" stroke-width="1.0" opacity="0.6"/><path d="M145 79Q142 75 137 75M143 114Q135 115 138 107" stroke="#ff40a0" stroke-width="0.5" opacity="1.0"/><path d="M155 100Q157 90 155 90" stroke="#ff3090" stroke-width="1.0" opacity="0.6"/><path d="M145 110Q139 96 142 93" stroke="#ff3090" stroke-width="1.0" opacity="1.0"/><path d="M129 105Q132 103 129 93" stroke="#e030c0" stroke-width="0.5" opacity="1.0"/><path d="M140 41Q126 31 123 25" stroke="#ff9040" stroke-width="0.5" opacity="1.0"/><path d="M254 102Q269 98 276 102M193 122Q217 126 238 124M208 124Q225 121 243 124" stroke="#e02050" stroke-width="1.0" opacity="1.0"/><path d="M224 105Q236 104 258 97M215 124Q232 125 243 131" stroke="#c02a70" stroke-width="0.5" opacity="0.6"/><path d="M251 110Q253 112 266 107M230 111Q236 107 252 103M208 118Q212 118 223 120M199 102Q208 95 219 97" stroke="#f05a90" stroke-width="0.5" opacity="0.6"/><path d="M203 101Q223 92 234 94M207 124Q225 122 243 113" stroke="#ff9040" stroke-width="0.5" opacity="0.8"/><path d="M213 114Q227 112 250 102" stroke="#ff70c0" stroke-width="0.5" opacity="1.0"/><path d="M214 113Q229 121 251 124M230 120Q233 128 246 127M229 107Q243 97 266 94" stroke="#ff40a0" stroke-width="1.0" opacity="0.6"/><path d="M220 120Q232 117 244 125M257 108Q269 107 288 98M215 105Q229 104 233 106M240 112Q244 113 255 107M201 106Q227 106 242 110" stroke="#e04080" stroke-width="1.0" opacity="0.6"/><path d="M234 114Q243 125 254 124M233 102Q250 103 270 95M252 117Q270 124 280 126M208 119Q223 126 246 123M204 125Q224 111 236 108M238 111Q261 109 281 107M219 106Q227 116 239 114" stroke="#f050b0" stroke-width="1.0" opacity="0.8"/><path d="M254 129Q263 135 277 132M260 115Q271 115 281 125M227 128Q230 127 243 130M231 106Q257 111 274 118M252 104Q256 109 268 110M198 112Q202 117 214 114" stroke="#ff70c0" stroke-width="0.5" opacity="0.8"/><path d="M227 118Q247 123 256 124M261 124Q269 120 286 119M249 124Q263 131 284 130M233 105Q259 109 277 110M211 106Q229 100 254 97" stroke="#ff3090" stroke-width="1.0" opacity="0.8"/><path d="M237 121Q254 111 275 103M239 106Q244 108 258 108M243 105Q255 107 271 108M216 124Q227 126 233 120M202 120Q222 110 233 110M196 113Q200 114 215 120" stroke="#b040a0" stroke-width="1.0" opacity="1.0"/><path d="M231 129Q251 124 270 110M261 101Q273 98 276 95" stroke="#f0d040" stroke-width="0.5" opacity="0.8"/><path d="M242 123Q267 119 279 126M215 114Q230 106 245 109M240 101Q248 101 259 97" stroke="#c02a70" stroke-width="0.5" opacity="0.8"/><path d="M248 108Q259 112 268 108M247 121Q260 125 282 137M216 107Q229 107 240 117M250 121Q257 122 269 128" stroke="#ff4060" stroke-width="1.0" opacity="0.6"/><path d="M231 109Q240 111 247 105" stroke="#b040a0" stroke-width="0.5" opacity="0.8"/><path d="M196 121Q222 116 239 107M198 125Q221 132 233 137M226 123Q245 131 255 133M216 114Q231 111 238 103" stroke="#f03070" stroke-width="1.0" opacity="0.8"/><path d="M259 102Q267 103 281 93M206 104Q216 105 228 96M218 128Q239 128 263 135M234 130Q243 139 257 139M201 103Q220 107 236 101M234 107Q242 108 258 120" stroke="#c02a70" stroke-width="1.0" opacity="0.8"/><path d="M214 123Q227 128 247 133" stroke="#e04080" stroke-width="0.5" opacity="0.8"/><path d="M191 127Q206 122 212 127M221 102Q242 107 259 109M245 106Q258 108 266 103M192 111Q209 117 223 122" stroke="#e02050" stroke-width="1.0" opacity="0.8"/><path d="M226 130Q244 133 269 136" stroke="#40c0f0" stroke-width="1.0" opacity="0.8"/><path d="M197 104Q221 111 241 109M209 123Q231 115 245 103M214 102Q234 105 258 100" stroke="#ff4060" stroke-width="0.5" opacity="0.6"/><path d="M195 129Q208 130 212 120M254 128Q262 120 276 115M191 129Q196 132 210 129M206 121Q213 121 229 132M212 125Q217 120 229 124M246 105Q255 103 262 109M218 121Q231 116 253 120" stroke="#d02060" stroke-width="1.0" opacity="0.8"/><path d="M207 114Q215 123 232 122M248 128Q266 124 273 118M217 115Q232 118 254 126" stroke="#ff3090" stroke-width="0.5" opacity="0.8"/><path d="M253 109Q262 108 268 105M261 130Q274 130 276 122" stroke="#ff4060" stroke-width="0.5" opacity="0.8"/><path d="M200 104Q205 111 215 109" stroke="#e030c0" stroke-width="1.0" opacity="0.6"/><path d="M221 103Q238 103 262 99M249 111Q264 108 270 107" stroke="#e02050" stroke-width="0.5" opacity="1.0"/><path d="M237 108Q249 114 258 119M233 114Q247 116 252 119" stroke="#ff9040" stroke-width="1.0" opacity="0.8"/><path d="M261 110Q268 99 286 98M203 110Q224 106 236 108M223 128Q232 127 242 126M250 124Q259 117 268 119M244 119Q256 118 263 115" stroke="#40c0f0" stroke-width="1.0" opacity="0.6"/><path d="M239 114Q252 102 263 100M239 108Q248 106 263 99" stroke="#f05a90" stroke-width="1.0" opacity="0.8"/><path d="M217 128Q231 131 242 125M252 116Q264 117 282 117M223 113Q246 125 264 131M266 107Q273 98 281 98" stroke="#f0d040" stroke-width="1.0" opacity="0.8"/><path d="M228 101Q239 108 247 103M242 119Q265 109 280 106" stroke="#f050b0" stroke-width="0.5" opacity="0.6"/><path d="M221 130Q229 131 242 133M212 116Q225 120 239 120" stroke="#b040a0" stroke-width="0.5" opacity="0.6"/><path d="M251 123Q274 127 288 140M258 101Q264 107 272 108M190 108Q213 103 231 104" stroke="#e04080" stroke-width="1.0" opacity="0.8"/><path d="M223 102Q239 98 265 102M256 101Q266 99 275 105M239 112Q253 120 278 134M229 122Q246 114 261 106M258 125Q275 124 292 121M201 105Q215 104 221 98M190 102Q197 100 209 91" stroke="#c02a70" stroke-width="1.0" opacity="0.6"/><path d="M242 112Q254 114 276 115" stroke="#e030c0" stroke-width="0.5" opacity="1.0"/><path d="M235 107Q237 111 252 117M255 104Q259 98 270 98" stroke="#f03070" stroke-width="1.0" opacity="1.0"/><path d="M242 124Q254 132 273 136M215 115Q225 121 244 117" stroke="#ff9040" stroke-width="0.5" opacity="1.0"/><path d="M258 121Q276 122 290 130M260 123Q267 133 285 134M239 108Q253 101 272 104" stroke="#ff70c0" stroke-width="1.0" opacity="0.8"/><path d="M199 102Q206 102 217 107M254 128Q274 132 290 148M193 111Q205 110 220 104M250 122Q264 126 285 127M264 102Q268 103 283 94" stroke="#ff4060" stroke-width="1.0" opacity="0.8"/><path d="M195 119Q221 111 237 105M240 112Q257 99 276 97" stroke="#ff4060" stroke-width="1.0" opacity="1.0"/><path d="M233 111Q247 121 260 121M215 112Q238 107 249 110" stroke="#f0d040" stroke-width="1.0" opacity="1.0"/><path d="M208 108Q221 117 239 119M241 114Q253 109 265 115" stroke="#f050b0" stroke-width="1.0" opacity="0.6"/><path d="M259 123Q270 127 285 123M256 114Q263 110 273 104M237 115Q262 119 280 111" stroke="#c02a70" stroke-width="1.0" opacity="1.0"/><path d="M258 123Q278 124 291 120" stroke="#f05a90" stroke-width="1.0" opacity="0.6"/><path d="M255 126Q273 120 289 109M222 125Q241 128 265 119" stroke="#ff70c0" stroke-width="1.0" opacity="0.6"/><path d="M246 123Q258 118 262 119M213 104Q240 111 255 115" stroke="#f05a90" stroke-width="0.5" opacity="0.8"/><path d="M202 122Q213 120 232 125" stroke="#d02060" stroke-width="0.5" opacity="0.8"/><path d="M207 118Q227 127 246 128" stroke="#ff40a0" stroke-width="0.5" opacity="0.6"/><path d="M249 104Q254 106 267 96M261 116Q274 117 286 118" stroke="#e04080" stroke-width="0.5" opacity="0.6"/><path d="M217 110Q237 115 249 118M196 127Q219 124 236 113" stroke="#d02060" stroke-width="1.0" opacity="0.6"/><path d="M263 103Q278 97 283 95" stroke="#e030c0" stroke-width="1.0" opacity="1.0"/><path d="M224 121Q248 122 264 119" stroke="#ff3090" stroke-width="0.5" opacity="0.6"/><path d="M211 114Q225 110 247 108M218 107Q231 106 240 114" stroke="#ff3090" stroke-width="1.0" opacity="1.0"/><path d="M194 125Q217 124 228 116M205 107Q220 114 228 110M252 106Q269 96 284 96M224 120Q242 120 251 126" stroke="#e02050" stroke-width="0.5" opacity="0.6"/><path d="M246 111Q255 111 261 116M231 119Q243 119 250 119" stroke="#c02a70" stroke-width="0.5" opacity="1.0"/><path d="M191 124Q197 123 211 134M227 123Q240 119 246 124M205 127Q216 122 226 125" stroke="#b040a0" stroke-width="1.0" opacity="0.6"/><path d="M261 127Q276 129 284 137" stroke="#f03070" stroke-width="1.0" opacity="0.6"/><path d="M195 100Q218 96 234 102M197 115Q219 124 233 135" stroke="#40c0f0" stroke-width="0.5" opacity="0.8"/><path d="M213 114Q231 118 248 132M243 114Q258 113 282 102M241 101Q249 94 268 98M245 100Q264 92 284 86" stroke="#ff40a0" stroke-width="0.5" opacity="0.8"/><path d="M216 110Q234 113 257 112M253 113Q262 115 281 116" stroke="#ff40a0" stroke-width="1.0" opacity="1.0"/><path d="M236 101Q244 96 263 90M202 104Q210 107 225 113" stroke="#e04080" stroke-width="1.0" opacity="1.0"/><path d="M206 107Q224 98 249 96M200 105Q219 101 226 106" stroke="#ff9040" stroke-width="1.0" opacity="1.0"/><path d="M217 112Q227 117 232 111" stroke="#e030c0" stroke-width="1.0" opacity="0.8"/><path d="M204 125Q218 127 220 128M261 107Q280 119 290 120" stroke="#ff70c0" stroke-width="1.0" opacity="1.0"/><path d="M264 123Q278 131 284 129" stroke="#d02060" stroke-width="1.0" opacity="1.0"/><path d="M212 101Q222 111 241 113M206 120Q231 111 248 112M254 113Q259 116 269 117" stroke="#f03070" stroke-width="0.5" opacity="0.8"/><path d="M241 112Q261 120 280 132" stroke="#ff70c0" stroke-width="0.5" opacity="0.6"/><path d="M202 121Q216 115 240 120" stroke="#ff3090" stroke-width="0.5" opacity="1.0"/><path d="M233 118Q241 129 257 131M233 110Q245 108 251 110" stroke="#f03070" stroke-width="0.5" opacity="1.0"/><path d="M264 101Q278 95 287 95" stroke="#b040a0" stroke-width="1.0" opacity="0.8"/><path d="M226 105Q240 98 249 102" stroke="#f0d040" stroke-width="1.0" opacity="0.6"/><path d="M200 121Q216 111 236 107" stroke="#e030c0" stroke-width="0.5" opacity="0.8"/><path d="M218 123Q241 118 256 111" stroke="#e02050" stroke-width="1.0" opacity="0.6"/><path d="M229 129Q251 129 268 139" stroke="#40c0f0" stroke-width="0.5" opacity="1.0"/><path d="M220 113Q231 116 246 113" stroke="#f050b0" stroke-width="0.5" opacity="0.8"/><path d="M229 101Q253 98 273 99" stroke="#f050b0" stroke-width="1.0" opacity="1.0"/><path d="M237 118Q258 120 268 133" stroke="#e04080" stroke-width="0.5" opacity="1.0"/><path d="M104 209Q116 254 184 241M111 214Q117 259 188 239M99 202Q117 251 170 231M98 203Q124 250 172 233M98 200Q123 248 186 237M98 221Q116 263 176 244M104 197Q125 246 174 234M98 205Q126 252 171 238M98 201Q116 249 175 231M104 220Q122 263 182 239" stroke="#ff5010" stroke-width="1.0" opacity="0.8"/><path d="M109 215Q118 262 177 238M104 206Q111 250 191 237M108 201Q114 249 184 228M102 199Q126 249 191 236M112 216Q124 261 196 237M107 210Q113 252 179 240M99 203Q118 248 194 231M106 218Q125 259 181 242M103 211Q119 253 179 234M110 203Q113 247 192 227" stroke="#f0c040" stroke-width="1.0" opacity="0.8"/><path d="M99 222Q125 262 177 245M103 206Q121 253 176 235M105 210Q120 254 167 238M104 199Q120 246 192 227M105 202Q118 250 184 232M112 207Q115 252 170 228M108 218Q121 261 178 242M110 196Q112 247 174 230M104 221Q123 263 184 246M105 206Q113 251 188 232M111 204Q112 250 174 236M106 212Q111 257 183 233" stroke="#ffa030" stroke-width="1.0" opacity="0.8"/><path d="M101 218Q125 258 171 239M97 222Q111 263 195 236M98 207Q112 254 170 232M106 224Q114 264 177 240M107 203Q114 250 184 228" stroke="#f0c040" stroke-width="1.5" opacity="0.8"/><path d="M98 208Q123 251 181 229M103 209Q123 257 176 236M105 200Q111 250 179 234M103 203Q113 250 186 237M97 214Q111 256 178 240M110 203Q116 246 180 233M104 205Q113 250 187 228M100 201Q115 248 182 234M103 204Q115 249 190 234M103 218Q112 262 188 238M96 212Q124 255 178 231M98 203Q112 252 189 231M108 209Q122 251 194 240" stroke="#ff4020" stroke-width="1.0" opacity="0.8"/><path d="M105 203Q113 248 192 237M99 215Q114 262 188 242" stroke="#f0c040" stroke-width="1.5" opacity="0.6"/><path d="M100 219Q116 263 189 241M99 203Q118 247 194 232M104 209Q112 253 174 230" stroke="#ff3010" stroke-width="1.0" opacity="1.0"/><path d="M96 206Q111 249 194 238M97 217Q126 262 188 235M99 199Q122 247 168 231M110 205Q122 253 171 241M106 201Q124 247 188 231M105 205Q111 253 172 232M109 201Q113 248 174 231M105 203Q122 249 192 232M105 210Q121 255 189 237" stroke="#ff7020" stroke-width="1.0" opacity="0.8"/><path d="M96 220Q112 262 178 246M108 203Q113 246 193 226M99 220Q119 261 192 236M104 216Q122 258 184 235M104 213Q119 255 178 240M107 207Q114 254 179 230M110 221Q126 263 183 241M96 208Q125 255 169 233" stroke="#ff4020" stroke-width="1.0" opacity="0.6"/><path d="M105 211Q114 255 167 235M100 214Q118 258 179 241M101 219Q113 261 185 242M102 212Q126 258 175 239M111 211Q123 255 173 242" stroke="#ff6030" stroke-width="1.0" opacity="0.6"/><path d="M103 221Q119 261 178 245M102 211Q122 254 178 239M106 206Q126 252 183 233" stroke="#ff3010" stroke-width="0.5" opacity="0.8"/><path d="M110 205Q111 251 183 234M97 211Q123 256 183 234M104 213Q115 258 171 232M97 208Q113 256 168 235" stroke="#ff3010" stroke-width="1.0" opacity="0.6"/><path d="M102 222Q123 263 175 244M107 215Q113 262 167 238M96 204Q116 253 190 240M107 199Q117 248 168 232M96 198Q111 247 171 227M103 200Q112 250 169 238" stroke="#ff5010" stroke-width="1.0" opacity="0.6"/><path d="M107 198Q111 246 172 225" stroke="#ff7020" stroke-width="1.0" opacity="0.6"/><path d="M101 216Q117 258 190 244" stroke="#f0c040" stroke-width="1.5" opacity="1.0"/><path d="M104 207Q110 250 174 230M103 216Q114 260 184 243M104 207Q117 255 169 231M105 209Q123 253 182 234" stroke="#ff6030" stroke-width="1.5" opacity="0.8"/><path d="M99 211Q116 256 170 240" stroke="#ffa030" stroke-width="1.0" opacity="1.0"/><path d="M111 206Q117 252 183 232M107 203Q125 252 183 240M106 213Q115 255 178 239M97 209Q114 251 195 233M101 213Q116 258 191 236M109 209Q115 253 193 236" stroke="#ff3010" stroke-width="1.0" opacity="0.8"/><path d="M107 210Q120 256 178 241M104 212Q113 258 171 233M109 212Q123 255 170 232M105 209Q114 257 180 234M108 205Q114 249 173 235M107 210Q123 256 172 239M97 215Q124 259 168 241M100 206Q122 255 187 241M110 214Q114 257 167 237M96 207Q124 253 196 238M104 201Q112 247 184 227M107 222Q121 264 175 244" stroke="#ff6030" stroke-width="1.0" opacity="0.8"/><path d="M107 210Q120 258 171 234M109 219Q111 260 172 240M102 199Q116 247 191 236M96 198Q114 247 193 234M110 215Q113 258 169 240M101 202Q120 247 170 235M109 215Q113 260 181 239" stroke="#ff4020" stroke-width="1.0" opacity="1.0"/><path d="M103 216Q116 260 173 240M105 211Q116 259 179 233M105 216Q117 263 175 236" stroke="#ff6030" stroke-width="1.0" opacity="1.0"/><path d="M96 202Q117 250 195 239" stroke="#ff5010" stroke-width="0.5" opacity="0.6"/><path d="M98 212Q125 257 169 236" stroke="#ff4020" stroke-width="0.5" opacity="0.8"/><path d="M100 221Q114 264 183 247" stroke="#ff6030" stroke-width="0.5" opacity="0.6"/><path d="M97 215Q121 261 175 238M96 203Q112 248 193 231" stroke="#f0c040" stroke-width="1.0" opacity="0.6"/><path d="M101 209Q120 256 169 231" stroke="#ff4020" stroke-width="1.5" opacity="0.8"/><path d="M112 198Q113 247 190 233M105 208Q124 254 176 241M97 203Q117 248 184 237" stroke="#ff7020" stroke-width="1.0" opacity="1.0"/><path d="M104 220Q112 261 193 237M98 204Q113 249 195 232M109 207Q111 253 175 229M107 204Q125 250 182 233M99 213Q120 255 184 240" stroke="#ffa030" stroke-width="1.5" opacity="0.8"/><path d="M97 205Q115 253 195 237" stroke="#ff3010" stroke-width="0.5" opacity="1.0"/><path d="M101 215Q116 261 184 243M104 216Q125 258 187 239" stroke="#ff3010" stroke-width="0.5" opacity="0.6"/><path d="M111 207Q116 253 179 230M111 202Q114 251 181 233M107 204Q120 253 168 237" stroke="#f0c040" stroke-width="1.0" opacity="1.0"/><path d="M107 216Q120 257 184 236" stroke="#ffa030" stroke-width="1.0" opacity="0.6"/><path d="M112 206Q120 252 181 237" stroke="#f0c040" stroke-width="0.5" opacity="0.8"/><path d="M107 204Q114 249 187 234" stroke="#ff6030" stroke-width="1.5" opacity="1.0"/><path d="M105 198Q125 247 181 232" stroke="#ffa030" stroke-width="1.5" opacity="0.6"/><path d="M96 211Q121 257 186 235" stroke="#ff4020" stroke-width="0.5" opacity="0.6"/><path d="M97 223Q121 262 182 235M112 209Q121 253 189 237" stroke="#ff4020" stroke-width="1.5" opacity="1.0"/><path d="M106 210Q111 254 176 237M99 204Q118 253 170 231" stroke="#ff7020" stroke-width="1.5" opacity="0.8"/><path d="M105 207Q115 252 173 231M101 220Q119 262 182 238" stroke="#ff5010" stroke-width="1.5" opacity="0.8"/><path d="M96 210Q114 254 190 237M105 214Q123 256 193 240" stroke="#ff5010" stroke-width="1.5" opacity="0.6"/><path d="M102 217Q119 258 181 234" stroke="#ffa030" stroke-width="0.5" opacity="0.6"/><path d="M102 201Q114 250 171 228" stroke="#ff7020" stroke-width="0.5" opacity="0.8"/></g></symbol></defs></svg>

<!-- menu row -->
<div id="menu">
<!-- hamburger -->
<svg style="left:0;top:0" width="1" height="1"><g stroke="#333" stroke-width="1.3"><line x1="12" y1="7.5" x2="26" y2="7.5"/><line x1="12" y1="11.5" x2="26" y2="11.5"/><line x1="12" y1="15.5" x2="26" y2="15.5"/></g>
<polyline points="64.5,10 68.5,14 72.5,10" fill="none" stroke="#888" stroke-width="1.1"/></svg>
<div class="t" style="left:32px;top:5px;font-size:13px">文件</div>
<div class="sep" style="left:82px;top:0;height:24px;background:#d6d6d6"></div>
<svg style="left:0;top:0" width="1" height="1" fill="none" stroke-linejoin="round" stroke-linecap="round">
 <!-- folder -->
 <path d="M93 17 V7.5 h4.5 l1.5 1.5 h6 v2.5" stroke="#333" stroke-width="1.2"/>
 <path d="M93 17.5 L95.5 11.5 H107.5 L105 17.5 Z" stroke="#333" stroke-width="1.2"/>
 <!-- save -->
 <path d="M118.5 6 H128.5 L130.5 8 V17.5 H118.5 Z" stroke="#b5b5b5" stroke-width="1.2"/>
 <path d="M121 6 V9 H127.5 V6 M120.5 17.5 V12 H128.5 V17.5" stroke="#b5b5b5" stroke-width="1.1"/>
 <!-- print -->
 <path d="M146 9 V6 H154 V9" stroke="#333" stroke-width="1.2"/>
 <path d="M146 15.5 H144 V9 H156.5 V15.5 H154" stroke="#333" stroke-width="1.2"/>
 <path d="M146 12.5 H154 V17.5 H146 Z" stroke="#333" stroke-width="1.2"/>
 <!-- undo -->
 <path d="M171 8 L169.5 11.5 L173 12" stroke="#b5b5b5" stroke-width="1.2"/>
 <path d="M169.8 11.3 C172 7 179.5 7.5 179.5 12.5 C179.5 15 177.5 16.5 176 17.8" stroke="#b5b5b5" stroke-width="1.2"/>
 <!-- redo -->
 <path d="M203.5 8 L205 11.5 L201.5 12" stroke="#b5b5b5" stroke-width="1.2"/>
 <path d="M204.7 11.3 C202.5 7 195 7.5 195 12.5 C195 15 197 16.5 198.5 17.8" stroke="#b5b5b5" stroke-width="1.2"/>
 <!-- convert to word -->
 <path d="M220.5 11 V5.5 H228.5 L231.5 8.5 V18.5 H224" stroke="#333" stroke-width="1.3"/>
 <path d="M222.8 9.5 V13.8 L225.5 11.5 L228.2 13.8 V9.5" stroke="#333" stroke-width="0.9"/>
 <path d="M217.5 13.5 V16.5 H222.5 M220.5 14.5 L222.5 16.5 L220.5 18.5" stroke="#333" stroke-width="1.2"/>
 <!-- dropdown -->
 <path d="M247 9.5 H254 M247.5 12 L250.5 15 L253.5 12" stroke="#333" stroke-width="1.2"/>
</svg>
<div class="a" style="left:270px;top:2px;width:44px;height:20px;border-radius:10px;background:#cf4a4f"></div>
<div class="t" style="left:279px;top:5px;font-size:13px;color:#fff">开始</div>
<div class="t" style="left:329px;top:5px;font-size:13px">插入</div>
<div class="t" style="left:379px;top:5px;font-size:13px">批注</div>
<div class="t" style="left:429px;top:5px;font-size:13px">编辑</div>
<div class="t" style="left:479px;top:5px;font-size:13px">页面</div>
<div class="t" style="left:529px;top:5px;font-size:13px">保护</div>
<div class="t" style="left:579px;top:5px;font-size:13px">特色应用</div>
<svg style="left:0;top:0" width="1" height="1" fill="none" stroke="#888" stroke-width="1.2"><circle cx="662" cy="12.5" r="5.5"/><line x1="666" y1="16.5" x2="670.5" y2="20.5"/></svg>
<div class="t" style="left:677px;top:5px;font-size:13px">点此查找文本</div>
<svg style="left:0;top:0" width="1" height="1" fill="#666"><circle cx="760" cy="8" r="1"/><circle cx="760" cy="13" r="1"/><circle cx="760" cy="18" r="1"/></svg>
</div>

<!-- toolbar -->
<div id="toolbar">
<div class="hl" style="left:12px;top:59px;width:52px;height:24px"></div>
<svg style="left:0;top:0" width="1" height="1" fill="none" stroke="#222" stroke-width="1.3" stroke-linejoin="round" stroke-linecap="round">
 <!-- hand -->
 <path d="M16.2 47 C15.2 45.6 16.6 44.2 18.1 45.1 L20.8 46.6 L17.6 41.8 C16.9 40.4 18.7 39.3 19.6 40.5 L22.6 44.3 L21.5 39 C21.3 37.5 23.4 37.2 23.7 38.7 L24.6 43.6 L25.4 38.8 C25.7 37.4 27.7 37.5 27.6 39 L27.3 44.2 L29.6 41 C30.4 40 31.9 40.5 31.5 41.8 L30.3 48.4 C29.6 51.4 25.2 52.6 22.6 51.4 Z" stroke-width="1.3"/>
 <!-- cursor -->
 <path d="M19.5 63.5 V77.5 L22.5 74.5 L24.5 78.5 L26 77.8 L24.2 73.8 H29.2 Z" stroke-width="1.2"/>
</svg>
<div class="t" style="left:36px;top:38px">手型</div>
<div class="t" style="left:36px;top:64px;color:#707070">选择</div>
<div class="sep" style="left:77px;top:31px;height:53px"></div>

<svg style="left:0;top:0" width="1" height="1" fill="none" stroke-width="1.3" stroke-linejoin="round" stroke-linecap="round">
 <!-- PDF to office -->
 <path d="M118.1 43.6 V36.4 H123 Q126.6 36.4 126.6 40.4" stroke="#333" stroke-width="1.2"/>
 <path d="M121.9 45.4 H116.8 Q114.4 45.4 114.4 47.8 Q114.4 50.3 116.8 50.3 H118.4 V47.4" stroke="#333" stroke-width="1.2"/>
 <path d="M114.4 52.4 V56.4 H121.6 M119.6 54.2 L121.8 56.4 L119.6 58.6" stroke="#333" stroke-width="1.2"/>
 <path d="M122.5 53.6 V41.5 H134.5 L136.5 43.5 V59.5 H122.5" stroke="#d0393f" stroke-width="1.2"/>
 <path d="M134.3 41.7 V43.7 H136.3" stroke="#d0393f" stroke-width="1.2"/>
 <path d="M126.5 48.2 V53.6 L130 50.3 L133.6 53.6 V48.2" stroke="#d0393f" stroke-width="1.1"/>
 <!-- PDF to image -->
 <path d="M201.4 39.6 V38.8 Q201.4 37.4 202.8 37.4 H219.2 Q220.6 37.4 220.6 38.8 V56.2 Q220.6 57.6 219.2 57.6 H202.8 Q201.4 57.6 201.4 56.2 V50.3" stroke="#333" stroke-width="1.2"/>
 <path d="M201.4 52.6 L206.1 49.5 L210.3 53.4 L214.5 50.3 L220.6 55.7" stroke="#333" stroke-width="1.2" stroke-linejoin="miter"/>
 <circle cx="214.5" cy="43.4" r="1.9" stroke="#333" stroke-width="1.1"/>
 <path d="M199.2 44.3 H205.6 M202.6 41.5 L205.6 44.3 L202.6 47.1" stroke="#d0393f" stroke-width="1.1"/>
 <!-- play -->
 <circle cx="266.4" cy="47.5" r="11.2" stroke="#333" stroke-width="1.2"/>
 <path d="M263.7 41.7 V53.3 L271.6 47.5 Z" stroke="#d0393f" fill="#f0e2e3" stroke-width="1.2"/>
 <!-- reading mode -->
 <path d="M318.5 41.2 Q317 38.5 315 38.5 H309.5 Q307.5 38.5 307.5 40.5 V54.4 Q307.5 56.4 309.5 56.4 H317 L318.5 57.6 L320 56.4 H327.4 Q329.4 56.4 329.4 54.4 V40.5 Q329.4 38.5 327.4 38.5 H322 Q320 38.5 318.5 41.2 V53.6" stroke="#4a5878" stroke-width="1.2"/>
 <path d="M311.5 44.5 H314.5 M311.5 48.5 H314.5 M322.3 44.5 H325.3 M322.3 48.5 H325.3" stroke="#e04848" stroke-width="1.1"/>
</svg>
<div class="t" style="left:88px;top:65px"><span class="L">PDF</span><span style="letter-spacing:0">转</span><span class="L">Office</span></div>
<svg style="left:0;top:0" width="1" height="1"><path d="M159 70 H164 L161.5 73 Z" fill="#888"/></svg>
<div class="t" style="left:182px;top:65px"><span class="L">PDF</span>转图片</div>
<div class="t" style="left:254px;top:65px">播放</div>
<div class="t" style="left:295px;top:65px">阅读模式</div>
<div class="sep" style="left:353px;top:31px;height:53px"></div>

<svg style="left:0;top:0" width="1" height="1" fill="none" stroke-width="1.3" stroke-linecap="round">
 <circle cx="373.5" cy="45.3" r="8.3" stroke="#d0393f"/>
 <path d="M369.5 45.3 H377.5" stroke="#d0393f"/>
 <path d="M379.8 51.6 L386 57.8" stroke="#333" stroke-width="2.6"/>
 <path d="M379.8 51.6 L386 57.8" stroke="#f3f3f3" stroke-width="0.9"/>
 <circle cx="529.7" cy="45.7" r="8.3" stroke="#d0393f"/>
 <path d="M525.7 45.7 H533.7 M529.7 41.7 V49.7" stroke="#d0393f"/>
 <path d="M536 52 L542 58" stroke="#333" stroke-width="2.6"/>
 <path d="M536 52 L542 58" stroke="#f3f3f3" stroke-width="0.9"/>
</svg>
<div class="t" style="left:363px;top:65px">缩小</div>
<div class="a" style="left:399px;top:38px;width:110px;height:24px;border:1px solid #a9a9a9;border-radius:3px;background:#f7f7f7;overflow:hidden">
 <div class="a" style="left:95px;top:0;width:14px;height:22px;background:#e9e9e9"></div>
</div>
<svg style="left:0;top:0" width="1" height="1"><path d="M499.5 49.5 H504.5 L502 52.5 Z" fill="#888"/></svg>
<div class="t" style="left:406px;top:43px;color:#333"><span class="L">72.92%</span></div>
<div class="t" style="left:520px;top:65px">放大</div>

<svg style="left:0;top:0" width="1" height="1" fill="none" stroke-width="1.2" stroke-linejoin="round">
 <!-- actual size -->
 <path d="M576 37.5 H589.8 L592.5 40.2 V57.2 Q592.5 58.5 591.2 58.5 H576 Q574.7 58.5 574.7 57.2 V38.8 Q574.7 37.5 576 37.5 Z" stroke="#333" stroke-width="1.2"/>
 <path d="M589.6 37.8 V40.4 H592.2" stroke="#333" fill="#333" stroke-width="1"/>
 <path d="M578.3 46.3 L579.5 45.2 V52.8 M587.3 46.3 L588.5 45.2 V52.8" stroke="#d0393f" stroke-width="1.2"/>
 <path d="M583.8 47.4 V48.2 M583.8 50.6 V51.4" stroke="#d0393f" stroke-width="1.2"/>
 <!-- fit width -->
 <path d="M625.6 37.5 H634.8 L637.3 40 V50 Q637.3 51.3 636 51.3 H625.6 Q624.3 51.3 624.3 50 V38.8 Q624.3 37.5 625.6 37.5 Z" stroke="#333" stroke-width="1.2"/>
 <path d="M634.6 37.8 V40.2 H637" stroke="#333" fill="#333" stroke-width="0.9"/>
 <path d="M628.3 42.8 Q626.6 44.5 628.3 46.2 M634 42.8 Q635.7 44.5 634 46.2" stroke="#e04848" stroke-width="1"/>
</svg>
<div class="hl" style="left:619px;top:59px;width:76px;height:24px"></div>
<svg style="left:0;top:0" width="1" height="1" fill="none" stroke-linejoin="round" stroke-linecap="round">
 <!-- fit page -->
 <path d="M625.6 63.5 H634.8 L637.3 66 V76 Q637.3 77.3 636 77.3 H625.6 Q624.3 77.3 624.3 76 V64.8 Q624.3 63.5 625.6 63.5 Z" stroke="#333" stroke-width="1.2"/>
 <path d="M634.6 63.8 V66.2 H637" stroke="#333" fill="#333" stroke-width="0.9"/>
 <path d="M629 66.2 Q631 65 633 66.2 M634.9 68.3 Q636.1 70.3 634.9 72.3 M633 74.3 Q631 75.5 629 74.3 M627.1 72.3 Q625.9 70.3 627.1 68.3" stroke="#e85050" stroke-width="1"/>
</svg>
<div class="t" style="left:559px;top:65px">实际大小</div>
<div class="t" style="left:643px;top:38px">适合宽度</div>
<div class="t" style="left:643px;top:64px;color:#707070">适合页面</div>
<div class="sep" style="left:700px;top:31px;height:53px"></div>

<svg style="left:0;top:0" width="1" height="1" fill="none" stroke="#333" stroke-width="1.3" stroke-linejoin="round" stroke-linecap="round">
 <!-- clockwise -->
 <path d="M726.6 57.5 A10.2 10.2 0 1 1 734.3 55" stroke-width="1.2"/>
 <path d="M733.6 52.2 V56.4 H737.7" stroke-width="1.2" stroke-linecap="butt" stroke-linejoin="miter"/>
 <!-- counter clockwise -->
 <path d="M782.4 57.5 A10.2 10.2 0 1 0 774.7 55" stroke-width="1.2"/>
 <path d="M775.4 52.2 V56.4 H771.3" stroke-width="1.2" stroke-linecap="butt" stroke-linejoin="miter"/>
 <!-- rotate doc -->
 <path d="M831.5 56.2 H829 Q827.5 56.2 827.5 54.7 V40.8 Q827.5 39.3 829 39.3 H838.5 L841.5 42.3 V46.4" />
 <path d="M833 46.4 H845.6 L848.5 49.3 V58 Q848.5 59.4 847 59.4 H833 Q831.5 59.4 831.5 58 V47.9 Q831.5 46.4 833 46.4 Z" />
 <path d="M838.5 39.3 V42.3 H841.5 M845.6 46.4 V49.3 H848.5" stroke-width="1.1"/>
 <path d="M841.6 38.4 H846.3 Q848.4 38.4 848.4 40.6 V45" stroke="#d0393f" stroke-width="1.2"/>
 <path d="M843.5 36.3 L841.4 38.4 L843.5 40.5 M846.3 43.2 L848.4 45.3 L850.5 43.2" stroke="#d0393f" stroke-width="1.2"/>
</svg>
<div class="t" style="left:711px;top:65px">顺时针</div>
<div class="t" style="left:763px;top:65px">逆时针</div>
<div class="t" style="left:815px;top:65px">旋转文档</div>
<div class="sep" style="left:873px;top:31px;height:53px"></div>

<svg style="left:0;top:0" width="1" height="1" fill="none" stroke="#333" stroke-width="1.2" stroke-linecap="round">
 <path d="M905 39 L896 48 L905 57"/>
 <path d="M1065 39 L1074 48 L1065 57"/>
</svg>
<div class="t" style="left:883px;top:65px">上一页</div>
<div class="a" style="left:934px;top:38px;width:60px;height:21px;background:#fff"></div>
<div class="t" style="left:934px;top:40px;width:60px;text-align:center;color:#222;font-size:13.5px;letter-spacing:0">15</div>
<div class="t" style="left:996px;top:40px;color:#777"><span style="font-size:13px;letter-spacing:0.6px">/354</span>页</div>
<div class="t" style="left:1050px;top:65px">下一页</div>
<div class="sep" style="left:1096px;top:31px;height:53px"></div>

<div class="hl" style="left:1103px;top:33px;width:58px;height:50px"></div>
<div class="hl" style="left:1167px;top:33px;width:52px;height:24px"></div>
<svg style="left:0;top:0" width="1" height="1" fill="none" stroke="#333" stroke-width="1.3" stroke-linejoin="round">
 <rect x="1122.6" y="37.6" width="17.8" height="6.6" rx="1"/>
 <path d="M1123.6 46.8 H1137 L1140.4 50.2 V57.6 Q1140.4 58.4 1139.6 58.4 H1123.4 Q1122.6 58.4 1122.6 57.6 V47.6 Q1122.6 46.8 1123.4 46.8" />
 <path d="M1137 47 V50 H1140.2" fill="#333" stroke-width="1"/>
 <path d="M1173.4 37.6 H1183.4 L1185.5 39.7 V51.4 Q1185.5 52.3 1184.6 52.3 H1173.4 Q1172.6 52.3 1172.6 51.4 V38.4 Q1172.6 37.6 1173.4 37.6 Z" stroke-width="1.2"/>
 <path d="M1183.2 37.8 V39.9 H1185.3" fill="#333" stroke-width="0.9"/>
 <path d="M1175.5 42.5 H1182.6 M1175.5 45.5 H1180.6 M1175.5 48.5 H1182.6" stroke-width="1.1"/>
 <path d="M1172.3 63.6 H1175.4 L1177.3 65.5 V76.8 Q1177.3 77.5 1176.6 77.5 H1172.3 Q1171.6 77.5 1171.6 76.8 V64.3 Q1171.6 63.6 1172.3 63.6 Z M1180.3 63.6 H1183.6 L1185.5 65.5 V76.8 Q1185.5 77.5 1184.8 77.5 H1180.3 Q1179.6 77.5 1179.6 76.8 V64.3 Q1179.6 63.6 1180.3 63.6 Z" stroke-width="1.2"/>
 <path d="M1173.5 69.5 H1175.5 M1173.5 72.5 H1175.5 M1181.5 69.5 H1183.5 M1181.5 72.5 H1183.5" stroke="#888" stroke-width="0.9"/>
 <!-- moon -->
 <path d="M1258 37.8 C1252.5 39.2 1249.9 44 1250.4 48.6 C1251 53.4 1255.3 56.6 1260 56.5 C1264.4 56.4 1268 53.6 1269.3 49.6 C1269.6 48.2 1268.6 47.4 1267.5 48 C1266.1 48.9 1264.6 49.4 1263 49.3 C1259.6 49.1 1257 46.1 1257.1 42.6 C1257.2 41.2 1257.8 40.1 1258.7 39.3 C1259.4 38.6 1259 37.6 1258 37.8 Z" stroke-width="1.2"/>
</svg>
<div class="t" style="left:1108px;top:65px;color:#707070">连续阅读</div>
<div class="t" style="left:1191px;top:39px;color:#707070">单页</div>
<div class="t" style="left:1191px;top:64px">双页</div>
<svg style="left:0;top:0" width="1" height="1"><path d="M1219 71 H1224 L1221.5 74 Z" fill="#888"/><path d="M1271 71 H1276 L1273.5 74 Z" fill="#888"/></svg>
<div class="sep" style="left:1233px;top:31px;height:53px"></div>
<div class="t" style="left:1243px;top:65px">背景</div>
<div class="t" style="left:1293px;top:65px">划</div>
</div>

<!-- content -->
<div class="a" style="left:0;top:86px;width:40px;height:775px;background:#e8e8e8"></div>
<div class="a" style="left:40px;top:86px;width:278px;height:775px;background:#f3f3f3"></div>
<div class="a" style="left:318px;top:86px;width:987px;height:775px;background:#e6e6e6"></div>

<!-- left strip icons -->
<div class="hl" style="left:2px;top:124px;width:32px;height:32px;border-radius:5px"></div>
<svg style="left:0;top:0" width="1" height="1" fill="none" stroke="#333" stroke-width="1.2" stroke-linejoin="round" stroke-linecap="round">
 <rect x="10.5" y="96.5" width="14" height="14" rx="1.5"/>
 <path d="M13.5 100.5 H14 M13.5 103.5 H14 M13.5 106.5 H14 M16 100.5 H21.5 M16 103.5 H21.5 M16 106.5 H21.5"/>
 <rect x="11.5" y="132.5" width="13" height="10.8" rx="0.8"/>
 <circle cx="15.5" cy="136.3" r="1" stroke-width="1"/>
 <path d="M14.9 143.3 L19.4 137.4 L24.4 141.2" stroke-linejoin="miter"/>
 <path d="M11.5 148 V146 Q11.5 145.4 12.1 145.4 H23.8 Q24.4 145.4 24.4 146 V148"/>
 <path d="M11.6 182.3 L12.8 173.6 L18.6 170.2 L22.8 177.2 L16.2 182.9 Z"/>
 <path d="M18.6 170.2 L21.4 168.6 L25.4 175.3 L22.8 177.2"/>
 <circle cx="16.3" cy="178.4" r="0.7" fill="#333"/>
 <path d="M13.4 209 V204.8 H23.6 L26 207.2 V218.6 H16.8"/>
 <path d="M16.8 209.2 L18.2 213.6 L20.2 210.8 L22.1 213.6 L23.5 209.2" stroke-width="1" stroke-linejoin="miter"/>
 <path d="M10.6 212.2 V215.8 H15.3 M13.4 213.9 L15.3 215.8 L13.4 217.7"/>
</svg>

<!-- thumbnail panel header -->
<div class="t" style="left:58px;top:109px;font-size:13px;letter-spacing:0.2px;color:#333">缩略图</div>
<svg style="left:0;top:0" width="1" height="1" fill="none" stroke="#333" stroke-width="1.1" stroke-linejoin="round">
 <rect x="117.5" y="110.5" width="11" height="10"/>
 <path d="M117.5 117.5 L120.2 114.6 L123.2 117.4 L126.2 115.8 L128.5 117.5" stroke-linejoin="miter"/>
 <circle cx="125.2" cy="112.8" r="0.6" fill="#333"/>
 <path d="M141 116.5 H161" stroke="#444" stroke-width="1.1"/>
 <path d="M173 116.5 H235 M187.5 113.5 V119.5" stroke="#bbb" stroke-width="1"/>
 <circle cx="167" cy="116" r="5.8" fill="#eeeeee" stroke="#444" stroke-width="1.1"/>
 <rect x="245.5" y="109.5" width="15" height="13"/>
 <path d="M245.5 119.5 L249.3 115.3 L253.3 119 L257.3 116.6 L260.5 119" stroke-linejoin="miter"/>
 <circle cx="256.5" cy="112.8" r="0.8" fill="#333"/>
 <path d="M284 110 L294.5 120.5 M294.5 110 L284 120.5" stroke="#555" stroke-width="1.1"/>
</svg>
<div class="a" style="left:49px;top:137px;width:260px;height:1px;background:#8e8e98"></div>

<!-- thumbnails -->
<div class="a" style="left:96px;top:148px;width:146px;height:54px;background:#fff"></div>
<div class="t" style="left:96px;top:214px;width:140px;text-align:center;font-size:13px;letter-spacing:0;color:#222">14</div>

<div class="a" style="left:94px;top:237px;width:151px;height:194px;border:2px solid #ea6b6f;border-radius:2px;background:#fff;overflow:hidden">
 <div class="a" style="left:-1.2px;top:-1.5px;width:594px;height:771px;transform:scale(0.251);transform-origin:0 0" id="tpage">
<div class="pt" style="-webkit-text-stroke:1.5px #222;left:0;top:99px;width:594px;text-align:center;font-size:30px;line-height:36px">攻克大脑</div>
<div class="pt tb b" style="left:71px;top:166px;font-size:11px;line-height:18px;font-weight:500;letter-spacing:-0.15px">大脑是世界上最复杂的“机器”。多个国家将投入数十亿美元，研发新工具、新技术，在未来几</div>
<div class="pt tb b" style="left:71px;top:188px;font-size:11px;line-height:18px;font-weight:500;letter-spacing:-0.15px">十年里彻底破解大脑的秘密。</div>
<div class="pt tb" style="left:71px;top:242px;font-size:14px;line-height:20px;letter-spacing:0.3px;word-spacing:2px">撰文<span style="font-size:16px;word-spacing:0"> / </span>拉斐尔·尤斯蒂（<span class="s15">Rafael Yuste</span><span style="margin-left:1px">）</span></div>
<div class="pt tb" style="left:113px;top:273px;font-size:14px;line-height:20px;letter-spacing:0.3px;word-spacing:0">乔治·邱奇（<span class="s15">George M. Church</span><span style="margin-left:1px">）</span></div>
<div class="pt tb" style="left:71px;top:304px;font-size:14px;line-height:20px;letter-spacing:0.3px;word-spacing:2px">翻译<span style="font-size:16px;word-spacing:0"> / </span>冯泽君</div>
<svg style="left:132px;top:332px" width="332" height="272"><use href="#brain"/></svg>
<div class="a" style="left:70px;top:610.8px;width:455px;height:6px;border-top:5px solid #111;border-bottom:1px solid #777"></div>
<div class="a" style="left:70px;top:610.5px;width:1.2px;height:4px;background:#111"></div>
<div class="a" style="left:523.8px;top:610.5px;width:1.2px;height:4px;background:#111"></div>
<div class="pt tb" style="left:0;top:622px;width:594px;text-align:center;font-size:15px;line-height:22px">精彩速览</div>
<div class="pt tb" style="left:99px;top:653px;font-size:15px;line-height:22px;letter-spacing:-0.4px">大脑及其产生意识的方式，仍是最大的科学谜团之一。要更好地理</div>
<div class="pt tb" style="left:71px;top:676px;font-size:15px;line-height:22px;letter-spacing:-0.4px">解大脑的运作机制，神经科学家需要新的工具来分析神经回路的功能。</div>
</div>
 <div class="a" style="left:0;top:0;width:147px;height:190px;border:1px solid #222"></div>
</div>
<div class="a" style="left:238px;top:425px;width:4.5px;height:4.5px;background:#333"></div>
<div class="t" style="left:96px;top:441px;width:140px;text-align:center;font-size:13px;letter-spacing:0;color:#e8689c">15</div>

<div class="a" style="left:96px;top:466px;width:146px;height:190px;background:#fff"></div>
<div class="a" style="left:95px;top:469px;width:594px;height:200px;transform:scale(0.251);transform-origin:0 0">
<div class="pt tb" style="left:99px;top:62px;font-size:15px;line-height:22px;letter-spacing:-0.4px">神经科学家需要新的工具来分析神经回路的活动模式，才能真正理</div>
<div class="pt tb" style="left:71px;top:85px;font-size:15px;line-height:22px;letter-spacing:-0.4px">大脑如何产生思维和意识，新的工具需要全新技术来探索。</div>
</div>
<div class="a" style="left:113px;top:496px;width:113px;height:1.2px;background:#111"></div>
<div class="t" style="left:96px;top:668px;width:140px;text-align:center;font-size:13px;letter-spacing:0;color:#222">16</div>

<div class="a" style="left:96px;top:693px;width:146px;height:156px;background:#fff"></div>
<div class="a" style="left:113px;top:710px;width:113px;height:139px;background:#07080c;overflow:hidden"><svg style="left:0;top:0" width="113" height="139" viewBox="0 0 113 139">
<defs><filter id="g17"><feGaussianBlur stdDeviation="2.5"/></filter><filter id="g17b"><feGaussianBlur stdDeviation="1"/></filter>
<radialGradient id="c17" cx="0.5" cy="0.5" r="0.5"><stop offset="0" stop-color="#f0d8c8"/><stop offset="0.5" stop-color="#c07080"/><stop offset="1" stop-color="#402840"/></radialGradient></defs>
<g filter="url(#g17)">
 <ellipse cx="18" cy="110" rx="22" ry="22" fill="#0e2838" opacity="0.9"/>
 <ellipse cx="88" cy="128" rx="14" ry="18" fill="#0e2838" opacity="0.8"/>
 <path d="M35 35 C60 18 100 20 113 25 V60 C95 45 70 40 50 50 Z" fill="#807888" opacity="0.55"/>
 <path d="M0 10 C10 0 25 0 30 5 L10 30 Z" fill="#604070" opacity="0.5"/>
</g>
<g filter="url(#g17b)">
 <ellipse cx="48" cy="80" rx="44" ry="36" fill="#504858" opacity="0.9"/>
 <ellipse cx="50" cy="84" rx="32" ry="24" fill="#a07078" opacity="0.9"/>
 <ellipse cx="52" cy="86" rx="22" ry="16" fill="#d0a098"/>
 <ellipse cx="74" cy="58" rx="12" ry="12" fill="#201418"/>
 <path d="M24 0 L33 0 L40 45 L33 46 Z" fill="#d0b8c8" opacity="0.5"/>
 <path d="M58 0 L65 0 L60 45 L53 45 Z" fill="#d0b8c8" opacity="0.45"/>
 <path d="M85 0 L94 0 L65 48 L58 46 Z" fill="#e0d0d8" opacity="0.55"/>
 <path d="M52 105 L60 105 L62 139 L53 139 Z" fill="#d8c8d0" opacity="0.55"/>
 <path d="M75 95 L113 118 L113 128 L72 102 Z" fill="#d8c8d0" opacity="0.5"/>
 <path d="M28 105 L35 108 L15 139 L5 139 Z" fill="#a0b8c8" opacity="0.35"/>
</g>
<g fill="none" stroke-linecap="round"><path d="M8.9 75.5l0.3 -2.9" stroke="#c07090" stroke-width="0.8" opacity="0.8"/><path d="M37.8 51.9l0.0 4.8" stroke="#60b0d0" stroke-width="0.8" opacity="0.8"/><path d="M59.3 58.6l-2.8 -3.4" stroke="#d090a0" stroke-width="0.8" opacity="0.8"/><path d="M33.0 51.9l4.6 1.9" stroke="#a06080" stroke-width="0.8" opacity="0.8"/><path d="M38.9 54.1l-2.5 -0.6" stroke="#805070" stroke-width="0.8" opacity="0.8"/><path d="M85.1 97.2l-3.2 -2.3" stroke="#5090c0" stroke-width="0.8" opacity="0.8"/><path d="M36.4 59.0l4.7 0.5" stroke="#d090a0" stroke-width="0.8" opacity="0.8"/><path d="M41.1 85.9l3.0 -0.8" stroke="#c06070" stroke-width="0.8" opacity="0.8"/><path d="M20.7 102.4l-2.5 -0.9" stroke="#5090c0" stroke-width="0.8" opacity="0.8"/><path d="M78.8 73.1l2.0 0.9" stroke="#c07090" stroke-width="0.8" opacity="0.8"/><path d="M41.9 110.7l2.9 -2.1" stroke="#d090a0" stroke-width="0.8" opacity="0.8"/><path d="M48.0 100.0l-1.5 2.6" stroke="#ffe0d0" stroke-width="0.8" opacity="0.8"/><path d="M86.1 81.9l-0.1 -2.1" stroke="#c07090" stroke-width="0.8" opacity="0.8"/><path d="M37.9 81.4l2.6 1.3" stroke="#e0a090" stroke-width="0.8" opacity="0.8"/><path d="M89.8 77.2l-3.8 -0.6" stroke="#60b0d0" stroke-width="0.8" opacity="0.8"/><path d="M67.8 99.2l1.8 4.1" stroke="#d090a0" stroke-width="0.8" opacity="0.8"/><path d="M91.1 79.0l0.5 2.3" stroke="#805070" stroke-width="0.8" opacity="0.8"/><path d="M65.6 57.9l4.2 1.4" stroke="#c07090" stroke-width="0.8" opacity="0.8"/><path d="M60.0 75.1l-2.5 -3.8" stroke="#ffe0d0" stroke-width="0.8" opacity="0.8"/><path d="M38.1 85.6l3.6 -0.5" stroke="#f0d0c0" stroke-width="0.8" opacity="0.8"/><path d="M54.8 114.8l-0.7 2.4" stroke="#d090a0" stroke-width="0.8" opacity="0.8"/><path d="M43.2 55.2l0.8 4.4" stroke="#5090c0" stroke-width="0.8" opacity="0.8"/><path d="M18.8 95.6l0.0 -4.9" stroke="#60b0d0" stroke-width="0.8" opacity="0.8"/><path d="M51.3 100.1l-4.0 -2.8" stroke="#e0a090" stroke-width="0.8" opacity="0.8"/><path d="M80.5 73.5l2.6 -2.0" stroke="#d090a0" stroke-width="0.8" opacity="0.8"/><path d="M32.1 104.1l-1.0 2.5" stroke="#d090a0" stroke-width="0.8" opacity="0.8"/><path d="M68.4 111.3l-1.8 2.3" stroke="#a06080" stroke-width="0.8" opacity="0.8"/><path d="M21.4 65.9l1.9 -0.7" stroke="#d090a0" stroke-width="0.8" opacity="0.8"/><path d="M8.4 87.5l-3.6 0.6" stroke="#a06080" stroke-width="0.8" opacity="0.8"/><path d="M70.5 81.4l-4.4 0.9" stroke="#f0d0c0" stroke-width="0.8" opacity="0.8"/><path d="M48.3 63.5l-1.1 -2.0" stroke="#ffe0d0" stroke-width="0.8" opacity="0.8"/><path d="M62.7 81.2l-3.6 -3.1" stroke="#c06070" stroke-width="0.8" opacity="0.8"/><path d="M61.8 79.5l1.4 -3.0" stroke="#f0d0c0" stroke-width="0.8" opacity="0.8"/><path d="M35.5 87.4l3.9 1.5" stroke="#f0d0c0" stroke-width="0.8" opacity="0.8"/><path d="M70.2 77.0l-2.9 -0.8" stroke="#ffe0d0" stroke-width="0.8" opacity="0.8"/><path d="M86.1 81.5l-0.0 -2.2" stroke="#c07090" stroke-width="0.8" opacity="0.8"/><path d="M57.5 52.6l2.2 2.0" stroke="#c07090" stroke-width="0.8" opacity="0.8"/><path d="M76.1 103.6l-4.2 1.6" stroke="#5090c0" stroke-width="0.8" opacity="0.8"/><path d="M47.6 89.8l0.9 2.8" stroke="#d08070" stroke-width="0.8" opacity="0.8"/><path d="M34.5 92.4l-0.7 2.4" stroke="#f0b0a0" stroke-width="0.8" opacity="0.8"/><path d="M18.6 90.3l-3.4 -2.6" stroke="#5090c0" stroke-width="0.8" opacity="0.8"/><path d="M11.6 62.0l3.2 -3.0" stroke="#5090c0" stroke-width="0.8" opacity="0.8"/><path d="M75.0 73.8l2.2 -1.6" stroke="#d090a0" stroke-width="0.8" opacity="0.8"/><path d="M60.5 94.2l0.1 -3.0" stroke="#f0b0a0" stroke-width="0.8" opacity="0.8"/><path d="M48.1 47.8l-4.8 0.1" stroke="#c07090" stroke-width="0.8" opacity="0.8"/><path d="M21.2 79.7l-2.4 0.1" stroke="#805070" stroke-width="0.8" opacity="0.8"/><path d="M10.4 94.4l2.5 1.2" stroke="#5090c0" stroke-width="0.8" opacity="0.8"/><path d="M41.2 98.5l2.9 -0.7" stroke="#d08070" stroke-width="0.8" opacity="0.8"/><path d="M47.0 60.0l-4.7 -0.4" stroke="#ffe0d0" stroke-width="0.8" opacity="0.8"/><path d="M56.8 89.1l3.1 -2.3" stroke="#c06070" stroke-width="0.8" opacity="0.8"/><path d="M47.0 96.7l2.4 -3.9" stroke="#f0b0a0" stroke-width="0.8" opacity="0.8"/><path d="M26.9 87.3l2.9 -0.5" stroke="#f0d0c0" stroke-width="0.8" opacity="0.8"/><path d="M23.0 53.1l-1.9 -0.9" stroke="#60b0d0" stroke-width="0.8" opacity="0.8"/><path d="M81.6 90.9l-2.5 -2.0" stroke="#5090c0" stroke-width="0.8" opacity="0.8"/><path d="M37.0 57.6l1.0 4.1" stroke="#a06080" stroke-width="0.8" opacity="0.8"/><path d="M54.9 100.9l0.6 4.8" stroke="#805070" stroke-width="0.8" opacity="0.8"/><path d="M29.9 63.5l-2.4 3.1" stroke="#5090c0" stroke-width="0.8" opacity="0.8"/><path d="M32.4 80.0l-3.2 1.2" stroke="#f0b0a0" stroke-width="0.8" opacity="0.8"/><path d="M38.3 69.6l0.6 4.3" stroke="#d08070" stroke-width="0.8" opacity="0.8"/><path d="M23.0 94.5l-2.0 3.9" stroke="#805070" stroke-width="0.8" opacity="0.8"/><path d="M32.7 90.9l-3.4 0.6" stroke="#e0a090" stroke-width="0.8" opacity="0.8"/><path d="M11.8 99.7l2.3 -0.1" stroke="#5090c0" stroke-width="0.8" opacity="0.8"/><path d="M25.4 80.4l-0.1 2.6" stroke="#e0a090" stroke-width="0.8" opacity="0.8"/><path d="M63.1 82.8l1.7 -1.3" stroke="#d08070" stroke-width="0.8" opacity="0.8"/><path d="M29.0 59.3l-1.3 -1.7" stroke="#d090a0" stroke-width="0.8" opacity="0.8"/><path d="M42.0 61.4l-1.4 -4.6" stroke="#f0b0a0" stroke-width="0.8" opacity="0.8"/><path d="M42.7 107.9l0.5 -4.8" stroke="#5090c0" stroke-width="0.8" opacity="0.8"/><path d="M68.9 93.7l1.1 -3.2" stroke="#5090c0" stroke-width="0.8" opacity="0.8"/><path d="M74.6 79.2l0.7 -1.9" stroke="#a06080" stroke-width="0.8" opacity="0.8"/><path d="M72.0 97.0l3.4 3.0" stroke="#a06080" stroke-width="0.8" opacity="0.8"/><path d="M36.4 76.4l2.5 2.0" stroke="#c06070" stroke-width="0.8" opacity="0.8"/><path d="M47.3 66.4l-3.4 1.3" stroke="#e0a090" stroke-width="0.8" opacity="0.8"/><path d="M30.4 50.3l3.9 3.1" stroke="#60b0d0" stroke-width="0.8" opacity="0.8"/><path d="M73.0 94.1l-1.4 4.2" stroke="#c07090" stroke-width="0.8" opacity="0.8"/><path d="M22.3 63.5l2.3 0.0" stroke="#5090c0" stroke-width="0.8" opacity="0.8"/><path d="M8.0 88.1l-0.4 -4.2" stroke="#d090a0" stroke-width="0.8" opacity="0.8"/><path d="M57.4 76.2l-1.4 -1.8" stroke="#d08070" stroke-width="0.8" opacity="0.8"/><path d="M35.7 113.2l2.2 -4.0" stroke="#805070" stroke-width="0.8" opacity="0.8"/><path d="M72.4 109.0l2.9 0.7" stroke="#805070" stroke-width="0.8" opacity="0.8"/><path d="M72.0 108.6l2.8 -2.9" stroke="#d090a0" stroke-width="0.8" opacity="0.8"/><path d="M47.6 47.9l-3.3 3.0" stroke="#60b0d0" stroke-width="0.8" opacity="0.8"/><path d="M77.6 89.0l-2.0 -3.9" stroke="#5090c0" stroke-width="0.8" opacity="0.8"/><path d="M18.8 67.4l2.2 2.3" stroke="#805070" stroke-width="0.8" opacity="0.8"/><path d="M44.3 46.6l-3.9 0.7" stroke="#a06080" stroke-width="0.8" opacity="0.8"/><path d="M53.1 64.0l0.0 -4.5" stroke="#f0d0c0" stroke-width="0.8" opacity="0.8"/><path d="M19.4 84.8l-3.3 -3.0" stroke="#c07090" stroke-width="0.8" opacity="0.8"/><path d="M52.8 91.9l2.1 -1.8" stroke="#f0d0c0" stroke-width="0.8" opacity="0.8"/><path d="M39.3 54.7l4.8 0.5" stroke="#d090a0" stroke-width="0.8" opacity="0.8"/><path d="M17.7 54.0l-1.8 3.7" stroke="#c07090" stroke-width="0.8" opacity="0.8"/><path d="M56.5 46.9l-2.0 -3.2" stroke="#c07090" stroke-width="0.8" opacity="0.8"/><path d="M15.5 61.0l-3.1 1.1" stroke="#d090a0" stroke-width="0.8" opacity="0.8"/><path d="M76.9 104.6l-0.7 -3.5" stroke="#5090c0" stroke-width="0.8" opacity="0.8"/><path d="M51.3 78.5l-1.8 1.8" stroke="#f0d0c0" stroke-width="0.8" opacity="0.8"/><path d="M43.7 69.2l-0.6 -2.5" stroke="#e0a090" stroke-width="0.8" opacity="0.8"/><path d="M14.3 58.2l0.4 2.4" stroke="#c07090" stroke-width="0.8" opacity="0.8"/><path d="M24.6 90.2l-4.0 1.4" stroke="#805070" stroke-width="0.8" opacity="0.8"/><path d="M60.1 86.2l2.2 1.6" stroke="#d08070" stroke-width="0.8" opacity="0.8"/><path d="M14.7 77.0l-3.3 -0.2" stroke="#c07090" stroke-width="0.8" opacity="0.8"/><path d="M87.4 81.6l4.1 -1.2" stroke="#c07090" stroke-width="0.8" opacity="0.8"/><path d="M51.3 91.3l2.3 0.6" stroke="#ffe0d0" stroke-width="0.8" opacity="0.8"/><path d="M32.7 96.3l1.8 3.0" stroke="#e0a090" stroke-width="0.8" opacity="0.8"/><path d="M7.5 82.4l-2.4 -3.5" stroke="#805070" stroke-width="0.8" opacity="0.8"/><path d="M26.4 91.1l2.6 -2.2" stroke="#f0b0a0" stroke-width="0.8" opacity="0.8"/><path d="M55.2 80.0l-0.8 3.8" stroke="#f0d0c0" stroke-width="0.8" opacity="0.8"/><path d="M24.1 69.3l-0.6 2.4" stroke="#60b0d0" stroke-width="0.8" opacity="0.8"/><path d="M44.9 59.2l-3.2 -1.3" stroke="#ffe0d0" stroke-width="0.8" opacity="0.8"/><path d="M71.1 75.4l-1.1 -3.7" stroke="#c06070" stroke-width="0.8" opacity="0.8"/><path d="M55.0 106.5l4.3 -1.9" stroke="#5090c0" stroke-width="0.8" opacity="0.8"/><path d="M24.1 84.4l0.9 -4.0" stroke="#f0d0c0" stroke-width="0.8" opacity="0.8"/><path d="M47.8 66.9l-0.2 -2.1" stroke="#ffe0d0" stroke-width="0.8" opacity="0.8"/><path d="M43.4 90.8l-3.8 0.0" stroke="#ffe0d0" stroke-width="0.8" opacity="0.8"/><path d="M59.4 74.9l1.4 -2.0" stroke="#ffe0d0" stroke-width="0.8" opacity="0.8"/><path d="M6.1 85.4l-4.4 0.7" stroke="#5090c0" stroke-width="0.8" opacity="0.8"/><path d="M52.2 96.8l0.2 2.1" stroke="#d08070" stroke-width="0.8" opacity="0.8"/><path d="M10.2 69.3l-3.3 2.0" stroke="#d090a0" stroke-width="0.8" opacity="0.8"/><path d="M48.3 98.8l-2.0 3.0" stroke="#ffe0d0" stroke-width="0.8" opacity="0.8"/><path d="M63.8 95.8l2.8 -0.6" stroke="#ffe0d0" stroke-width="0.8" opacity="0.8"/><path d="M60.0 64.3l-1.4 -2.8" stroke="#d08070" stroke-width="0.8" opacity="0.8"/><path d="M30.5 78.0l0.7 2.9" stroke="#c06070" stroke-width="0.8" opacity="0.8"/><path d="M46.9 55.0l-2.6 -2.9" stroke="#60b0d0" stroke-width="0.8" opacity="0.8"/><path d="M33.6 94.0l-1.4 -3.9" stroke="#ffe0d0" stroke-width="0.8" opacity="0.8"/><path d="M54.8 81.2l1.9 -3.8" stroke="#f0d0c0" stroke-width="0.8" opacity="0.8"/><path d="M14.4 101.6l-3.5 -3.0" stroke="#c07090" stroke-width="0.8" opacity="0.8"/><path d="M56.0 114.7l-0.3 3.9" stroke="#d090a0" stroke-width="0.8" opacity="0.8"/><path d="M68.6 70.6l4.4 0.1" stroke="#f0b0a0" stroke-width="0.8" opacity="0.8"/><path d="M85.7 70.1l-0.4 -4.1" stroke="#60b0d0" stroke-width="0.8" opacity="0.8"/><path d="M32.9 75.7l1.2 -1.8" stroke="#d08070" stroke-width="0.8" opacity="0.8"/><path d="M60.4 53.6l1.0 2.9" stroke="#d090a0" stroke-width="0.8" opacity="0.8"/><path d="M6.1 77.2l-4.2 -0.3" stroke="#d090a0" stroke-width="0.8" opacity="0.8"/><path d="M38.7 88.1l4.6 -0.7" stroke="#c06070" stroke-width="0.8" opacity="0.8"/><path d="M67.9 70.1l-4.8 -0.1" stroke="#c06070" stroke-width="0.8" opacity="0.8"/><path d="M23.2 98.4l2.3 0.8" stroke="#d090a0" stroke-width="0.8" opacity="0.8"/><path d="M41.4 66.3l-1.4 3.7" stroke="#f0b0a0" stroke-width="0.8" opacity="0.8"/><path d="M58.5 73.3l0.3 2.6" stroke="#e0a090" stroke-width="0.8" opacity="0.8"/><path d="M24.7 77.4l-2.0 0.9" stroke="#f0d0c0" stroke-width="0.8" opacity="0.8"/><path d="M15.4 73.4l3.3 2.4" stroke="#805070" stroke-width="0.8" opacity="0.8"/><path d="M49.1 54.8l-3.6 -0.4" stroke="#805070" stroke-width="0.8" opacity="0.8"/><path d="M14.9 87.7l-0.3 2.3" stroke="#60b0d0" stroke-width="0.8" opacity="0.8"/><path d="M18.5 59.2l0.9 -3.9" stroke="#a06080" stroke-width="0.8" opacity="0.8"/><path d="M25.4 67.4l2.4 -4.3" stroke="#805070" stroke-width="0.8" opacity="0.8"/><path d="M73.6 74.4l-2.4 -0.2" stroke="#805070" stroke-width="0.8" opacity="0.8"/><path d="M58.2 73.4l-3.2 -3.4" stroke="#d08070" stroke-width="0.8" opacity="0.8"/><path d="M24.2 92.9l3.0 -2.3" stroke="#c07090" stroke-width="0.8" opacity="0.8"/><path d="M41.6 62.8l-2.1 1.8" stroke="#ffe0d0" stroke-width="0.8" opacity="0.8"/><path d="M70.2 72.6l-2.5 -2.9" stroke="#e0a090" stroke-width="0.8" opacity="0.8"/><path d="M35.9 95.7l-2.5 -0.4" stroke="#f0d0c0" stroke-width="0.8" opacity="0.8"/><path d="M22.1 106.4l-2.7 2.0" stroke="#c07090" stroke-width="0.8" opacity="0.8"/><path d="M19.2 96.1l-2.0 -1.8" stroke="#a06080" stroke-width="0.8" opacity="0.8"/><path d="M22.6 70.2l-2.4 -0.8" stroke="#a06080" stroke-width="0.8" opacity="0.8"/><path d="M89.5 71.5l2.4 -0.9" stroke="#a06080" stroke-width="0.8" opacity="0.8"/><path d="M51.0 90.9l-0.7 -3.2" stroke="#f0b0a0" stroke-width="0.8" opacity="0.8"/><path d="M43.5 71.9l3.0 3.8" stroke="#e0a090" stroke-width="0.8" opacity="0.8"/><path d="M47.8 114.9l-4.0 2.3" stroke="#c07090" stroke-width="0.8" opacity="0.8"/><path d="M44.4 69.5l2.4 1.3" stroke="#c06070" stroke-width="0.8" opacity="0.8"/><path d="M62.0 61.3l-0.9 -2.8" stroke="#a06080" stroke-width="0.8" opacity="0.8"/><path d="M38.6 83.5l3.5 -2.0" stroke="#d08070" stroke-width="0.8" opacity="0.8"/><path d="M25.1 70.5l-3.6 -1.9" stroke="#d08070" stroke-width="0.8" opacity="0.8"/><path d="M26.6 66.9l4.8 0.8" stroke="#c07090" stroke-width="0.8" opacity="0.8"/><path d="M12.6 81.6l4.1 -2.5" stroke="#60b0d0" stroke-width="0.8" opacity="0.8"/><path d="M40.7 91.7l-2.5 -0.1" stroke="#f0d0c0" stroke-width="0.8" opacity="0.8"/><path d="M76.0 89.4l-1.3 2.4" stroke="#d090a0" stroke-width="0.8" opacity="0.8"/><path d="M48.9 85.2l-4.1 -2.4" stroke="#f0d0c0" stroke-width="0.8" opacity="0.8"/><path d="M25.1 70.2l-2.9 -0.7" stroke="#e0a090" stroke-width="0.8" opacity="0.8"/><path d="M58.5 81.7l2.6 2.7" stroke="#d08070" stroke-width="0.8" opacity="0.8"/><path d="M57.5 83.4l0.4 3.0" stroke="#c06070" stroke-width="0.8" opacity="0.8"/><path d="M37.4 96.9l-2.3 -2.6" stroke="#f0b0a0" stroke-width="0.8" opacity="0.8"/><path d="M14.9 69.3l0.1 4.1" stroke="#d090a0" stroke-width="0.8" opacity="0.8"/><path d="M66.9 97.7l-1.4 -2.9" stroke="#5090c0" stroke-width="0.8" opacity="0.8"/><path d="M54.3 51.8l-3.1 -2.7" stroke="#a06080" stroke-width="0.8" opacity="0.8"/><path d="M50.9 60.7l-0.7 -2.0" stroke="#c06070" stroke-width="0.8" opacity="0.8"/><path d="M53.2 77.6l1.0 2.3" stroke="#d08070" stroke-width="0.8" opacity="0.8"/><path d="M73.4 104.6l2.9 1.1" stroke="#c07090" stroke-width="0.8" opacity="0.8"/><path d="M19.2 100.2l-1.4 -1.6" stroke="#c07090" stroke-width="0.8" opacity="0.8"/><path d="M26.5 71.0l-0.8 -3.5" stroke="#e0a090" stroke-width="0.8" opacity="0.8"/><path d="M8.5 78.3l-3.7 -0.5" stroke="#d090a0" stroke-width="0.8" opacity="0.8"/><path d="M39.9 114.2l-3.5 1.9" stroke="#c07090" stroke-width="0.8" opacity="0.8"/><path d="M57.3 96.1l4.5 1.2" stroke="#d08070" stroke-width="0.8" opacity="0.8"/><path d="M46.9 90.3l1.6 3.3" stroke="#f0b0a0" stroke-width="0.8" opacity="0.8"/><path d="M74.6 94.4l-1.9 2.2" stroke="#c07090" stroke-width="0.8" opacity="0.8"/><path d="M88.8 80.5l1.1 -2.9" stroke="#5090c0" stroke-width="0.8" opacity="0.8"/><path d="M63.7 92.7l-1.9 1.8" stroke="#f0b0a0" stroke-width="0.8" opacity="0.8"/><path d="M41.0 92.6l4.2 2.4" stroke="#f0d0c0" stroke-width="0.8" opacity="0.8"/><path d="M56.7 92.1l-2.3 -1.7" stroke="#f0b0a0" stroke-width="0.8" opacity="0.8"/><path d="M79.8 68.0l0.3 -3.1" stroke="#a06080" stroke-width="0.8" opacity="0.8"/><path d="M81.0 99.1l-4.6 1.1" stroke="#60b0d0" stroke-width="0.8" opacity="0.8"/><path d="M80.7 78.5l-3.8 2.7" stroke="#c07090" stroke-width="0.8" opacity="0.8"/><path d="M9.3 80.6l3.0 -1.6" stroke="#c07090" stroke-width="0.8" opacity="0.8"/><path d="M66.7 70.6l-4.2 -1.0" stroke="#c06070" stroke-width="0.8" opacity="0.8"/><path d="M51.2 69.6l-0.6 4.7" stroke="#d08070" stroke-width="0.8" opacity="0.8"/><path d="M83.9 68.6l-4.1 1.9" stroke="#5090c0" stroke-width="0.8" opacity="0.8"/><path d="M28.0 75.9l-3.9 2.2" stroke="#f0b0a0" stroke-width="0.8" opacity="0.8"/><path d="M31.9 64.2l2.9 -2.8" stroke="#e0a090" stroke-width="0.8" opacity="0.8"/><path d="M82.1 90.7l-0.9 2.4" stroke="#805070" stroke-width="0.8" opacity="0.8"/><path d="M80.4 59.2l4.0 -2.4" stroke="#a06080" stroke-width="0.8" opacity="0.8"/><path d="M80.5 86.2l4.1 -1.2" stroke="#5090c0" stroke-width="0.8" opacity="0.8"/><path d="M66.7 100.5l4.1 -2.0" stroke="#5090c0" stroke-width="0.8" opacity="0.8"/><path d="M55.4 97.8l-3.2 3.2" stroke="#c06070" stroke-width="0.8" opacity="0.8"/><path d="M48.9 48.3l-1.0 4.4" stroke="#5090c0" stroke-width="0.8" opacity="0.8"/><path d="M22.4 52.8l0.7 -2.1" stroke="#a06080" stroke-width="0.8" opacity="0.8"/><path d="M42.9 109.0l0.8 -4.4" stroke="#c07090" stroke-width="0.8" opacity="0.8"/><path d="M29.1 55.2l2.5 -2.0" stroke="#d090a0" stroke-width="0.8" opacity="0.8"/><path d="M38.5 71.6l-0.7 -1.9" stroke="#f0d0c0" stroke-width="0.8" opacity="0.8"/><path d="M26.7 84.2l-2.8 0.5" stroke="#ffe0d0" stroke-width="0.8" opacity="0.8"/><path d="M12.5 83.0l2.1 -0.2" stroke="#a06080" stroke-width="0.8" opacity="0.8"/><path d="M70.5 91.8l2.2 -0.3" stroke="#5090c0" stroke-width="0.8" opacity="0.8"/><path d="M45.7 99.7l-3.6 -1.2" stroke="#f0b0a0" stroke-width="0.8" opacity="0.8"/><path d="M45.4 114.9l-2.8 1.3" stroke="#805070" stroke-width="0.8" opacity="0.8"/><path d="M26.2 89.6l1.7 -4.5" stroke="#f0d0c0" stroke-width="0.8" opacity="0.8"/><path d="M38.1 114.1l2.9 3.4" stroke="#d090a0" stroke-width="0.8" opacity="0.8"/><path d="M42.9 81.5l1.1 1.7" stroke="#d08070" stroke-width="0.8" opacity="0.8"/><path d="M52.1 100.5l3.8 -1.3" stroke="#ffe0d0" stroke-width="0.8" opacity="0.8"/><path d="M24.6 105.3l1.4 -3.1" stroke="#a06080" stroke-width="0.8" opacity="0.8"/><path d="M39.6 92.9l-4.8 -1.2" stroke="#f0d0c0" stroke-width="0.8" opacity="0.8"/><path d="M12.1 98.1l2.4 -3.4" stroke="#d090a0" stroke-width="0.8" opacity="0.8"/><path d="M42.0 114.3l3.1 -2.5" stroke="#5090c0" stroke-width="0.8" opacity="0.8"/><path d="M15.0 100.6l2.2 -2.4" stroke="#60b0d0" stroke-width="0.8" opacity="0.8"/><path d="M59.0 55.3l-2.7 -0.5" stroke="#a06080" stroke-width="0.8" opacity="0.8"/><path d="M27.4 69.3l4.9 -0.8" stroke="#f0d0c0" stroke-width="0.8" opacity="0.8"/><path d="M40.8 45.3l3.0 1.1" stroke="#805070" stroke-width="0.8" opacity="0.8"/><path d="M62.0 46.3l-1.6 -3.8" stroke="#d090a0" stroke-width="0.8" opacity="0.8"/><path d="M77.1 102.2l4.7 -0.6" stroke="#c07090" stroke-width="0.8" opacity="0.8"/><path d="M26.1 59.0l-1.3 -1.6" stroke="#a06080" stroke-width="0.8" opacity="0.8"/><path d="M14.4 81.6l-1.9 -0.8" stroke="#805070" stroke-width="0.8" opacity="0.8"/><path d="M32.7 52.0l-1.5 -2.5" stroke="#60b0d0" stroke-width="0.8" opacity="0.8"/><path d="M64.4 80.2l-0.7 -3.0" stroke="#f0b0a0" stroke-width="0.8" opacity="0.8"/><path d="M39.0 84.3l3.8 0.4" stroke="#c06070" stroke-width="0.8" opacity="0.8"/><path d="M49.8 92.0l3.5 2.8" stroke="#e0a090" stroke-width="0.8" opacity="0.8"/><path d="M19.9 70.6l1.3 -1.5" stroke="#5090c0" stroke-width="0.8" opacity="0.8"/><path d="M39.2 109.9l1.0 3.5" stroke="#60b0d0" stroke-width="0.8" opacity="0.8"/><path d="M60.3 73.9l-4.5 1.6" stroke="#f0d0c0" stroke-width="0.8" opacity="0.8"/><path d="M57.7 100.8l4.2 0.9" stroke="#c07090" stroke-width="0.8" opacity="0.8"/><path d="M88.6 89.4l3.8 -1.3" stroke="#805070" stroke-width="0.8" opacity="0.8"/><path d="M32.5 68.9l-2.6 0.4" stroke="#e0a090" stroke-width="0.8" opacity="0.8"/><path d="M15.1 98.3l-1.1 -4.0" stroke="#5090c0" stroke-width="0.8" opacity="0.8"/><path d="M46.7 57.3l2.9 3.4" stroke="#5090c0" stroke-width="0.8" opacity="0.8"/><path d="M65.1 70.5l-1.0 3.7" stroke="#c06070" stroke-width="0.8" opacity="0.8"/><path d="M48.3 73.3l-3.1 1.7" stroke="#f0d0c0" stroke-width="0.8" opacity="0.8"/><path d="M69.2 89.0l2.4 -2.4" stroke="#c06070" stroke-width="0.8" opacity="0.8"/><path d="M46.9 48.2l-2.8 -3.4" stroke="#60b0d0" stroke-width="0.8" opacity="0.8"/><path d="M50.1 115.3l2.7 3.6" stroke="#a06080" stroke-width="0.8" opacity="0.8"/><path d="M39.9 50.6l-2.7 -2.7" stroke="#c07090" stroke-width="0.8" opacity="0.8"/><path d="M29.3 65.6l-1.3 3.1" stroke="#e0a090" stroke-width="0.8" opacity="0.8"/><path d="M28.9 67.6l-2.1 -3.8" stroke="#d08070" stroke-width="0.8" opacity="0.8"/><path d="M38.8 66.2l0.2 -4.7" stroke="#f0b0a0" stroke-width="0.8" opacity="0.8"/><path d="M43.5 84.7l-2.6 -3.2" stroke="#d08070" stroke-width="0.8" opacity="0.8"/><path d="M32.1 71.3l-3.7 -0.2" stroke="#ffe0d0" stroke-width="0.8" opacity="0.8"/><path d="M9.9 87.4l1.0 -2.4" stroke="#5090c0" stroke-width="0.8" opacity="0.8"/><path d="M51.7 65.5l-2.4 2.3" stroke="#ffe0d0" stroke-width="0.8" opacity="0.8"/><path d="M57.9 99.5l3.1 1.7" stroke="#f0d0c0" stroke-width="0.8" opacity="0.8"/><path d="M68.4 72.7l1.8 2.1" stroke="#f0b0a0" stroke-width="0.8" opacity="0.8"/><path d="M91.4 79.4l2.0 -2.6" stroke="#805070" stroke-width="0.8" opacity="0.8"/><path d="M25.5 51.1l-4.3 -0.1" stroke="#60b0d0" stroke-width="0.8" opacity="0.8"/><path d="M65.4 99.1l3.3 -2.7" stroke="#a06080" stroke-width="0.8" opacity="0.8"/><path d="M78.1 73.1l2.2 0.2" stroke="#805070" stroke-width="0.8" opacity="0.8"/><path d="M29.9 53.0l-2.8 2.1" stroke="#c07090" stroke-width="0.8" opacity="0.8"/><path d="M62.8 104.4l0.7 -4.7" stroke="#60b0d0" stroke-width="0.8" opacity="0.8"/><path d="M30.4 84.2l2.3 -3.5" stroke="#d08070" stroke-width="0.8" opacity="0.8"/><path d="M62.4 86.7l-0.6 4.6" stroke="#f0d0c0" stroke-width="0.8" opacity="0.8"/><path d="M35.7 68.3l1.9 -3.9" stroke="#d08070" stroke-width="0.8" opacity="0.8"/><path d="M70.5 91.8l-0.9 2.9" stroke="#a06080" stroke-width="0.8" opacity="0.8"/><path d="M72.5 88.1l-3.1 3.6" stroke="#ffe0d0" stroke-width="0.8" opacity="0.8"/><path d="M56.1 68.8l-4.8 0.2" stroke="#c06070" stroke-width="0.8" opacity="0.8"/><path d="M22.5 107.0l2.0 4.0" stroke="#a06080" stroke-width="0.8" opacity="0.8"/><path d="M32.9 50.8l-1.1 2.2" stroke="#805070" stroke-width="0.8" opacity="0.8"/><path d="M52.3 62.9l-2.8 3.9" stroke="#f0b0a0" stroke-width="0.8" opacity="0.8"/><path d="M29.2 104.1l3.0 -0.5" stroke="#d090a0" stroke-width="0.8" opacity="0.8"/><path d="M68.6 78.9l4.2 -0.6" stroke="#ffe0d0" stroke-width="0.8" opacity="0.8"/><path d="M22.7 99.4l-3.5 0.2" stroke="#805070" stroke-width="0.8" opacity="0.8"/><path d="M50.5 81.6l0.1 -3.2" stroke="#e0a090" stroke-width="0.8" opacity="0.8"/><path d="M77.5 92.6l-0.6 3.3" stroke="#a06080" stroke-width="0.8" opacity="0.8"/><path d="M45.6 53.8l3.0 0.4" stroke="#a06080" stroke-width="0.8" opacity="0.8"/><path d="M49.8 46.7l2.9 -0.5" stroke="#60b0d0" stroke-width="0.8" opacity="0.8"/><path d="M40.8 80.5l-3.0 0.6" stroke="#f0b0a0" stroke-width="0.8" opacity="0.8"/><path d="M28.0 74.7l-2.5 -3.3" stroke="#e0a090" stroke-width="0.8" opacity="0.8"/><path d="M16.1 65.0l-3.9 0.7" stroke="#60b0d0" stroke-width="0.8" opacity="0.8"/><path d="M44.4 48.8l1.7 1.3" stroke="#d090a0" stroke-width="0.8" opacity="0.8"/><path d="M89.4 83.1l-1.9 4.6" stroke="#805070" stroke-width="0.8" opacity="0.8"/><path d="M47.1 114.6l2.1 2.9" stroke="#d090a0" stroke-width="0.8" opacity="0.8"/><path d="M21.7 72.8l-1.1 -3.5" stroke="#a06080" stroke-width="0.8" opacity="0.8"/><path d="M53.4 90.0l-2.2 -2.2" stroke="#ffe0d0" stroke-width="0.8" opacity="0.8"/><path d="M44.2 77.9l-4.5 -0.7" stroke="#f0b0a0" stroke-width="0.8" opacity="0.8"/><path d="M32.9 55.6l4.8 1.2" stroke="#a06080" stroke-width="0.8" opacity="0.8"/><path d="M78.4 94.2l2.8 -1.8" stroke="#a06080" stroke-width="0.8" opacity="0.8"/><path d="M49.7 67.9l0.9 -3.8" stroke="#d08070" stroke-width="0.8" opacity="0.8"/><path d="M53.7 112.0l-3.1 -3.3" stroke="#d090a0" stroke-width="0.8" opacity="0.8"/><path d="M19.3 106.9l-3.9 0.3" stroke="#c07090" stroke-width="0.8" opacity="0.8"/><path d="M42.8 79.3l-1.6 -3.0" stroke="#f0d0c0" stroke-width="0.8" opacity="0.8"/><path d="M71.5 91.3l-0.5 2.6" stroke="#5090c0" stroke-width="0.8" opacity="0.8"/><path d="M13.4 67.8l2.9 2.4" stroke="#5090c0" stroke-width="0.8" opacity="0.8"/><path d="M70.3 108.9l-1.9 1.6" stroke="#a06080" stroke-width="0.8" opacity="0.8"/><path d="M50.5 90.2l1.2 4.4" stroke="#c06070" stroke-width="0.8" opacity="0.8"/><path d="M25.0 74.4l-0.3 4.1" stroke="#f0d0c0" stroke-width="0.8" opacity="0.8"/><path d="M39.0 53.7l0.4 -4.5" stroke="#60b0d0" stroke-width="0.8" opacity="0.8"/><path d="M71.2 98.6l0.5 -2.7" stroke="#60b0d0" stroke-width="0.8" opacity="0.8"/><path d="M63.3 52.2l-0.8 2.0" stroke="#60b0d0" stroke-width="0.8" opacity="0.8"/><path d="M73.8 101.6l-2.6 0.7" stroke="#c07090" stroke-width="0.8" opacity="0.8"/><path d="M38.6 48.5l-4.1 -1.0" stroke="#a06080" stroke-width="0.8" opacity="0.8"/><path d="M26.4 71.9l-1.1 -2.3" stroke="#e0a090" stroke-width="0.8" opacity="0.8"/><path d="M11.1 85.4l0.6 4.0" stroke="#c07090" stroke-width="0.8" opacity="0.8"/><path d="M55.6 64.0l-2.2 0.4" stroke="#d08070" stroke-width="0.8" opacity="0.8"/><path d="M17.5 89.2l4.4 0.1" stroke="#5090c0" stroke-width="0.8" opacity="0.8"/><path d="M63.9 95.9l2.2 -2.8" stroke="#c06070" stroke-width="0.8" opacity="0.8"/><path d="M19.5 65.8l2.2 2.0" stroke="#805070" stroke-width="0.8" opacity="0.8"/><path d="M22.4 89.3l-1.1 1.9" stroke="#a06080" stroke-width="0.8" opacity="0.8"/><path d="M21.5 98.1l2.1 -0.2" stroke="#a06080" stroke-width="0.8" opacity="0.8"/><path d="M29.7 76.5l1.2 -3.2" stroke="#d08070" stroke-width="0.8" opacity="0.8"/><path d="M24.4 92.1l3.1 -1.6" stroke="#60b0d0" stroke-width="0.8" opacity="0.8"/><path d="M52.2 87.0l-0.0 4.0" stroke="#f0b0a0" stroke-width="0.8" opacity="0.8"/><path d="M41.7 70.5l-1.0 -2.7" stroke="#c06070" stroke-width="0.8" opacity="0.8"/><path d="M73.8 71.4l-4.6 -1.0" stroke="#c07090" stroke-width="0.8" opacity="0.8"/><path d="M26.8 53.5l1.3 3.0" stroke="#d090a0" stroke-width="0.8" opacity="0.8"/><path d="M32.4 103.5l-0.2 2.1" stroke="#a06080" stroke-width="0.8" opacity="0.8"/><path d="M85.1 73.9l4.0 -1.5" stroke="#c07090" stroke-width="0.8" opacity="0.8"/><path d="M57.5 77.0l-0.1 4.8" stroke="#e0a090" stroke-width="0.8" opacity="0.8"/><path d="M51.9 96.5l-1.9 2.1" stroke="#d08070" stroke-width="0.8" opacity="0.8"/><path d="M81.8 98.1l-1.2 3.8" stroke="#c07090" stroke-width="0.8" opacity="0.8"/><path d="M36.9 50.9l-1.8 -2.0" stroke="#805070" stroke-width="0.8" opacity="0.8"/><path d="M28.7 64.8l4.1 0.5" stroke="#5090c0" stroke-width="0.8" opacity="0.8"/><path d="M69.7 49.5l-1.5 -3.9" stroke="#a06080" stroke-width="0.8" opacity="0.8"/><path d="M21.5 63.6l4.5 1.3" stroke="#60b0d0" stroke-width="0.8" opacity="0.8"/><path d="M66.9 76.8l4.2 0.7" stroke="#f0d0c0" stroke-width="0.8" opacity="0.8"/><path d="M30.9 74.5l-2.6 0.8" stroke="#f0b0a0" stroke-width="0.8" opacity="0.8"/><path d="M8.9 77.7l-3.6 -1.4" stroke="#60b0d0" stroke-width="0.8" opacity="0.8"/><path d="M26.7 82.0l3.8 2.6" stroke="#d08070" stroke-width="0.8" opacity="0.8"/><path d="M64.3 91.1l-4.8 -0.9" stroke="#ffe0d0" stroke-width="0.8" opacity="0.8"/><path d="M50.9 64.5l1.7 4.1" stroke="#e0a090" stroke-width="0.8" opacity="0.8"/><path d="M25.9 54.9l2.0 -0.7" stroke="#a06080" stroke-width="0.8" opacity="0.8"/><path d="M23.3 80.7l3.3 -2.2" stroke="#f0d0c0" stroke-width="0.8" opacity="0.8"/><path d="M60.4 83.4l3.0 -1.1" stroke="#c06070" stroke-width="0.8" opacity="0.8"/><path d="M71.7 87.3l1.1 -2.0" stroke="#f0d0c0" stroke-width="0.8" opacity="0.8"/><path d="M52.7 65.3l2.3 2.1" stroke="#e0a090" stroke-width="0.8" opacity="0.8"/><path d="M70.5 79.0l3.7 2.1" stroke="#e0a090" stroke-width="0.8" opacity="0.8"/><path d="M55.8 63.9l4.0 1.6" stroke="#d08070" stroke-width="0.8" opacity="0.8"/><path d="M7.1 87.7l-2.0 2.1" stroke="#a06080" stroke-width="0.8" opacity="0.8"/><path d="M67.5 90.0l-0.8 2.5" stroke="#ffe0d0" stroke-width="0.8" opacity="0.8"/><path d="M33.3 92.1l3.3 0.2" stroke="#c06070" stroke-width="0.8" opacity="0.8"/><path d="M16.4 76.8l-3.4 -1.1" stroke="#805070" stroke-width="0.8" opacity="0.8"/><path d="M39.3 100.1l2.2 -2.4" stroke="#f0b0a0" stroke-width="0.8" opacity="0.8"/><path d="M56.1 66.1l-3.0 -3.3" stroke="#c06070" stroke-width="0.8" opacity="0.8"/><path d="M42.3 46.7l3.2 2.6" stroke="#c07090" stroke-width="0.8" opacity="0.8"/><path d="M80.9 86.6l2.7 -2.6" stroke="#d090a0" stroke-width="0.8" opacity="0.8"/><path d="M75.6 80.6l-4.1 0.9" stroke="#5090c0" stroke-width="0.8" opacity="0.8"/><path d="M70.5 103.2l0.5 -4.5" stroke="#a06080" stroke-width="0.8" opacity="0.8"/><path d="M42.1 108.3l2.6 0.1" stroke="#a06080" stroke-width="0.8" opacity="0.8"/><path d="M61.3 83.3l-0.4 3.9" stroke="#ffe0d0" stroke-width="0.8" opacity="0.8"/><path d="M42.1 57.8l-2.3 -0.5" stroke="#a06080" stroke-width="0.8" opacity="0.8"/><path d="M62.4 89.9l2.8 -3.1" stroke="#d08070" stroke-width="0.8" opacity="0.8"/><path d="M42.2 108.7l-0.1 3.7" stroke="#d090a0" stroke-width="0.8" opacity="0.8"/><path d="M83.1 90.8l-0.5 -2.5" stroke="#d090a0" stroke-width="0.8" opacity="0.8"/><path d="M11.4 82.4l-3.2 1.5" stroke="#60b0d0" stroke-width="0.8" opacity="0.8"/><path d="M24.0 60.2l0.1 -3.3" stroke="#805070" stroke-width="0.8" opacity="0.8"/><path d="M73.4 100.6l-0.3 -4.4" stroke="#c07090" stroke-width="0.8" opacity="0.8"/><path d="M46.2 54.8l2.0 -1.2" stroke="#c07090" stroke-width="0.8" opacity="0.8"/><path d="M15.8 75.6l-1.8 3.3" stroke="#d090a0" stroke-width="0.8" opacity="0.8"/><path d="M6.2 83.5l2.4 -0.7" stroke="#805070" stroke-width="0.8" opacity="0.8"/><path d="M90.2 78.1l3.8 -2.5" stroke="#a06080" stroke-width="0.8" opacity="0.8"/><path d="M80.3 66.4l1.5 2.0" stroke="#5090c0" stroke-width="0.8" opacity="0.8"/><path d="M33.6 111.3l-2.0 2.6" stroke="#a06080" stroke-width="0.8" opacity="0.8"/><path d="M19.6 74.2l-2.5 1.7" stroke="#60b0d0" stroke-width="0.8" opacity="0.8"/><path d="M33.9 66.6l0.6 -2.5" stroke="#f0d0c0" stroke-width="0.8" opacity="0.8"/><path d="M38.9 111.1l3.3 1.7" stroke="#a06080" stroke-width="0.8" opacity="0.8"/><path d="M16.3 70.8l3.6 -1.2" stroke="#5090c0" stroke-width="0.8" opacity="0.8"/><path d="M62.0 63.9l-2.3 -1.5" stroke="#d08070" stroke-width="0.8" opacity="0.8"/><path d="M38.9 65.8l3.9 -1.1" stroke="#f0d0c0" stroke-width="0.8" opacity="0.8"/><path d="M87.1 72.9l3.1 -3.2" stroke="#a06080" stroke-width="0.8" opacity="0.8"/><path d="M24.3 101.4l-2.3 -1.4" stroke="#d090a0" stroke-width="0.8" opacity="0.8"/><path d="M76.2 105.9l-2.8 0.4" stroke="#c07090" stroke-width="0.8" opacity="0.8"/><path d="M17.2 73.7l1.9 1.8" stroke="#805070" stroke-width="0.8" opacity="0.8"/><path d="M20.0 73.3l-1.2 2.6" stroke="#60b0d0" stroke-width="0.8" opacity="0.8"/><path d="M78.2 104.6l0.6 -2.4" stroke="#805070" stroke-width="0.8" opacity="0.8"/><path d="M88.4 68.3l2.0 1.2" stroke="#805070" stroke-width="0.8" opacity="0.8"/><path d="M84.5 84.4l-2.2 -0.2" stroke="#c07090" stroke-width="0.8" opacity="0.8"/><path d="M30.1 103.5l2.9 1.4" stroke="#c07090" stroke-width="0.8" opacity="0.8"/><path d="M25.2 75.2l1.1 -2.9" stroke="#ffe0d0" stroke-width="0.8" opacity="0.8"/><path d="M36.2 103.1l-1.3 3.9" stroke="#60b0d0" stroke-width="0.8" opacity="0.8"/><path d="M52.1 96.0l-1.2 2.6" stroke="#ffe0d0" stroke-width="0.8" opacity="0.8"/><path d="M46.3 99.0l3.7 2.0" stroke="#f0b0a0" stroke-width="0.8" opacity="0.8"/><path d="M20.1 67.6l-3.7 -0.1" stroke="#c07090" stroke-width="0.8" opacity="0.8"/><path d="M74.0 62.9l0.9 4.3" stroke="#60b0d0" stroke-width="0.8" opacity="0.8"/><path d="M13.7 88.8l-1.5 -1.5" stroke="#805070" stroke-width="0.8" opacity="0.8"/><path d="M75.8 100.6l1.4 3.9" stroke="#805070" stroke-width="0.8" opacity="0.8"/><path d="M54.2 91.0l-1.9 3.5" stroke="#ffe0d0" stroke-width="0.8" opacity="0.8"/><path d="M61.9 110.1l2.6 2.4" stroke="#a06080" stroke-width="0.8" opacity="0.8"/><path d="M55.5 45.5l3.4 2.5" stroke="#d090a0" stroke-width="0.8" opacity="0.8"/><path d="M55.5 62.3l2.3 0.1" stroke="#f0d0c0" stroke-width="0.8" opacity="0.8"/><path d="M13.0 80.9l-3.3 3.2" stroke="#805070" stroke-width="0.8" opacity="0.8"/><path d="M80.2 79.8l4.6 0.5" stroke="#5090c0" stroke-width="0.8" opacity="0.8"/><path d="M4.5 78.6l2.5 0.6" stroke="#d090a0" stroke-width="0.8" opacity="0.8"/><path d="M74.4 75.9l0.0 -2.9" stroke="#a06080" stroke-width="0.8" opacity="0.8"/><path d="M36.7 92.6l-3.3 -1.8" stroke="#e0a090" stroke-width="0.8" opacity="0.8"/><path d="M62.0 79.8l-3.2 -2.5" stroke="#e0a090" stroke-width="0.8" opacity="0.8"/><path d="M49.7 59.5l3.2 -1.2" stroke="#f0d0c0" stroke-width="0.8" opacity="0.8"/><path d="M69.5 101.5l0.9 4.8" stroke="#5090c0" stroke-width="0.8" opacity="0.8"/><path d="M50.4 102.9l2.2 2.0" stroke="#c07090" stroke-width="0.8" opacity="0.8"/><path d="M57.4 48.7l-2.5 -3.7" stroke="#60b0d0" stroke-width="0.8" opacity="0.8"/><path d="M81.6 84.5l4.6 1.4" stroke="#5090c0" stroke-width="0.8" opacity="0.8"/><path d="M66.6 89.5l-4.2 0.2" stroke="#f0d0c0" stroke-width="0.8" opacity="0.8"/><path d="M25.6 70.0l-3.3 0.7" stroke="#c06070" stroke-width="0.8" opacity="0.8"/><path d="M31.9 108.1l0.0 4.4" stroke="#805070" stroke-width="0.8" opacity="0.8"/><path d="M78.7 87.4l-1.9 -1.6" stroke="#5090c0" stroke-width="0.8" opacity="0.8"/><path d="M24.6 55.6l4.7 1.6" stroke="#c07090" stroke-width="0.8" opacity="0.8"/><path d="M5.1 85.9l4.3 -0.8" stroke="#60b0d0" stroke-width="0.8" opacity="0.8"/><path d="M22.2 93.4l-0.8 3.4" stroke="#d090a0" stroke-width="0.8" opacity="0.8"/><path d="M32.0 62.6l0.5 -2.4" stroke="#d090a0" stroke-width="0.8" opacity="0.8"/><path d="M23.8 79.3l-2.8 1.4" stroke="#f0b0a0" stroke-width="0.8" opacity="0.8"/><path d="M72.9 109.0l3.4 -0.1" stroke="#c07090" stroke-width="0.8" opacity="0.8"/><path d="M8.0 92.1l-2.5 2.0" stroke="#c07090" stroke-width="0.8" opacity="0.8"/><path d="M54.1 88.1l-4.3 -2.2" stroke="#d08070" stroke-width="0.8" opacity="0.8"/><path d="M24.6 93.1l2.6 0.6" stroke="#d090a0" stroke-width="0.8" opacity="0.8"/><path d="M40.4 66.7l1.0 4.2" stroke="#c06070" stroke-width="0.8" opacity="0.8"/><path d="M21.0 79.7l-0.5 2.8" stroke="#5090c0" stroke-width="0.8" opacity="0.8"/><path d="M74.3 78.2l-2.9 2.4" stroke="#f0b0a0" stroke-width="0.8" opacity="0.8"/><path d="M37.3 88.2l3.6 -2.7" stroke="#c06070" stroke-width="0.8" opacity="0.8"/><path d="M59.1 75.9l-1.8 -4.6" stroke="#ffe0d0" stroke-width="0.8" opacity="0.8"/><path d="M37.9 57.7l-4.7 1.3" stroke="#805070" stroke-width="0.8" opacity="0.8"/><path d="M26.5 50.6l-3.1 1.1" stroke="#d090a0" stroke-width="0.8" opacity="0.8"/><path d="M30.0 49.5l-3.3 -3.4" stroke="#a06080" stroke-width="0.8" opacity="0.8"/><path d="M33.2 76.6l4.0 -0.9" stroke="#e0a090" stroke-width="0.8" opacity="0.8"/><path d="M46.5 83.4l-3.8 2.1" stroke="#e0a090" stroke-width="0.8" opacity="0.8"/><path d="M61.9 89.6l2.5 0.3" stroke="#f0b0a0" stroke-width="0.8" opacity="0.8"/><path d="M66.5 73.6l0.3 -2.0" stroke="#c06070" stroke-width="0.8" opacity="0.8"/><path d="M36.4 50.8l-2.2 -0.5" stroke="#5090c0" stroke-width="0.8" opacity="0.8"/><path d="M13.2 75.4l-3.3 -2.3" stroke="#805070" stroke-width="0.8" opacity="0.8"/><path d="M91.6 81.4l-3.8 -1.3" stroke="#d090a0" stroke-width="0.8" opacity="0.8"/><path d="M51.6 82.8l2.2 -3.1" stroke="#f0d0c0" stroke-width="0.8" opacity="0.8"/><path d="M42.5 64.8l-0.8 3.7" stroke="#f0b0a0" stroke-width="0.8" opacity="0.8"/><path d="M21.3 106.8l-0.7 -4.2" stroke="#a06080" stroke-width="0.8" opacity="0.8"/><path d="M37.3 64.8l-2.9 4.1" stroke="#f0b0a0" stroke-width="0.8" opacity="0.8"/><path d="M18.2 57.8l-0.9 4.2" stroke="#d090a0" stroke-width="0.8" opacity="0.8"/><path d="M36.6 89.0l-2.1 -1.0" stroke="#d08070" stroke-width="0.8" opacity="0.8"/><path d="M28.5 111.8l-1.3 4.4" stroke="#805070" stroke-width="0.8" opacity="0.8"/><path d="M63.9 84.2l-2.3 3.8" stroke="#f0b0a0" stroke-width="0.8" opacity="0.8"/><path d="M42.7 72.3l-2.5 3.4" stroke="#c06070" stroke-width="0.8" opacity="0.8"/><path d="M44.0 86.2l4.8 -0.2" stroke="#d08070" stroke-width="0.8" opacity="0.8"/><path d="M22.9 96.2l-3.0 -0.2" stroke="#c07090" stroke-width="0.8" opacity="0.8"/><path d="M12.7 87.6l0.8 2.9" stroke="#c07090" stroke-width="0.8" opacity="0.8"/><path d="M30.2 69.0l-0.4 -2.0" stroke="#d08070" stroke-width="0.8" opacity="0.8"/><path d="M6.9 82.8l-4.0 -2.1" stroke="#60b0d0" stroke-width="0.8" opacity="0.8"/><path d="M54.8 93.0l-0.1 4.3" stroke="#f0b0a0" stroke-width="0.8" opacity="0.8"/><path d="M56.0 102.0l-0.2 -4.7" stroke="#c07090" stroke-width="0.8" opacity="0.8"/><path d="M14.9 90.8l-3.6 0.1" stroke="#5090c0" stroke-width="0.8" opacity="0.8"/><path d="M44.0 60.5l0.7 -4.5" stroke="#ffe0d0" stroke-width="0.8" opacity="0.8"/><path d="M70.0 84.0l1.5 -3.6" stroke="#c06070" stroke-width="0.8" opacity="0.8"/><path d="M75.2 91.4l-1.8 -1.4" stroke="#805070" stroke-width="0.8" opacity="0.8"/><path d="M23.2 65.9l1.3 -1.5" stroke="#805070" stroke-width="0.8" opacity="0.8"/><path d="M49.6 65.7l-1.8 4.5" stroke="#f0b0a0" stroke-width="0.8" opacity="0.8"/><path d="M21.2 80.2l0.6 -2.3" stroke="#805070" stroke-width="0.8" opacity="0.8"/><path d="M21.5 64.3l1.2 2.5" stroke="#d090a0" stroke-width="0.8" opacity="0.8"/><path d="M50.6 95.5l-0.2 2.2" stroke="#c06070" stroke-width="0.8" opacity="0.8"/><path d="M86.2 81.0l2.0 -2.1" stroke="#805070" stroke-width="0.8" opacity="0.8"/><path d="M46.6 92.9l-4.3 -1.3" stroke="#e0a090" stroke-width="0.8" opacity="0.8"/><path d="M58.7 109.1l2.8 -1.9" stroke="#d090a0" stroke-width="0.8" opacity="0.8"/><path d="M54.5 88.0l2.8 3.3" stroke="#c06070" stroke-width="0.8" opacity="0.8"/><path d="M51.0 113.7l2.8 0.4" stroke="#805070" stroke-width="0.8" opacity="0.8"/><path d="M22.8 97.3l-2.9 3.6" stroke="#60b0d0" stroke-width="0.8" opacity="0.8"/><path d="M22.1 84.7l3.1 -1.3" stroke="#60b0d0" stroke-width="0.8" opacity="0.8"/><path d="M61.8 102.8l-3.8 1.7" stroke="#805070" stroke-width="0.8" opacity="0.8"/><path d="M8.1 88.6l4.2 2.1" stroke="#805070" stroke-width="0.8" opacity="0.8"/><path d="M83.0 93.0l-0.8 -4.5" stroke="#60b0d0" stroke-width="0.8" opacity="0.8"/><path d="M39.7 92.0l0.6 -2.4" stroke="#d08070" stroke-width="0.8" opacity="0.8"/><path d="M53.9 50.3l3.8 -1.4" stroke="#c07090" stroke-width="0.8" opacity="0.8"/><path d="M10.0 88.7l3.4 2.9" stroke="#805070" stroke-width="0.8" opacity="0.8"/><path d="M12.5 79.8l-1.3 -3.4" stroke="#a06080" stroke-width="0.8" opacity="0.8"/><path d="M22.7 94.4l4.3 -0.6" stroke="#a06080" stroke-width="0.8" opacity="0.8"/><path d="M37.7 81.1l2.6 -1.3" stroke="#f0d0c0" stroke-width="0.8" opacity="0.8"/><path d="M88.9 80.3l-2.0 3.5" stroke="#805070" stroke-width="0.8" opacity="0.8"/><path d="M49.6 52.6l-4.4 -0.4" stroke="#a06080" stroke-width="0.8" opacity="0.8"/><path d="M28.2 68.9l-2.9 -2.7" stroke="#ffe0d0" stroke-width="0.8" opacity="0.8"/><path d="M44.6 56.6l0.2 3.5" stroke="#5090c0" stroke-width="0.8" opacity="0.8"/><path d="M26.5 133.7l-2.5 -1.2" stroke="#1a4a68" stroke-width="0.8" opacity="0.8"/><path d="M16.9 115.9l2.1 -1.9" stroke="#1a4a68" stroke-width="0.8" opacity="0.8"/><path d="M95.4 135.7l0.4 -2.1" stroke="#1a4a68" stroke-width="0.8" opacity="0.8"/><path d="M100.9 113.8l-1.9 -1.1" stroke="#1a4a68" stroke-width="0.8" opacity="0.8"/><path d="M61.3 102.2l1.4 -2.4" stroke="#1a4a68" stroke-width="0.8" opacity="0.8"/><path d="M104.5 101.6l-1.0 -1.5" stroke="#1a4a68" stroke-width="0.8" opacity="0.8"/><path d="M106.5 130.5l1.8 -1.8" stroke="#1a4a68" stroke-width="0.8" opacity="0.8"/><path d="M69.0 109.8l1.5 -0.6" stroke="#1a4a68" stroke-width="0.8" opacity="0.8"/><path d="M7.4 118.0l1.7 0.2" stroke="#1a4a68" stroke-width="0.8" opacity="0.8"/><path d="M75.1 104.0l0.5 1.1" stroke="#1a4a68" stroke-width="0.8" opacity="0.8"/><path d="M1.4 111.2l2.8 1.8" stroke="#1a4a68" stroke-width="0.8" opacity="0.8"/><path d="M81.0 100.7l1.2 -2.4" stroke="#1a4a68" stroke-width="0.8" opacity="0.8"/><path d="M108.0 111.8l0.6 1.2" stroke="#1a4a68" stroke-width="0.8" opacity="0.8"/><path d="M68.8 123.3l-1.1 1.6" stroke="#1a4a68" stroke-width="0.8" opacity="0.8"/><path d="M103.1 127.1l-2.2 -0.6" stroke="#1a4a68" stroke-width="0.8" opacity="0.8"/><path d="M21.6 121.3l-1.3 -3.0" stroke="#1a4a68" stroke-width="0.8" opacity="0.8"/><path d="M8.9 117.7l-1.7 -2.0" stroke="#1a4a68" stroke-width="0.8" opacity="0.8"/><path d="M70.6 128.9l-2.5 0.8" stroke="#1a4a68" stroke-width="0.8" opacity="0.8"/><path d="M53.2 127.0l-1.8 0.2" stroke="#1a4a68" stroke-width="0.8" opacity="0.8"/><path d="M11.6 111.3l2.4 2.3" stroke="#1a4a68" stroke-width="0.8" opacity="0.8"/><path d="M77.4 117.6l-0.6 1.0" stroke="#1a4a68" stroke-width="0.8" opacity="0.8"/><path d="M100.0 109.1l1.5 -0.8" stroke="#1a4a68" stroke-width="0.8" opacity="0.8"/><path d="M14.0 136.3l-1.1 2.1" stroke="#1a4a68" stroke-width="0.8" opacity="0.8"/><path d="M96.7 102.1l0.6 -1.3" stroke="#1a4a68" stroke-width="0.8" opacity="0.8"/><path d="M89.9 100.9l-2.1 -1.9" stroke="#1a4a68" stroke-width="0.8" opacity="0.8"/><path d="M110.8 103.7l-0.7 -1.4" stroke="#1a4a68" stroke-width="0.8" opacity="0.8"/><path d="M92.4 135.4l-1.7 0.3" stroke="#1a4a68" stroke-width="0.8" opacity="0.8"/><path d="M95.9 130.4l-2.2 1.9" stroke="#1a4a68" stroke-width="0.8" opacity="0.8"/><path d="M32.6 118.0l2.5 1.0" stroke="#1a4a68" stroke-width="0.8" opacity="0.8"/><path d="M1.6 107.0l0.3 -2.4" stroke="#1a4a68" stroke-width="0.8" opacity="0.8"/><path d="M97.6 100.1l-0.7 -2.1" stroke="#1a4a68" stroke-width="0.8" opacity="0.8"/><path d="M106.0 135.4l-0.8 1.2" stroke="#1a4a68" stroke-width="0.8" opacity="0.8"/><path d="M96.3 116.3l-2.5 0.2" stroke="#1a4a68" stroke-width="0.8" opacity="0.8"/><path d="M9.8 137.5l-1.2 -0.5" stroke="#1a4a68" stroke-width="0.8" opacity="0.8"/><path d="M5.2 106.0l0.8 -1.5" stroke="#1a4a68" stroke-width="0.8" opacity="0.8"/><path d="M28.4 126.4l1.5 -1.0" stroke="#1a4a68" stroke-width="0.8" opacity="0.8"/><path d="M89.7 104.7l-0.2 -2.5" stroke="#1a4a68" stroke-width="0.8" opacity="0.8"/><path d="M34.3 135.9l-0.1 1.5" stroke="#1a4a68" stroke-width="0.8" opacity="0.8"/><path d="M108.3 131.5l-0.3 0.6" stroke="#1a4a68" stroke-width="0.8" opacity="0.8"/><path d="M56.8 105.0l-0.9 0.5" stroke="#1a4a68" stroke-width="0.8" opacity="0.8"/><path d="M41.4 136.0l0.6 2.4" stroke="#1a4a68" stroke-width="0.8" opacity="0.8"/><path d="M59.0 131.2l-0.6 -1.0" stroke="#1a4a68" stroke-width="0.8" opacity="0.8"/><path d="M100.9 102.4l1.5 -2.5" stroke="#1a4a68" stroke-width="0.8" opacity="0.8"/><path d="M103.8 110.3l-0.8 0.5" stroke="#1a4a68" stroke-width="0.8" opacity="0.8"/><path d="M111.6 130.7l2.3 1.7" stroke="#1a4a68" stroke-width="0.8" opacity="0.8"/><path d="M13.2 127.5l-1.5 -2.9" stroke="#1a4a68" stroke-width="0.8" opacity="0.8"/><path d="M86.3 127.2l-2.1 0.3" stroke="#1a4a68" stroke-width="0.8" opacity="0.8"/><path d="M83.1 105.4l-1.2 0.9" stroke="#1a4a68" stroke-width="0.8" opacity="0.8"/><path d="M95.0 109.9l-0.9 1.6" stroke="#1a4a68" stroke-width="0.8" opacity="0.8"/><path d="M19.3 132.4l-1.9 2.2" stroke="#1a4a68" stroke-width="0.8" opacity="0.8"/><path d="M54.5 124.5l-2.5 -0.3" stroke="#1a4a68" stroke-width="0.8" opacity="0.8"/><path d="M0.2 117.6l-1.7 -0.5" stroke="#1a4a68" stroke-width="0.8" opacity="0.8"/><path d="M30.0 116.2l3.0 -1.5" stroke="#1a4a68" stroke-width="0.8" opacity="0.8"/><path d="M108.0 133.6l2.6 0.5" stroke="#1a4a68" stroke-width="0.8" opacity="0.8"/><path d="M26.6 126.9l1.4 1.2" stroke="#1a4a68" stroke-width="0.8" opacity="0.8"/><path d="M86.3 105.0l-0.2 -1.9" stroke="#1a4a68" stroke-width="0.8" opacity="0.8"/><path d="M108.1 134.4l-1.4 0.1" stroke="#1a4a68" stroke-width="0.8" opacity="0.8"/><path d="M32.5 118.6l-2.1 -1.3" stroke="#1a4a68" stroke-width="0.8" opacity="0.8"/><path d="M82.6 131.1l0.7 -1.8" stroke="#1a4a68" stroke-width="0.8" opacity="0.8"/><path d="M37.8 115.7l-2.8 -0.2" stroke="#1a4a68" stroke-width="0.8" opacity="0.8"/><path d="M3.9 110.3l0.5 2.0" stroke="#1a4a68" stroke-width="0.8" opacity="0.8"/><path d="M94.4 103.9l-1.2 -2.8" stroke="#1a4a68" stroke-width="0.8" opacity="0.8"/><path d="M90.1 131.1l0.0 0.5" stroke="#1a4a68" stroke-width="0.8" opacity="0.8"/><path d="M64.2 105.8l2.9 2.6" stroke="#1a4a68" stroke-width="0.8" opacity="0.8"/><path d="M87.5 101.1l1.2 1.8" stroke="#1a4a68" stroke-width="0.8" opacity="0.8"/><path d="M16.9 127.7l-0.2 2.5" stroke="#1a4a68" stroke-width="0.8" opacity="0.8"/><path d="M107.6 106.4l0.1 2.0" stroke="#1a4a68" stroke-width="0.8" opacity="0.8"/><path d="M104.9 133.6l-1.9 1.1" stroke="#1a4a68" stroke-width="0.8" opacity="0.8"/><path d="M92.9 112.8l-2.7 -0.3" stroke="#1a4a68" stroke-width="0.8" opacity="0.8"/><path d="M15.6 116.1l-0.9 0.0" stroke="#1a4a68" stroke-width="0.8" opacity="0.8"/><path d="M9.1 119.4l-0.3 -2.8" stroke="#1a4a68" stroke-width="0.8" opacity="0.8"/><path d="M47.8 112.7l-2.7 1.4" stroke="#1a4a68" stroke-width="0.8" opacity="0.8"/><path d="M16.9 135.3l1.9 -0.2" stroke="#1a4a68" stroke-width="0.8" opacity="0.8"/><path d="M112.0 108.3l-0.8 -1.3" stroke="#1a4a68" stroke-width="0.8" opacity="0.8"/><path d="M22.7 112.6l-0.2 2.5" stroke="#1a4a68" stroke-width="0.8" opacity="0.8"/><path d="M34.5 118.2l2.1 2.5" stroke="#1a4a68" stroke-width="0.8" opacity="0.8"/><path d="M16.6 108.5l-1.2 0.2" stroke="#1a4a68" stroke-width="0.8" opacity="0.8"/><path d="M50.5 131.8l-1.1 1.7" stroke="#1a4a68" stroke-width="0.8" opacity="0.8"/><path d="M85.9 123.0l0.7 1.3" stroke="#1a4a68" stroke-width="0.8" opacity="0.8"/><path d="M109.3 125.8l-1.6 -1.6" stroke="#1a4a68" stroke-width="0.8" opacity="0.8"/><path d="M25.7 124.0l0.2 2.9" stroke="#1a4a68" stroke-width="0.8" opacity="0.8"/><path d="M9.4 116.1l-2.5 -0.6" stroke="#1a4a68" stroke-width="0.8" opacity="0.8"/><path d="M112.3 101.8l2.5 -1.4" stroke="#1a4a68" stroke-width="0.8" opacity="0.8"/><path d="M90.6 131.6l2.2 1.4" stroke="#1a4a68" stroke-width="0.8" opacity="0.8"/><path d="M107.2 116.5l0.1 2.1" stroke="#1a4a68" stroke-width="0.8" opacity="0.8"/><path d="M108.7 128.8l-0.9 -1.7" stroke="#1a4a68" stroke-width="0.8" opacity="0.8"/><path d="M15.0 104.3l-0.6 1.8" stroke="#1a4a68" stroke-width="0.8" opacity="0.8"/><path d="M57.0 134.6l0.5 -2.2" stroke="#1a4a68" stroke-width="0.8" opacity="0.8"/><path d="M98.0 112.3l2.3 -0.2" stroke="#1a4a68" stroke-width="0.8" opacity="0.8"/><path d="M109.4 137.9l0.8 2.7" stroke="#1a4a68" stroke-width="0.8" opacity="0.8"/><path d="M95.3 120.0l2.3 2.5" stroke="#1a4a68" stroke-width="0.8" opacity="0.8"/><path d="M20.0 137.2l1.9 -0.8" stroke="#1a4a68" stroke-width="0.8" opacity="0.8"/><path d="M111.3 106.4l-0.1 2.9" stroke="#1a4a68" stroke-width="0.8" opacity="0.8"/><path d="M103.6 102.9l-2.6 -1.7" stroke="#1a4a68" stroke-width="0.8" opacity="0.8"/><path d="M14.8 105.5l-0.1 2.0" stroke="#1a4a68" stroke-width="0.8" opacity="0.8"/><path d="M87.7 116.8l0.8 -0.4" stroke="#1a4a68" stroke-width="0.8" opacity="0.8"/><path d="M17.0 133.6l-2.2 -2.3" stroke="#1a4a68" stroke-width="0.8" opacity="0.8"/><path d="M65.6 123.3l1.6 -1.7" stroke="#1a4a68" stroke-width="0.8" opacity="0.8"/><path d="M71.9 113.5l-0.8 1.9" stroke="#1a4a68" stroke-width="0.8" opacity="0.8"/><path d="M45.1 134.3l-2.8 -2.1" stroke="#1a4a68" stroke-width="0.8" opacity="0.8"/><path d="M25.0 110.7l2.6 -2.1" stroke="#1a4a68" stroke-width="0.8" opacity="0.8"/><path d="M80.2 121.4l-2.3 0.9" stroke="#1a4a68" stroke-width="0.8" opacity="0.8"/><path d="M110.0 125.8l1.3 -0.2" stroke="#1a4a68" stroke-width="0.8" opacity="0.8"/><path d="M5.5 138.7l-1.2 -2.8" stroke="#1a4a68" stroke-width="0.8" opacity="0.8"/><path d="M94.6 104.0l-1.7 -0.5" stroke="#1a4a68" stroke-width="0.8" opacity="0.8"/><path d="M95.8 109.1l-1.6 -2.1" stroke="#1a4a68" stroke-width="0.8" opacity="0.8"/><path d="M103.8 102.4l0.0 2.4" stroke="#1a4a68" stroke-width="0.8" opacity="0.8"/><path d="M91.0 131.6l2.8 -0.1" stroke="#1a4a68" stroke-width="0.8" opacity="0.8"/><path d="M21.8 132.7l2.3 1.5" stroke="#1a4a68" stroke-width="0.8" opacity="0.8"/><path d="M97.5 120.3l-0.0 -2.2" stroke="#1a4a68" stroke-width="0.8" opacity="0.8"/><path d="M97.2 117.3l-1.4 -1.7" stroke="#1a4a68" stroke-width="0.8" opacity="0.8"/><path d="M91.7 119.1l0.2 -2.5" stroke="#1a4a68" stroke-width="0.8" opacity="0.8"/><path d="M64.9 102.7l2.2 2.6" stroke="#1a4a68" stroke-width="0.8" opacity="0.8"/><path d="M56.4 107.5l-2.6 1.6" stroke="#1a4a68" stroke-width="0.8" opacity="0.8"/><path d="M83.2 117.7l-1.9 1.1" stroke="#1a4a68" stroke-width="0.8" opacity="0.8"/><path d="M58.0 101.7l-1.8 1.1" stroke="#1a4a68" stroke-width="0.8" opacity="0.8"/><path d="M66.9 104.1l1.7 2.6" stroke="#1a4a68" stroke-width="0.8" opacity="0.8"/><path d="M24.8 110.0l0.6 -0.1" stroke="#1a4a68" stroke-width="0.8" opacity="0.8"/><path d="M77.4 128.0l-0.1 -1.0" stroke="#1a4a68" stroke-width="0.8" opacity="0.8"/><path d="M98.4 128.5l0.4 -0.4" stroke="#1a4a68" stroke-width="0.8" opacity="0.8"/><path d="M23.4 133.4l-2.1 2.4" stroke="#1a4a68" stroke-width="0.8" opacity="0.8"/><path d="M47.1 108.3l-1.4 -0.0" stroke="#1a4a68" stroke-width="0.8" opacity="0.8"/><path d="M80.4 125.5l-0.5 -0.2" stroke="#1a4a68" stroke-width="0.8" opacity="0.8"/><path d="M62.7 101.2l-2.0 0.8" stroke="#1a4a68" stroke-width="0.8" opacity="0.8"/><path d="M14.8 117.9l2.0 -2.2" stroke="#1a4a68" stroke-width="0.8" opacity="0.8"/><path d="M31.6 138.5l0.5 -1.2" stroke="#1a4a68" stroke-width="0.8" opacity="0.8"/><path d="M90.5 112.1l-0.6 0.3" stroke="#1a4a68" stroke-width="0.8" opacity="0.8"/><path d="M69.7 112.1l1.4 -1.4" stroke="#1a4a68" stroke-width="0.8" opacity="0.8"/><path d="M1.0 121.2l2.3 1.0" stroke="#1a4a68" stroke-width="0.8" opacity="0.8"/><path d="M71.2 116.9l0.6 -0.9" stroke="#1a4a68" stroke-width="0.8" opacity="0.8"/><path d="M104.6 121.0l0.7 0.1" stroke="#1a4a68" stroke-width="0.8" opacity="0.8"/><path d="M110.0 107.8l2.6 -0.5" stroke="#1a4a68" stroke-width="0.8" opacity="0.8"/><path d="M17.3 106.2l0.3 -2.3" stroke="#1a4a68" stroke-width="0.8" opacity="0.8"/></g>
</svg></div>

<!-- scrollbars -->
<div class="a" style="left:295px;top:148px;width:14px;height:701px;background:#dcdcdc"></div>
<svg style="left:0;top:0" width="1" height="1"><path d="M298.5 159 H305.5 L302 155.5 Z" fill="#888"/><path d="M298.5 838 H305.5 L302 841.5 Z" fill="#888"/></svg>
<div class="a" style="left:295.5px;top:192px;width:13px;height:32px;border:1px solid #9a9a9a;border-radius:7px;background:#f6f6f6"></div>
<div class="a" style="left:49px;top:849px;width:246px;height:12px;background:#dcdcdc"></div>
<svg style="left:0;top:0" width="1" height="1"><path d="M60 851.5 V858.5 L56.5 855 Z" fill="#888"/><path d="M284 851.5 V858.5 L287.5 855 Z" fill="#888"/></svg>
<div class="a" style="left:69px;top:849px;width:192px;height:16px;border:1px solid #9a9a9a;border-radius:8px;background:#f3f3f3"></div>

<!-- pages -->
<div class="a" style="left:698px;top:86px;width:9px;height:775px;background:linear-gradient(to right,rgba(0,0,0,0),rgba(0,0,0,0.13))"></div>
<div class="a" style="left:707px;top:86px;width:594px;height:8px;background:#fff"></div>
<div class="a" style="left:707px;top:94px;width:598px;height:8px;background:#d0d0d0"></div>
<div class="a" style="left:1301px;top:86px;width:4px;height:775px;background:#d0d0d0"></div>
<div class="a" style="left:707px;top:102px;width:594px;height:759px;background:#fff"></div>
<div class="a" style="left:0;top:86px;width:1305px;height:5px;background:linear-gradient(to bottom,rgba(0,0,0,0.07),rgba(0,0,0,0))"></div>

<div class="a" id="page" style="left:707px;top:102px;width:594px;height:771px;overflow:hidden">
<div class="pt" style="left:0;top:99px;width:594px;text-align:center;font-size:30px;line-height:36px">攻克大脑</div>
<div class="pt b" style="left:70px;top:166px;font-size:11px;line-height:18px;font-weight:500;letter-spacing:-0.15px">大脑是世界上最复杂的“机器”。多个国家将投入数十亿美元，研发新工具、新技术，在未来几</div>
<div class="pt b" style="left:70px;top:188px;font-size:11px;line-height:18px;font-weight:500;letter-spacing:-0.15px">十年里彻底破解大脑的秘密。</div>
<div class="pt" style="left:71px;top:242px;font-size:14px;line-height:20px;letter-spacing:0.3px;word-spacing:2px">撰文<span style="font-size:16px;word-spacing:0"> / </span>拉斐尔·尤斯蒂（<span class="s15">Rafael Yuste</span><span style="margin-left:1px">）</span></div>
<div class="pt" style="left:113px;top:273px;font-size:14px;line-height:20px;letter-spacing:0.3px;word-spacing:0">乔治·邱奇（<span class="s15">George M. Church</span><span style="margin-left:1px">）</span></div>
<div class="pt" style="left:71px;top:304px;font-size:14px;line-height:20px;letter-spacing:0.3px;word-spacing:2px">翻译<span style="font-size:16px;word-spacing:0"> / </span>冯泽君</div>
<svg style="left:132px;top:332px" width="332" height="272"><use href="#brain"/></svg>
<div class="a" style="left:70px;top:610.8px;width:455px;height:3.4px;border-top:1.3px solid #111;border-bottom:1px solid #777"></div>
<div class="a" style="left:70px;top:610.5px;width:1.2px;height:4px;background:#111"></div>
<div class="a" style="left:523.8px;top:610.5px;width:1.2px;height:4px;background:#111"></div>
<div class="pt" style="left:0;top:622px;width:594px;text-align:center;font-size:15px;line-height:22px">精彩速览</div>
<div class="pt" style="left:99px;top:653px;font-size:15px;line-height:22px;letter-spacing:-0.4px">大脑及其产生意识的方式，仍是最大的科学谜团之一。要更好地理</div>
<div class="pt" style="left:71px;top:676px;font-size:15px;line-height:22px;letter-spacing:-0.4px">解大脑的运作机制，神经科学家需要新的工具来分析神经回路的功能。</div>
</div>
</body></html>
